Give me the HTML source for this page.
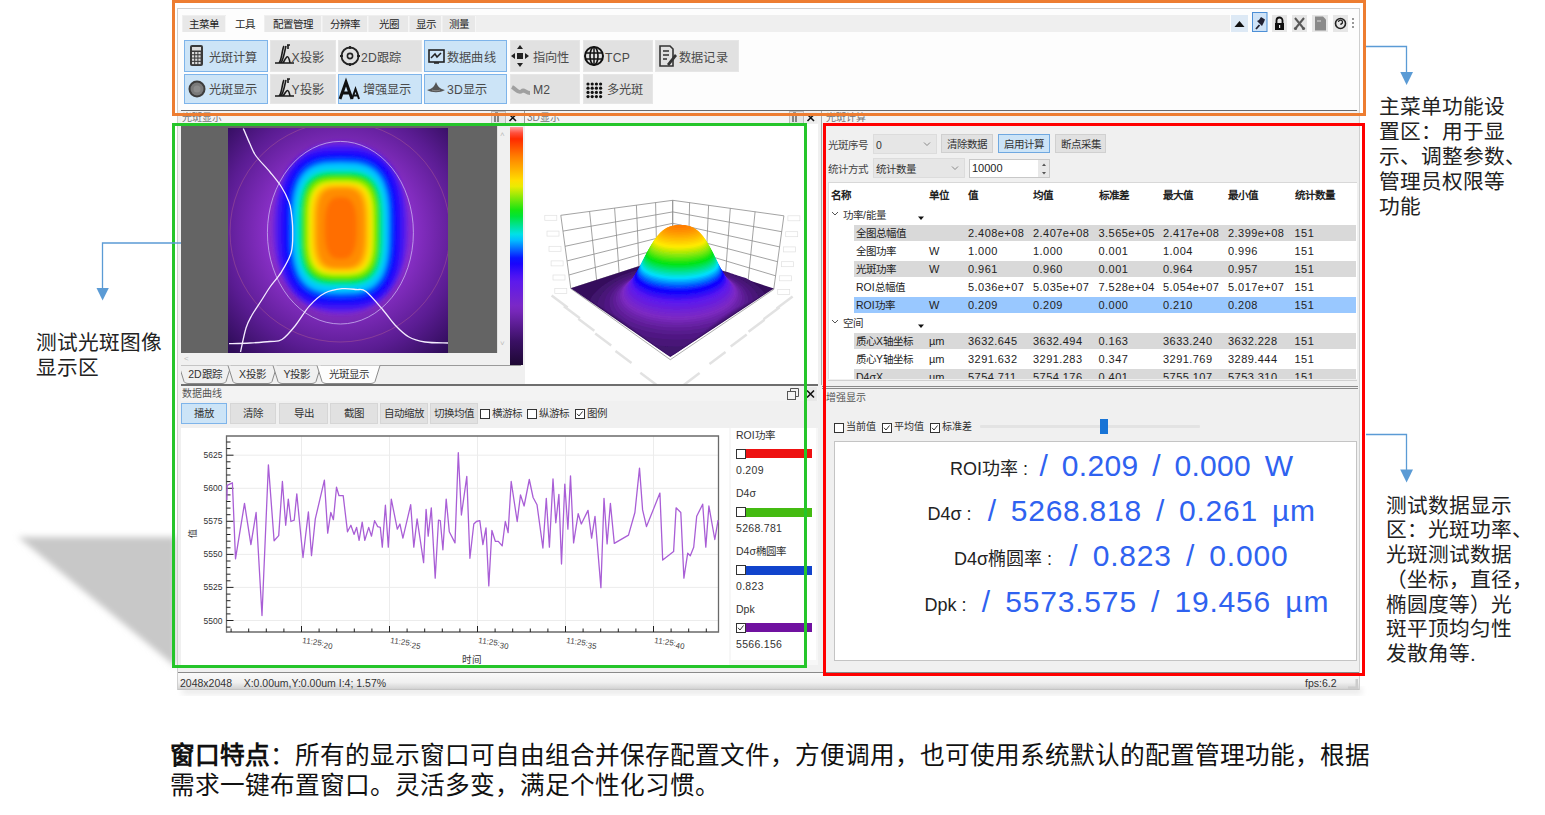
<!DOCTYPE html><html lang="zh-CN"><head><meta charset="utf-8"><style>html,body{margin:0;padding:0;width:1545px;height:815px;overflow:hidden;background:#fff;font-family:"Liberation Sans",sans-serif}.t{position:absolute;white-space:nowrap}</style></head><body><svg style="position:absolute;left:0;top:0" width="1545" height="815"><defs><filter id="sb" x="-20%" y="-20%" width="140%" height="140%"><feGaussianBlur stdDeviation="3"/></filter></defs><polygon points="18,537 176,537 176,667" fill="#c8c8c8" filter="url(#sb)"/><rect x="182" y="688" width="1180" height="6" fill="#e6e6e6" filter="url(#sb)"/></svg>
<div style="position:absolute;left:177px;top:8px;width:1183px;height:682px;background:#f0f0f0;border:1px solid #cfcfcf;box-sizing:border-box"></div>
<div style="position:absolute;left:178px;top:9px;width:1181px;height:101px;background:#fdfdfd"></div>
<div style="position:absolute;left:182px;top:15px;width:1048px;height:17px;background:#efefef"></div>
<div style="position:absolute;left:183px;top:16px;width:42px;height:16px;background:#e8e8e8;border-right:1px solid #f6f6f6"></div>
<div class="t" style="left:182px;top:16px;font-size:10.5px;line-height:16px;color:#222;width:44px;text-align:center;">主菜单</div>
<div style="position:absolute;left:226px;top:14px;width:38px;height:19px;background:#fdfdfd"></div>
<div class="t" style="left:226px;top:16px;font-size:10.5px;line-height:16px;color:#222;width:38px;text-align:center;">工具</div>
<div style="position:absolute;left:265px;top:16px;width:56px;height:16px;background:#e8e8e8;border-right:1px solid #f6f6f6"></div>
<div class="t" style="left:264px;top:16px;font-size:10.5px;line-height:16px;color:#222;width:58px;text-align:center;">配置管理</div>
<div style="position:absolute;left:323px;top:16px;width:44px;height:16px;background:#e8e8e8;border-right:1px solid #f6f6f6"></div>
<div class="t" style="left:322px;top:16px;font-size:10.5px;line-height:16px;color:#222;width:46px;text-align:center;">分辨率</div>
<div style="position:absolute;left:369px;top:16px;width:39px;height:16px;background:#e8e8e8;border-right:1px solid #f6f6f6"></div>
<div class="t" style="left:368px;top:16px;font-size:10.5px;line-height:16px;color:#222;width:41px;text-align:center;">光圈</div>
<div style="position:absolute;left:410px;top:16px;width:31px;height:16px;background:#e8e8e8;border-right:1px solid #f6f6f6"></div>
<div class="t" style="left:409px;top:16px;font-size:10.5px;line-height:16px;color:#222;width:33px;text-align:center;">显示</div>
<div style="position:absolute;left:443px;top:16px;width:32px;height:16px;background:#e8e8e8;border-right:1px solid #f6f6f6"></div>
<div class="t" style="left:442px;top:16px;font-size:10.5px;line-height:16px;color:#222;width:34px;text-align:center;">测量</div>
<div style="position:absolute;left:1231px;top:15px;width:17px;height:17px;background:#dde9f5"></div>
<svg style="position:absolute;left:1231px;top:10px" width="130" height="24"><polygon points="3.5,17 8.5,11 13.5,17" fill="#111"/><rect x="21.5" y="2.5" width="14.5" height="19" fill="#cfe3f7" stroke="#4d8fd6" stroke-width="1"/><path d="M25 19 L28.5 15" stroke="#223" stroke-width="1.8"/><path d="M26 11 L31 16 L33 12 L34 9.5 L30 7 L28 10 Z" fill="#223"/><rect x="41" y="5" width="15" height="17" fill="#e6e6e6"/><path d="M45.5 13.5 V10.5 A3 3 0 0 1 51.5 10.5 V13.5" stroke="#111" stroke-width="1.8" fill="none"/><rect x="44" y="13" width="9" height="7" fill="#111"/><rect x="48" y="15" width="1.2" height="3" fill="#eee"/><rect x="61" y="5" width="15" height="17" fill="#e6e6e6"/><path d="M64 8 L73 19 M73 8 L64 19" stroke="#5a5a5a" stroke-width="2"/><circle cx="64.5" cy="18.5" r="1.6" fill="#5a5a5a"/><circle cx="72.5" cy="18.5" r="1.6" fill="#5a5a5a"/><rect x="81" y="5" width="16" height="17" fill="#e6e6e6"/><path d="M84 6.5 H92 L95 9.5 V20.5 H84 Z" fill="#8a8a8a"/><path d="M86 11 H90" stroke="#ddd" stroke-width="1"/><rect x="102" y="5" width="15" height="17" fill="#e6e6e6"/><circle cx="109.5" cy="13.5" r="5" stroke="#222" stroke-width="1.6" fill="none"/><path d="M107.5 12 A2 2 0 1 1 110 14 V15" stroke="#222" stroke-width="1.3" fill="none"/><path d="M122 8 V18" stroke="#777" stroke-width="1.5" stroke-dasharray="2,2"/></svg>
<div style="position:absolute;left:184px;top:40px;width:84px;height:32px;background:#cce4f7;border:1px solid #7eb4ea;box-sizing:border-box"></div>
<svg style="position:absolute;left:184px;top:40px" width="84" height="32"><rect x="6" y="5" width="13" height="21" rx="2" fill="#3a3a3a"/><rect x="8" y="7" width="9" height="3.5" fill="#dcdcdc"/><rect x="8.0" y="12.0" width="2.2" height="2.2" fill="#dcdcdc"/><rect x="8.0" y="15.3" width="2.2" height="2.2" fill="#dcdcdc"/><rect x="8.0" y="18.6" width="2.2" height="2.2" fill="#dcdcdc"/><rect x="8.0" y="21.9" width="2.2" height="2.2" fill="#dcdcdc"/><rect x="11.2" y="12.0" width="2.2" height="2.2" fill="#dcdcdc"/><rect x="11.2" y="15.3" width="2.2" height="2.2" fill="#dcdcdc"/><rect x="11.2" y="18.6" width="2.2" height="2.2" fill="#dcdcdc"/><rect x="11.2" y="21.9" width="2.2" height="2.2" fill="#dcdcdc"/><rect x="14.4" y="12.0" width="2.2" height="2.2" fill="#dcdcdc"/><rect x="14.4" y="15.3" width="2.2" height="2.2" fill="#dcdcdc"/><rect x="14.4" y="18.6" width="2.2" height="2.2" fill="#dcdcdc"/><rect x="14.4" y="21.9" width="2.2" height="2.2" fill="#dcdcdc"/></svg>
<div class="t" style="left:208.5px;top:50.5px;font-size:12.2px;line-height:14px;color:#4a4a4a;letter-spacing:0.2px;">光斑计算</div>
<div style="position:absolute;left:270px;top:40px;width:66px;height:32px;background:#e1e1e1;border:1px solid #e6e6e6;box-sizing:border-box"></div>
<svg style="position:absolute;left:270px;top:40px" width="66" height="32"><path d="M5 23 H24 M9 23 C12 20 12 9 14 6 M11 23 C14 18 15 9 16 6 M13 23 C16 18 18 12 20 23 M17 5 H20 M18 5 V9" stroke="#1a1a1a" stroke-width="1.6" fill="none"/></svg>
<div class="t" style="left:291.5px;top:50.5px;font-size:12.2px;line-height:14px;color:#4a4a4a;letter-spacing:0.2px;">X投影</div>
<div style="position:absolute;left:338px;top:40px;width:84px;height:32px;background:#e1e1e1;border:1px solid #e6e6e6;box-sizing:border-box"></div>
<svg style="position:absolute;left:338px;top:40px" width="84" height="32"><circle cx="12" cy="16" r="8.5" stroke="#222" stroke-width="1.8" fill="none"/><circle cx="12" cy="16" r="2.6" stroke="#222" stroke-width="1.6" fill="none"/><path d="M12 6 V9 M12 23 V26 M2 16 H5 M19 16 H22" stroke="#222" stroke-width="1.8"/></svg>
<div class="t" style="left:361px;top:50.5px;font-size:12.2px;line-height:14px;color:#4a4a4a;letter-spacing:0.2px;">2D跟踪</div>
<div style="position:absolute;left:424px;top:40px;width:83px;height:32px;background:#cce4f7;border:1px solid #7eb4ea;box-sizing:border-box"></div>
<svg style="position:absolute;left:424px;top:40px" width="83" height="32"><rect x="5" y="10" width="15" height="12" stroke="#222" stroke-width="1.6" fill="none"/><path d="M7 18 L11 14 L13 17 L17 13" stroke="#222" stroke-width="1.5" fill="none"/><path d="M10 23 H15" stroke="#222" stroke-width="1.5"/></svg>
<div class="t" style="left:447px;top:50.5px;font-size:12.2px;line-height:14px;color:#4a4a4a;letter-spacing:0.2px;">数据曲线</div>
<div style="position:absolute;left:510px;top:40px;width:70px;height:32px;background:#e1e1e1;border:1px solid #e6e6e6;box-sizing:border-box"></div>
<svg style="position:absolute;left:510px;top:40px" width="70" height="32"><path d="M10 5 L13 9 H7 Z M10 27 L13 23 H7 Z M1 16 L5 13 V19 Z M19 16 L15 13 V19 Z" fill="#222"/><rect x="7" y="13" width="6" height="6" fill="#222"/></svg>
<div class="t" style="left:533px;top:50.5px;font-size:12.2px;line-height:14px;color:#4a4a4a;letter-spacing:0.2px;">指向性</div>
<div style="position:absolute;left:583px;top:40px;width:70px;height:32px;background:#e1e1e1;border:1px solid #e6e6e6;box-sizing:border-box"></div>
<svg style="position:absolute;left:583px;top:40px" width="70" height="32"><circle cx="11" cy="16" r="9" stroke="#111" stroke-width="2" fill="none"/><ellipse cx="11" cy="16" rx="4" ry="9" stroke="#111" stroke-width="1.6" fill="none"/><path d="M2 13 H20 M2 19 H20 M11 7 V25" stroke="#111" stroke-width="1.5"/></svg>
<div class="t" style="left:605px;top:50.5px;font-size:12.2px;line-height:14px;color:#4a4a4a;letter-spacing:0.2px;">TCP</div>
<div style="position:absolute;left:655px;top:40px;width:84px;height:32px;background:#e1e1e1;border:1px solid #e6e6e6;box-sizing:border-box"></div>
<svg style="position:absolute;left:655px;top:40px" width="84" height="32"><path d="M5 6 H15 L18 9 V26 H5 Z" stroke="#333" stroke-width="1.6" fill="none"/><path d="M8 11 H14 M8 15 H14 M8 19 H12" stroke="#333" stroke-width="1.3"/><path d="M12 24 L20 14 L22 16 L14 26 Z" fill="#333"/></svg>
<div class="t" style="left:679px;top:50.5px;font-size:12.2px;line-height:14px;color:#4a4a4a;letter-spacing:0.2px;">数据记录</div>
<div style="position:absolute;left:184px;top:74px;width:84px;height:30px;background:#cce4f7;border:1px solid #7eb4ea;box-sizing:border-box"></div>
<svg style="position:absolute;left:184px;top:74px" width="84" height="30"><circle cx="13" cy="15" r="8.5" fill="#3c3c3c"/><circle cx="13" cy="15" r="6.5" fill="#7a7a7a"/><circle cx="13" cy="15" r="3.5" fill="#8c8c8c"/></svg>
<div class="t" style="left:208.5px;top:83px;font-size:12.2px;line-height:14px;color:#4a4a4a;letter-spacing:0.2px;">光斑显示</div>
<div style="position:absolute;left:270px;top:74px;width:66px;height:30px;background:#e1e1e1;border:1px solid #e6e6e6;box-sizing:border-box"></div>
<svg style="position:absolute;left:270px;top:74px" width="66" height="30"><path d="M5 22 H24 M9 22 C12 20 12 9 14 6 M11 22 C14 18 15 9 16 6 M13 22 C16 18 18 12 20 22 M17 5 H20 M18 5 V9" stroke="#1a1a1a" stroke-width="1.6" fill="none"/></svg>
<div class="t" style="left:291.5px;top:83px;font-size:12.2px;line-height:14px;color:#4a4a4a;letter-spacing:0.2px;">Y投影</div>
<div style="position:absolute;left:338px;top:74px;width:84px;height:30px;background:#cce4f7;border:1px solid #7eb4ea;box-sizing:border-box"></div>
<svg style="position:absolute;left:338px;top:74px" width="84" height="30"><path d="M2 25 L8 8 L14 25 M4.5 19 H11.5" stroke="#111" stroke-width="3" fill="none"/><path d="M14 25 L17.5 15 L21 25 M15.5 21.5 H19.5" stroke="#111" stroke-width="2" fill="none"/></svg>
<div class="t" style="left:362.5px;top:83px;font-size:12.2px;line-height:14px;color:#4a4a4a;letter-spacing:0.2px;">增强显示</div>
<div style="position:absolute;left:424px;top:74px;width:83px;height:30px;background:#cce4f7;border:1px solid #7eb4ea;box-sizing:border-box"></div>
<svg style="position:absolute;left:424px;top:74px" width="83" height="30"><path d="M3 16 C8 15 10 13 12 8 C14 13 16 15 21 16 C16 19 8 19 3 16 Z" fill="#555"/><path d="M8 16 C10 17 14 17 16 16" stroke="#888" fill="none"/></svg>
<div class="t" style="left:447px;top:83px;font-size:12.2px;line-height:14px;color:#4a4a4a;letter-spacing:0.2px;">3D显示</div>
<div style="position:absolute;left:510px;top:74px;width:70px;height:30px;background:#e1e1e1;border:1px solid #e6e6e6;box-sizing:border-box"></div>
<svg style="position:absolute;left:510px;top:74px" width="70" height="30"><path d="M2 13 C6 15 8 20 12 17 C14 15 16 19 20 19" stroke="#a0a0a0" stroke-width="4" fill="none"/></svg>
<div class="t" style="left:533px;top:83px;font-size:12.2px;line-height:14px;color:#4a4a4a;letter-spacing:0.2px;">M2</div>
<div style="position:absolute;left:583px;top:74px;width:70px;height:30px;background:#e1e1e1;border:1px solid #e6e6e6;box-sizing:border-box"></div>
<svg style="position:absolute;left:583px;top:74px" width="70" height="30"><circle cx="5.0" cy="10.0" r="1.6" fill="#111"/><circle cx="5.0" cy="14.2" r="1.6" fill="#111"/><circle cx="5.0" cy="18.4" r="1.6" fill="#111"/><circle cx="5.0" cy="22.6" r="1.6" fill="#111"/><circle cx="9.2" cy="10.0" r="1.6" fill="#111"/><circle cx="9.2" cy="14.2" r="1.6" fill="#111"/><circle cx="9.2" cy="18.4" r="1.6" fill="#111"/><circle cx="9.2" cy="22.6" r="1.6" fill="#111"/><circle cx="13.4" cy="10.0" r="1.6" fill="#111"/><circle cx="13.4" cy="14.2" r="1.6" fill="#111"/><circle cx="13.4" cy="18.4" r="1.6" fill="#111"/><circle cx="13.4" cy="22.6" r="1.6" fill="#111"/><circle cx="17.6" cy="10.0" r="1.6" fill="#111"/><circle cx="17.6" cy="14.2" r="1.6" fill="#111"/><circle cx="17.6" cy="18.4" r="1.6" fill="#111"/><circle cx="17.6" cy="22.6" r="1.6" fill="#111"/></svg>
<div class="t" style="left:607px;top:83px;font-size:12.2px;line-height:14px;color:#4a4a4a;letter-spacing:0.2px;">多光斑</div>
<div style="position:absolute;left:181px;top:110px;width:1176px;height:1px;background:#6a6a6a"></div>
<div style="position:absolute;left:181px;top:111px;width:340px;height:13px;background:#f3f3f3"></div>
<div class="t" style="left:182px;top:112px;font-size:10px;line-height:11px;color:#777;">光斑显示</div>
<svg style="position:absolute;left:491px;top:111px" width="30" height="13"><rect x="0.5" y="0.5" width="14" height="12" fill="#e4e4e4" stroke="#bbb"/><path d="M4 2 V11 M7 2 V11 M4 2 H7" stroke="#444" stroke-width="1.2" fill="none"/><rect x="15.5" y="0.5" width="13" height="12" fill="#ededed"/><path d="M18.5 3.5 L25 10 M25 3.5 L18.5 10" stroke="#111" stroke-width="1.6"/></svg>
<div style="position:absolute;left:521px;top:111px;width:4px;height:274px;background:#f0f0f0"></div>
<div style="position:absolute;left:524px;top:111px;width:1px;height:13px;background:#999"></div>
<div style="position:absolute;left:525px;top:111px;width:293px;height:13px;background:#f3f3f3"></div>
<div class="t" style="left:527px;top:112px;font-size:10px;line-height:11px;color:#777;">3D显示</div>
<svg style="position:absolute;left:789px;top:111px" width="30" height="13"><rect x="0.5" y="0.5" width="14" height="12" fill="#e4e4e4" stroke="#bbb"/><path d="M4 2 V11 M7 2 V11 M4 2 H7" stroke="#444" stroke-width="1.2" fill="none"/><rect x="15.5" y="0.5" width="13" height="12" fill="#ededed"/><path d="M18.5 3.5 L25 10 M25 3.5 L18.5 10" stroke="#111" stroke-width="1.6"/></svg>
<div style="position:absolute;left:181px;top:126px;width:317px;height:227px;background:#646464"></div>
<svg style="position:absolute;left:228px;top:128px" width="220" height="225" viewBox="0 0 220 225"><defs><radialGradient id="glow" cx="0.51" cy="0.46" r="0.72" fx="0.51" fy="0.46"><stop offset="0" stop-color="#9a34d8"/><stop offset="0.45" stop-color="#8a30c8"/><stop offset="0.75" stop-color="#5a1c92"/><stop offset="1" stop-color="#2e0c58"/></radialGradient><filter id="bl" x="-10%" y="-10%" width="120%" height="120%"><feGaussianBlur stdDeviation="2.2"/></filter></defs><rect width="220" height="225" fill="url(#glow)"/><g filter="url(#bl)"><polygon points="180.7,100.0 180.5,109.4 179.8,117.5 178.6,125.2 177.0,132.4 174.9,139.3 172.4,145.8 169.4,151.9 166.1,157.5 162.3,162.8 158.2,167.5 153.7,171.7 148.9,175.5 143.8,178.6 138.3,181.3 132.6,183.3 126.5,184.8 120.1,185.7 112.7,186.0 105.3,185.7 98.9,184.8 92.8,183.3 87.1,181.3 81.6,178.6 76.5,175.5 71.7,171.7 67.2,167.5 63.1,162.8 59.3,157.5 56.0,151.9 53.0,145.8 50.5,139.3 48.4,132.4 46.8,125.2 45.6,117.5 44.9,109.4 44.7,100.0 44.9,90.6 45.6,82.5 46.8,74.8 48.4,67.6 50.5,60.7 53.0,54.2 56.0,48.1 59.3,42.5 63.1,37.2 67.2,32.5 71.7,28.3 76.5,24.5 81.6,21.4 87.1,18.7 92.8,16.7 98.9,15.2 105.3,14.3 112.7,14.0 120.1,14.3 126.5,15.2 132.6,16.7 138.3,18.7 143.8,21.4 148.9,24.5 153.7,28.3 158.2,32.5 162.3,37.2 166.1,42.5 169.4,48.1 172.4,54.2 174.9,60.7 177.0,67.6 178.6,74.8 179.8,82.5 180.5,90.6" fill="#6a22e0"/><polygon points="176.7,100.0 176.5,112.6 176.0,121.3 175.0,129.0 173.7,135.9 172.0,142.3 170.0,148.1 167.6,153.5 164.8,158.4 161.7,162.8 158.3,166.8 154.4,170.3 150.3,173.4 145.7,176.0 140.7,178.2 135.3,179.8 129.3,181.0 122.5,181.8 112.7,182.0 102.9,181.8 96.1,181.0 90.1,179.8 84.7,178.2 79.7,176.0 75.1,173.4 71.0,170.3 67.1,166.8 63.7,162.8 60.6,158.4 57.8,153.5 55.4,148.1 53.4,142.3 51.7,135.9 50.4,129.0 49.4,121.3 48.9,112.6 48.7,100.0 48.9,87.4 49.4,78.7 50.4,71.0 51.7,64.1 53.4,57.7 55.4,51.9 57.8,46.5 60.6,41.6 63.7,37.2 67.1,33.2 71.0,29.7 75.1,26.6 79.7,24.0 84.7,21.8 90.1,20.2 96.1,19.0 102.9,18.2 112.7,18.0 122.5,18.2 129.3,19.0 135.3,20.2 140.7,21.8 145.7,24.0 150.3,26.6 154.4,29.7 158.3,33.2 161.7,37.2 164.8,41.6 167.6,46.5 170.0,51.9 172.0,57.7 173.7,64.1 175.0,71.0 176.0,78.7 176.5,87.4" fill="#3a12f4"/><polygon points="170.7,100.0 170.5,114.1 170.1,122.7 169.3,129.9 168.3,136.3 166.9,142.0 165.2,147.1 163.2,151.8 161.0,156.0 158.4,159.8 155.5,163.2 152.2,166.2 148.7,168.8 144.7,171.0 140.4,172.8 135.5,174.2 130.0,175.2 123.5,175.8 112.7,176.0 101.9,175.8 95.4,175.2 89.9,174.2 85.0,172.8 80.7,171.0 76.7,168.8 73.2,166.2 69.9,163.2 67.0,159.8 64.4,156.0 62.2,151.8 60.2,147.1 58.5,142.0 57.1,136.3 56.1,129.9 55.3,122.7 54.9,114.1 54.7,100.0 54.9,85.9 55.3,77.3 56.1,70.1 57.1,63.7 58.5,58.0 60.2,52.9 62.2,48.2 64.4,44.0 67.0,40.2 69.9,36.8 73.2,33.8 76.7,31.2 80.7,29.0 85.0,27.2 89.9,25.8 95.4,24.8 101.9,24.2 112.7,24.0 123.5,24.2 130.0,24.8 135.5,25.8 140.4,27.2 144.7,29.0 148.7,31.2 152.2,33.8 155.5,36.8 158.4,40.2 161.0,44.0 163.2,48.2 165.2,52.9 166.9,58.0 168.3,63.7 169.3,70.1 170.1,77.3 170.5,85.9" fill="#0a00ff"/><polygon points="164.7,100.0 164.6,113.8 164.2,121.8 163.5,128.4 162.6,134.2 161.4,139.4 159.9,144.1 158.2,148.3 156.2,152.1 154.0,155.6 151.4,158.6 148.6,161.3 145.5,163.6 142.0,165.6 138.1,167.2 133.8,168.4 128.9,169.3 122.9,169.8 112.7,170.0 102.5,169.8 96.5,169.3 91.6,168.4 87.3,167.2 83.4,165.6 79.9,163.6 76.8,161.3 74.0,158.6 71.4,155.6 69.2,152.1 67.2,148.3 65.5,144.1 64.0,139.4 62.8,134.2 61.9,128.4 61.2,121.8 60.8,113.8 60.7,100.0 60.8,86.2 61.2,78.2 61.9,71.6 62.8,65.8 64.0,60.6 65.5,55.9 67.2,51.7 69.2,47.9 71.4,44.4 74.0,41.4 76.8,38.7 79.9,36.4 83.4,34.4 87.3,32.8 91.6,31.6 96.5,30.7 102.5,30.2 112.7,30.0 122.9,30.2 128.9,30.7 133.8,31.6 138.1,32.8 142.0,34.4 145.5,36.4 148.6,38.7 151.4,41.4 154.0,44.4 156.2,47.9 158.2,51.7 159.9,55.9 161.4,60.6 162.6,65.8 163.5,71.6 164.2,78.2 164.6,86.2" fill="#0050ff"/><polygon points="160.7,100.0 160.6,113.5 160.2,121.0 159.6,127.2 158.8,132.5 157.7,137.3 156.4,141.6 154.9,145.4 153.1,148.9 151.1,152.0 148.8,154.7 146.2,157.2 143.4,159.2 140.2,161.0 136.7,162.4 132.8,163.6 128.2,164.4 122.6,164.8 112.7,165.0 102.8,164.8 97.2,164.4 92.6,163.6 88.7,162.4 85.2,161.0 82.0,159.2 79.2,157.2 76.6,154.7 74.3,152.0 72.3,148.9 70.5,145.4 69.0,141.6 67.7,137.3 66.6,132.5 65.8,127.2 65.2,121.0 64.8,113.5 64.7,100.0 64.8,86.5 65.2,79.0 65.8,72.8 66.6,67.5 67.7,62.7 69.0,58.4 70.5,54.6 72.3,51.1 74.3,48.0 76.6,45.3 79.2,42.8 82.0,40.8 85.2,39.0 88.7,37.6 92.6,36.4 97.2,35.6 102.8,35.2 112.7,35.0 122.6,35.2 128.2,35.6 132.8,36.4 136.7,37.6 140.2,39.0 143.4,40.8 146.2,42.8 148.8,45.3 151.1,48.0 153.1,51.1 154.9,54.6 156.4,58.4 157.7,62.7 158.8,67.5 159.6,72.8 160.2,79.0 160.6,86.5" fill="#00c8ff"/><polygon points="155.7,100.0 155.6,113.2 155.3,120.1 154.8,125.6 154.1,130.3 153.2,134.4 152.1,138.1 150.8,141.4 149.3,144.4 147.6,147.0 145.6,149.3 143.4,151.4 141.0,153.2 138.2,154.6 135.1,155.9 131.7,156.8 127.6,157.5 122.5,157.9 112.7,158.0 102.9,157.9 97.8,157.5 93.7,156.8 90.3,155.9 87.2,154.6 84.4,153.2 82.0,151.4 79.8,149.3 77.8,147.0 76.1,144.4 74.6,141.4 73.3,138.1 72.2,134.4 71.3,130.3 70.6,125.6 70.1,120.1 69.8,113.2 69.7,100.0 69.8,86.8 70.1,79.9 70.6,74.4 71.3,69.7 72.2,65.6 73.3,61.9 74.6,58.6 76.1,55.6 77.8,53.0 79.8,50.7 82.0,48.6 84.4,46.8 87.2,45.4 90.3,44.1 93.7,43.2 97.8,42.5 102.9,42.1 112.7,42.0 122.5,42.1 127.6,42.5 131.7,43.2 135.1,44.1 138.2,45.4 141.0,46.8 143.4,48.6 145.6,50.7 147.6,53.0 149.3,55.6 150.8,58.6 152.1,61.9 153.2,65.6 154.1,69.7 154.8,74.4 155.3,79.9 155.6,86.8" fill="#00e8b0"/><polygon points="152.7,100.0 152.6,113.1 152.3,119.6 151.9,124.8 151.3,129.3 150.5,133.1 149.5,136.6 148.3,139.7 146.9,142.4 145.3,144.9 143.5,147.0 141.5,148.9 139.3,150.5 136.8,151.9 134.0,153.0 130.8,153.9 127.0,154.5 122.2,154.9 112.7,155.0 103.2,154.9 98.4,154.5 94.6,153.9 91.4,153.0 88.6,151.9 86.1,150.5 83.9,148.9 81.9,147.0 80.1,144.9 78.5,142.4 77.1,139.7 75.9,136.6 74.9,133.1 74.1,129.3 73.5,124.8 73.1,119.6 72.8,113.1 72.7,100.0 72.8,86.9 73.1,80.4 73.5,75.2 74.1,70.7 74.9,66.9 75.9,63.4 77.1,60.3 78.5,57.6 80.1,55.1 81.9,53.0 83.9,51.1 86.1,49.5 88.6,48.1 91.4,47.0 94.6,46.1 98.4,45.5 103.2,45.1 112.7,45.0 122.2,45.1 127.0,45.5 130.8,46.1 134.0,47.0 136.8,48.1 139.3,49.5 141.5,51.1 143.5,53.0 145.3,55.1 146.9,57.6 148.3,60.3 149.5,63.4 150.5,66.9 151.3,70.7 151.9,75.2 152.3,80.4 152.6,86.9" fill="#00e010"/><polygon points="148.7,100.0 148.6,112.4 148.4,118.4 148.0,123.1 147.4,127.1 146.7,130.6 145.9,133.6 144.8,136.4 143.6,138.8 142.2,141.0 140.7,142.9 138.9,144.6 136.9,146.1 134.7,147.3 132.2,148.3 129.3,149.0 125.9,149.6 121.6,149.9 112.7,150.0 103.8,149.9 99.5,149.6 96.1,149.0 93.2,148.3 90.7,147.3 88.5,146.1 86.5,144.6 84.7,142.9 83.2,141.0 81.8,138.8 80.6,136.4 79.5,133.6 78.7,130.6 78.0,127.1 77.4,123.1 77.0,118.4 76.8,112.4 76.7,100.0 76.8,87.6 77.0,81.6 77.4,76.9 78.0,72.9 78.7,69.4 79.5,66.4 80.6,63.6 81.8,61.2 83.2,59.0 84.7,57.1 86.5,55.4 88.5,53.9 90.7,52.7 93.2,51.7 96.1,51.0 99.5,50.4 103.8,50.1 112.7,50.0 121.6,50.1 125.9,50.4 129.3,51.0 132.2,51.7 134.7,52.7 136.9,53.9 138.9,55.4 140.7,57.1 142.2,59.0 143.6,61.2 144.8,63.6 145.9,66.4 146.7,69.4 147.4,72.9 148.0,76.9 148.4,81.6 148.6,87.6" fill="#90ee00"/><polygon points="144.7,100.0 144.6,111.4 144.4,116.9 144.1,121.2 143.6,124.9 143.0,128.1 142.2,131.0 141.3,133.5 140.2,135.7 139.0,137.7 137.6,139.5 136.0,141.0 134.2,142.4 132.3,143.5 130.0,144.4 127.5,145.1 124.5,145.6 120.6,145.9 112.7,146.0 104.8,145.9 100.9,145.6 97.9,145.1 95.4,144.4 93.1,143.5 91.2,142.4 89.4,141.0 87.8,139.5 86.4,137.7 85.2,135.7 84.1,133.5 83.2,131.0 82.4,128.1 81.8,124.9 81.3,121.2 81.0,116.9 80.8,111.4 80.7,100.0 80.8,88.6 81.0,83.1 81.3,78.8 81.8,75.1 82.4,71.9 83.2,69.0 84.1,66.5 85.2,64.3 86.4,62.3 87.8,60.5 89.4,59.0 91.2,57.6 93.1,56.5 95.4,55.6 97.9,54.9 100.9,54.4 104.8,54.1 112.7,54.0 120.6,54.1 124.5,54.4 127.5,54.9 130.0,55.6 132.3,56.5 134.2,57.6 136.0,59.0 137.6,60.5 139.0,62.3 140.2,64.3 141.3,66.5 142.2,69.0 143.0,71.9 143.6,75.1 144.1,78.8 144.4,83.1 144.6,88.6" fill="#ffe600"/><polygon points="140.7,100.0 140.6,110.7 140.5,115.8 140.2,119.9 139.7,123.3 139.2,126.3 138.5,128.9 137.7,131.3 136.7,133.4 135.7,135.3 134.5,136.9 133.1,138.4 131.5,139.6 129.8,140.6 127.9,141.5 125.6,142.2 123.0,142.6 119.6,142.9 112.7,143.0 105.8,142.9 102.4,142.6 99.8,142.2 97.5,141.5 95.6,140.6 93.9,139.6 92.3,138.4 90.9,136.9 89.7,135.3 88.7,133.4 87.7,131.3 86.9,128.9 86.2,126.3 85.7,123.3 85.2,119.9 84.9,115.8 84.8,110.7 84.7,100.0 84.8,89.3 84.9,84.2 85.2,80.1 85.7,76.7 86.2,73.7 86.9,71.1 87.7,68.7 88.7,66.6 89.7,64.7 90.9,63.1 92.3,61.6 93.9,60.4 95.6,59.4 97.5,58.5 99.8,57.8 102.4,57.4 105.8,57.1 112.7,57.0 119.6,57.1 123.0,57.4 125.6,57.8 127.9,58.5 129.8,59.4 131.5,60.4 133.1,61.6 134.5,63.1 135.7,64.7 136.7,66.6 137.7,68.7 138.5,71.1 139.2,73.7 139.7,76.7 140.2,80.1 140.5,84.2 140.6,89.3" fill="#ffb800"/><polygon points="136.7,100.0 136.6,109.5 136.5,114.3 136.2,118.1 135.8,121.3 135.4,124.1 134.8,126.6 134.0,128.8 133.2,130.8 132.3,132.6 131.2,134.2 130.0,135.6 128.7,136.8 127.2,137.8 125.5,138.6 123.5,139.2 121.3,139.6 118.4,139.9 112.7,140.0 107.0,139.9 104.1,139.6 101.9,139.2 99.9,138.6 98.2,137.8 96.7,136.8 95.4,135.6 94.2,134.2 93.1,132.6 92.2,130.8 91.4,128.8 90.6,126.6 90.0,124.1 89.6,121.3 89.2,118.1 88.9,114.3 88.8,109.5 88.7,100.0 88.8,90.5 88.9,85.7 89.2,81.9 89.6,78.7 90.0,75.9 90.6,73.4 91.4,71.2 92.2,69.2 93.1,67.4 94.2,65.8 95.4,64.4 96.7,63.2 98.2,62.2 99.9,61.4 101.9,60.8 104.1,60.4 107.0,60.1 112.7,60.0 118.4,60.1 121.3,60.4 123.5,60.8 125.5,61.4 127.2,62.2 128.7,63.2 130.0,64.4 131.2,65.8 132.3,67.4 133.2,69.2 134.0,71.2 134.8,73.4 135.4,75.9 135.8,78.7 136.2,81.9 136.5,85.7 136.6,90.5" fill="#ff8c00"/><polygon points="128.7,100.0 128.7,105.4 128.5,108.9 128.3,111.8 128.0,114.4 127.6,116.8 127.1,118.9 126.6,120.8 125.9,122.6 125.2,124.2 124.4,125.6 123.5,126.9 122.5,128.0 121.3,128.9 120.1,129.7 118.8,130.2 117.3,130.7 115.5,130.9 112.7,131.0 109.9,130.9 108.1,130.7 106.6,130.2 105.3,129.7 104.1,128.9 102.9,128.0 101.9,126.9 101.0,125.6 100.2,124.2 99.5,122.6 98.8,120.8 98.3,118.9 97.8,116.8 97.4,114.4 97.1,111.8 96.9,108.9 96.7,105.4 96.7,100.0 96.7,94.6 96.9,91.1 97.1,88.2 97.4,85.6 97.8,83.2 98.3,81.1 98.8,79.2 99.5,77.4 100.2,75.8 101.0,74.4 101.9,73.1 102.9,72.0 104.1,71.1 105.3,70.3 106.6,69.8 108.1,69.3 109.9,69.1 112.7,69.0 115.5,69.1 117.3,69.3 118.8,69.8 120.1,70.3 121.3,71.1 122.5,72.0 123.5,73.1 124.4,74.4 125.2,75.8 125.9,77.4 126.6,79.2 127.1,81.1 127.6,83.2 128.0,85.6 128.3,88.2 128.5,91.1 128.7,94.6" fill="#ff6e00"/></g><ellipse cx="112.39999999999998" cy="104.69999999999999" rx="73" ry="91.3" fill="none" stroke="#c8b0f0" stroke-width="1" opacity="0.8"/><circle cx="112" cy="104" r="110" fill="none" stroke="#b06090" stroke-width="1" opacity="0.45"/><path d="M1.0,215.7 C4.5,215.6 15.2,215.4 22.0,215.0 C28.8,214.6 36.7,214.1 42.0,213.5 C47.3,212.9 49.8,214.1 54.0,211.5 C58.2,208.9 62.4,203.7 67.0,198.0 C71.6,192.3 76.7,183.1 81.7,177.6 C86.7,172.1 91.6,167.8 97.0,165.0 C102.4,162.2 108.8,161.3 114.0,160.7 C119.2,160.1 124.0,161.0 128.0,161.5 C132.0,162.0 133.5,160.1 138.0,163.5 C142.5,166.9 150.2,176.4 155.0,182.0 C159.8,187.6 162.8,192.6 167.0,197.0 C171.2,201.4 175.5,205.9 180.5,208.7 C185.5,211.5 190.4,212.9 197.0,214.0 C203.6,215.1 216.2,214.8 220.0,215.0 " fill="none" stroke="#f4ecff" stroke-width="1.3" stroke-linejoin="round"/><path d="M15.3,0.4 C16.4,3.0 19.9,11.4 22.0,16.0 C24.1,20.6 24.7,23.3 28.0,28.0 C31.3,32.7 37.8,38.8 42.0,44.0 C46.2,49.2 50.3,54.0 53.5,59.0 C56.7,64.0 59.4,69.8 61.0,74.0 C62.6,78.2 62.7,79.9 63.3,84.5 C63.9,89.1 64.7,94.8 64.7,101.4 C64.7,108.0 65.2,116.9 63.3,124.0 C61.4,131.1 57.1,138.0 53.5,143.8 C49.9,149.6 45.3,154.3 42.0,159.0 C38.7,163.7 36.7,167.3 33.7,172.0 C30.7,176.7 26.6,182.3 24.0,187.0 C21.4,191.7 19.9,193.8 18.0,200.0 C16.1,206.2 13.4,220.0 12.5,224.0 " fill="none" stroke="#f4ecff" stroke-width="1.3" stroke-linejoin="round"/></svg>
<div style="position:absolute;left:497px;top:126px;width:13px;height:227px;background:#f0f0f0;border-left:1px solid #e0e0e0;box-sizing:border-box"></div>
<div class="t" style="left:500px;top:131px;font-size:8px;line-height:8px;color:#bbb;">&#708;</div>
<div class="t" style="left:500px;top:340px;font-size:8px;line-height:8px;color:#bbb;">&#709;</div>
<svg style="position:absolute;left:510px;top:127px" width="13" height="238"><defs><linearGradient id="cb" x1="0" y1="0" x2="0" y2="1"><stop offset="0.000" stop-color="#ffa0a0"/><stop offset="0.025" stop-color="#ff4f3c"/><stop offset="0.050" stop-color="#ff2a00"/><stop offset="0.075" stop-color="#ff4600"/><stop offset="0.100" stop-color="#ff6300"/><stop offset="0.125" stop-color="#ff7f00"/><stop offset="0.150" stop-color="#ff9700"/><stop offset="0.175" stop-color="#ffae00"/><stop offset="0.200" stop-color="#ffc600"/><stop offset="0.225" stop-color="#ffde00"/><stop offset="0.250" stop-color="#eaeb02"/><stop offset="0.275" stop-color="#b5ea06"/><stop offset="0.300" stop-color="#7fe80a"/><stop offset="0.325" stop-color="#4ae60e"/><stop offset="0.350" stop-color="#15e512"/><stop offset="0.375" stop-color="#00e437"/><stop offset="0.400" stop-color="#00e372"/><stop offset="0.425" stop-color="#00e2ad"/><stop offset="0.450" stop-color="#00e1e7"/><stop offset="0.475" stop-color="#02bfff"/><stop offset="0.500" stop-color="#0487ff"/><stop offset="0.525" stop-color="#074fff"/><stop offset="0.550" stop-color="#0916ff"/><stop offset="0.575" stop-color="#1905fc"/><stop offset="0.600" stop-color="#320cf7"/><stop offset="0.625" stop-color="#4b13f3"/><stop offset="0.650" stop-color="#5d1aec"/><stop offset="0.675" stop-color="#641de3"/><stop offset="0.700" stop-color="#6c21d9"/><stop offset="0.725" stop-color="#7325d0"/><stop offset="0.750" stop-color="#7a28c7"/><stop offset="0.775" stop-color="#7627b9"/><stop offset="0.800" stop-color="#6a23a8"/><stop offset="0.825" stop-color="#5e1e97"/><stop offset="0.850" stop-color="#521986"/><stop offset="0.875" stop-color="#461575"/><stop offset="0.900" stop-color="#3a1064"/><stop offset="0.925" stop-color="#330e58"/><stop offset="0.950" stop-color="#2c0c4c"/><stop offset="0.975" stop-color="#250a40"/><stop offset="1.000" stop-color="#1e0834"/></linearGradient></defs><rect width="13" height="238" fill="url(#cb)"/></svg>
<div style="position:absolute;left:523px;top:124px;width:2px;height:261px;background:#f0f0f0"></div>
<div style="position:absolute;left:181px;top:353px;width:329px;height:13px;background:#f0f0f0"></div>
<div class="t" style="left:184px;top:354px;font-size:8px;line-height:10px;color:#bbb;">&#706;</div>
<div style="position:absolute;left:181px;top:365px;width:340px;height:1px;background:#9a9a9a"></div>
<div style="position:absolute;left:181px;top:366px;width:340px;height:19px;background:#f0f0f0"></div>
<svg style="position:absolute;left:181px;top:365px" width="340" height="20"><path d="M-2,0.5 L3,16.5 Q4,18.5 7,18.5 L41,18.5 Q44,18.5 45,16.5 L50,0.5" fill="#f0f0f0" stroke="#8a8a8a" stroke-width="1"/><path d="M47,0.5 L52,16.5 Q53,18.5 56,18.5 L87,18.5 Q90,18.5 91,16.5 L96,0.5" fill="#f0f0f0" stroke="#8a8a8a" stroke-width="1"/><path d="M92,0.5 L97,16.5 Q98,18.5 101,18.5 L131,18.5 Q134,18.5 135,16.5 L140,0.5" fill="#f0f0f0" stroke="#8a8a8a" stroke-width="1"/><path d="M136,0.5 L141,16.5 Q142,18.5 145,18.5 L190,18.5 Q193,18.5 194,16.5 L199,0.5" fill="#fdfdfd" stroke="#8a8a8a" stroke-width="1"/></svg>
<div class="t" style="left:181px;top:368px;font-size:10.5px;line-height:12px;color:#333;width:48px;text-align:center;">2D跟踪</div>
<div class="t" style="left:230px;top:368px;font-size:10.5px;line-height:12px;color:#333;width:45px;text-align:center;">X投影</div>
<div class="t" style="left:275px;top:368px;font-size:10.5px;line-height:12px;color:#333;width:44px;text-align:center;">Y投影</div>
<div class="t" style="left:319px;top:368px;font-size:10.5px;line-height:12px;color:#333;width:59px;text-align:center;">光斑显示</div>
<div style="position:absolute;left:181px;top:384px;width:638px;height:2px;background:#6e6e6e"></div>
<div style="position:absolute;left:525px;top:124px;width:293px;height:260px;background:#fff"></div>
<svg style="position:absolute;left:525px;top:124px" width="293" height="260"><path d="M45.8,164.6 L147.7,131.5 L248.7,165.5 M44.0,151.0 L147.7,121.0 L250.6,151.8 M42.1,136.9 L147.7,110.3 L252.6,137.7 M40.0,122.3 L147.7,99.3 L254.6,122.9 M38.0,107.1 L147.7,87.9 L256.7,107.7 M35.8,91.3 L147.7,76.3 L258.9,91.8 M147.7,131.5 L147.7,76.3 M147.7,131.5 L147.7,76.3 M131.8,136.6 L130.6,78.6 M163.3,136.7 L164.6,78.6 M114.0,142.4 L111.4,81.2 M180.9,142.6 L183.6,81.3 M94.1,148.9 L89.6,84.1 M200.6,149.3 L205.3,84.3 M71.6,156.2 L64.6,87.5 M223.1,156.8 L230.1,87.7 M45.8,164.6 L35.8,91.3 M248.7,165.5 L258.9,91.8" stroke="#8c8c8c" stroke-width="0.8" fill="none"/><path d="M45.8,164.6 L145.3,235.7 L248.7,165.5" stroke="#9a9a9a" stroke-width="0.8" fill="none"/><rect x="29.8" y="164.6" width="12" height="5" fill="none" stroke="#e0e0e0" stroke-width="0.7"/><rect x="252.7" y="165.5" width="12" height="5" fill="none" stroke="#e0e0e0" stroke-width="0.7"/><rect x="28.0" y="151.0" width="12" height="5" fill="none" stroke="#e0e0e0" stroke-width="0.7"/><rect x="254.6" y="151.8" width="12" height="5" fill="none" stroke="#e0e0e0" stroke-width="0.7"/><rect x="26.1" y="136.9" width="12" height="5" fill="none" stroke="#e0e0e0" stroke-width="0.7"/><rect x="256.6" y="137.7" width="12" height="5" fill="none" stroke="#e0e0e0" stroke-width="0.7"/><rect x="24.0" y="122.3" width="12" height="5" fill="none" stroke="#e0e0e0" stroke-width="0.7"/><rect x="258.6" y="122.9" width="12" height="5" fill="none" stroke="#e0e0e0" stroke-width="0.7"/><rect x="22.0" y="107.1" width="12" height="5" fill="none" stroke="#e0e0e0" stroke-width="0.7"/><rect x="260.7" y="107.7" width="12" height="5" fill="none" stroke="#e0e0e0" stroke-width="0.7"/><rect x="19.8" y="91.3" width="12" height="5" fill="none" stroke="#e0e0e0" stroke-width="0.7"/><rect x="262.9" y="91.8" width="12" height="5" fill="none" stroke="#e0e0e0" stroke-width="0.7"/><path d="M251.6,184.6 L267.6,172.6" stroke="#e2e2e2" stroke-width="2.5"/><path d="M42.6,183.5 L26.6,171.5" stroke="#e2e2e2" stroke-width="2.5"/><path d="M238.6,195.3 L254.6,183.3" stroke="#e2e2e2" stroke-width="2.5"/><path d="M54.9,194.2 L38.9,182.2" stroke="#e2e2e2" stroke-width="2.5"/><path d="M223.5,207.7 L239.5,195.7" stroke="#e2e2e2" stroke-width="2.5"/><path d="M69.3,206.7 L53.3,194.7" stroke="#e2e2e2" stroke-width="2.5"/><path d="M205.7,222.4 L221.7,210.4" stroke="#e2e2e2" stroke-width="2.5"/><path d="M86.2,221.4 L70.2,209.4" stroke="#e2e2e2" stroke-width="2.5"/><path d="M184.5,239.9 L200.5,227.9" stroke="#e2e2e2" stroke-width="2.5"/><path d="M106.5,239.1 L90.5,227.1" stroke="#e2e2e2" stroke-width="2.5"/><path d="M158.6,261.1 L174.6,249.1" stroke="#e2e2e2" stroke-width="2.5"/><path d="M131.3,260.7 L115.3,248.7" stroke="#e2e2e2" stroke-width="2.5"/><defs><filter id="sf" x="-5%" y="-5%" width="110%" height="110%"><feGaussianBlur stdDeviation="0.7"/></filter></defs><g filter="url(#sf)"><polygon points="45.8,164.2 145.3,233.1 248.8,164.5 147.7,131.3" fill="#350f5b"/><polygon points="97.6,199.3 99.0,200.3 100.4,201.3 101.9,202.3 103.4,203.4 104.9,204.4 106.4,205.5 108.0,206.6 109.6,207.7 111.3,208.9 113.0,210.1 114.8,211.4 116.6,212.7 118.6,214.1 120.6,215.5 122.7,217.0 124.9,218.5 127.2,220.2 129.7,221.9 132.3,223.7 135.1,225.7 138.1,227.8 141.3,230.1 144.8,232.0 148.9,230.6 152.8,227.9 156.4,225.5 159.7,223.3 162.8,221.3 165.6,219.3 168.3,217.6 170.8,215.9 173.1,214.3 175.3,212.9 177.4,211.4 179.4,210.1 181.3,208.8 183.1,207.6 184.9,206.5 186.6,205.3 188.2,204.2 189.8,203.2 191.3,202.2 192.8,201.2 194.2,200.2 195.6,199.3 197.0,198.4 198.3,197.4 199.7,196.6 201.0,195.7 202.3,194.8 203.5,194.0 204.8,193.1 206.1,192.3 207.3,191.4 208.5,190.6 209.8,189.8 211.0,188.9 212.3,188.1 213.5,187.3 214.8,186.4 216.1,185.5 217.4,184.7 218.7,183.8 220.0,182.9 221.4,182.0 222.7,181.1 224.2,180.1 225.6,179.2 227.1,178.2 228.6,177.2 230.2,176.1 231.8,175.0 233.5,173.9 235.2,172.7 237.1,171.5 239.0,170.2 239.5,168.9 238.6,167.7 237.5,166.5 236.4,165.4 235.3,164.2 234.1,163.1 232.9,162.0 231.6,161.0 230.2,159.9 228.8,158.9 227.4,158.0 225.9,157.0 224.4,156.1 222.9,155.2 221.3,154.3 219.2,153.6 217.1,153.0 215.1,152.3 213.2,151.7 211.3,151.0 209.4,150.4 207.6,149.8 205.7,149.2 204.0,148.6 202.2,148.0 200.4,147.4 198.7,146.9 196.9,146.3 195.2,145.7 193.5,145.1 191.7,144.6 190.0,144.0 188.2,143.4 186.2,143.1 184.2,142.7 182.2,142.4 180.2,142.1 178.1,141.9 176.1,141.6 174.0,141.4 171.9,141.2 169.9,141.0 167.8,140.9 165.7,140.8 163.6,140.7 161.5,140.6 159.4,140.6 157.3,140.6 155.2,140.6 153.1,140.6 151.0,140.6 148.9,140.7 146.8,140.8 144.7,140.9 142.6,141.1 140.5,141.2 138.4,141.4 136.3,141.7 134.3,141.9 132.2,142.2 130.1,142.5 128.0,142.8 126.0,143.1 123.9,143.5 121.9,143.9 119.8,144.3 117.8,144.7 115.8,145.2 113.8,145.7 111.8,146.2 109.9,146.8 107.9,147.3 106.0,147.9 104.1,148.6 102.2,149.2 100.3,149.9 98.4,150.6 96.6,151.3 94.8,152.1 93.0,152.9 91.2,153.7 89.5,154.5 87.8,155.4 86.1,156.3 84.5,157.2 82.9,158.2 81.3,159.2 79.8,160.2 78.4,161.2 76.9,162.3 75.5,163.4 74.2,164.5 72.9,165.6 71.7,166.8 70.5,168.0 69.4,169.2 68.3,170.5 67.3,171.8 66.4,173.1 65.6,174.4 64.8,175.7 66.0,177.0 67.7,178.2 69.4,179.4 71.0,180.5 72.6,181.6 74.1,182.7 75.6,183.8 77.1,184.8 78.5,185.8 79.9,186.8 81.3,187.8 82.7,188.8 84.1,189.8 85.4,190.7 86.8,191.7 88.1,192.6 89.5,193.6 90.8,194.5 92.2,195.5 93.5,196.4 94.9,197.4 96.2,198.3" fill="#3f126c"/><polygon points="97.5,198.2 99.0,199.2 100.4,200.2 101.8,201.2 103.3,202.3 104.8,203.3 106.3,204.4 107.9,205.5 109.5,206.6 111.2,207.8 112.9,209.0 114.7,210.3 116.6,211.6 118.5,212.9 120.5,214.3 122.6,215.8 124.8,217.4 127.2,219.0 129.7,220.7 132.8,221.4 136.1,221.7 139.4,222.0 142.8,222.2 146.2,222.3 149.5,222.4 153.0,222.4 156.4,222.3 159.8,222.1 162.8,220.1 165.7,218.2 168.3,216.4 170.8,214.7 173.2,213.2 175.4,211.7 177.5,210.3 179.5,209.0 181.4,207.7 183.2,206.5 184.9,205.3 186.6,204.2 188.3,203.1 189.8,202.1 191.3,201.1 192.8,200.1 194.3,199.1 195.7,198.2 197.1,197.3 198.4,196.4 199.7,195.5 201.0,194.6 202.3,193.8 203.6,192.9 204.9,192.1 206.1,191.2 207.4,190.4 208.6,189.6 209.9,188.7 211.1,187.9 212.4,187.1 213.6,186.2 214.9,185.4 216.2,184.6 217.5,183.7 218.8,182.8 220.1,181.9 221.5,181.0 222.9,180.1 224.3,179.2 225.7,178.2 227.2,177.2 228.7,176.2 230.3,175.2 231.9,174.1 233.6,173.0 233.1,171.8 232.5,170.6 231.8,169.5 231.1,168.4 230.3,167.3 229.4,166.2 228.5,165.2 227.5,164.1 226.5,163.1 225.4,162.1 224.3,161.2 223.1,160.2 221.9,159.3 220.7,158.4 219.4,157.6 218.1,156.7 216.7,155.9 215.3,155.1 213.8,154.4 212.4,153.6 210.9,152.9 209.3,152.2 207.8,151.5 206.2,150.9 204.6,150.3 202.9,149.7 201.3,149.1 199.6,148.6 197.9,148.0 196.2,147.5 194.4,147.1 192.7,146.6 190.9,146.2 189.1,145.8 187.3,145.4 185.5,145.0 183.7,144.7 181.8,144.4 180.0,144.1 178.1,143.8 176.2,143.6 174.3,143.3 172.4,143.1 170.5,143.0 168.6,142.8 166.7,142.7 164.8,142.6 162.9,142.5 161.0,142.4 159.0,142.4 157.1,142.4 155.2,142.4 153.2,142.4 151.3,142.4 149.4,142.5 147.4,142.6 145.5,142.7 143.6,142.8 141.6,143.0 139.7,143.2 137.8,143.4 135.9,143.6 134.0,143.9 132.1,144.1 130.2,144.4 128.3,144.8 126.4,145.1 124.6,145.5 122.7,145.9 120.9,146.3 119.0,146.7 117.2,147.2 115.4,147.6 113.6,148.2 111.8,148.7 110.1,149.2 108.4,149.8 106.6,150.4 104.9,151.0 103.3,151.7 101.6,152.4 100.0,153.1 98.4,153.8 96.8,154.5 95.3,155.3 93.8,156.1 92.3,156.9 90.9,157.8 89.5,158.6 88.1,159.5 86.8,160.4 85.5,161.4 84.3,162.3 83.1,163.3 81.9,164.3 80.8,165.4 79.8,166.4 78.8,167.5 77.9,168.6 77.0,169.7 76.2,170.9 75.4,172.0 74.7,173.2 74.1,174.4 73.6,175.7 73.1,176.9 72.7,178.1 72.4,179.4 72.5,180.7 74.0,181.7 75.5,182.8 77.0,183.8 78.4,184.8 79.8,185.8 81.2,186.8 82.6,187.8 84.0,188.7 85.3,189.7 86.7,190.6 88.0,191.6 89.4,192.5 90.7,193.5 92.1,194.4 93.4,195.4 94.8,196.3 96.2,197.3" fill="#481578"/><polygon points="97.5,197.2 98.9,198.1 100.3,199.1 101.8,200.1 103.2,201.2 104.7,202.2 106.3,203.3 107.9,204.4 109.5,205.5 111.2,206.7 112.9,207.9 114.7,209.1 116.5,210.4 118.5,211.7 121.1,212.4 123.8,212.9 126.6,213.4 129.4,213.9 132.3,214.3 135.2,214.6 138.1,214.9 141.1,215.1 144.1,215.3 147.1,215.4 150.1,215.5 153.1,215.5 156.2,215.4 159.2,215.3 162.2,215.1 165.2,214.9 168.1,214.6 170.9,213.6 173.2,212.0 175.4,210.6 177.5,209.2 179.5,207.9 181.4,206.6 183.3,205.4 185.0,204.2 186.7,203.1 188.3,202.0 189.9,201.0 191.4,200.0 192.9,199.0 194.3,198.1 195.7,197.1 197.1,196.2 198.5,195.3 199.8,194.4 201.1,193.6 202.4,192.7 203.7,191.9 205.0,191.0 206.2,190.2 207.5,189.4 208.7,188.5 210.0,187.7 211.2,186.9 212.5,186.1 213.7,185.2 215.0,184.4 216.3,183.5 217.6,182.7 218.9,181.8 220.2,180.9 221.6,180.1 223.0,179.1 224.4,178.2 225.8,177.2 227.3,176.3 227.9,175.2 227.7,174.1 227.4,173.0 227.0,171.9 226.6,170.8 226.1,169.8 225.5,168.7 224.9,167.7 224.2,166.7 223.4,165.7 222.6,164.8 221.8,163.8 220.9,162.9 219.9,162.0 218.9,161.1 217.9,160.2 216.8,159.4 215.7,158.6 214.5,157.8 213.3,157.0 212.1,156.2 210.8,155.5 209.5,154.8 208.2,154.1 206.8,153.4 205.4,152.8 204.0,152.2 202.5,151.6 201.0,151.0 199.5,150.4 198.0,149.9 196.5,149.4 194.9,148.9 193.3,148.4 191.7,148.0 190.1,147.5 188.4,147.1 186.8,146.7 185.1,146.4 183.4,146.0 181.7,145.7 180.0,145.4 178.2,145.2 176.5,144.9 174.8,144.7 173.0,144.5 171.2,144.3 169.5,144.1 167.7,144.0 165.9,143.8 164.1,143.7 162.3,143.7 160.5,143.6 158.7,143.5 156.9,143.5 155.1,143.5 153.3,143.6 151.5,143.6 149.7,143.7 147.9,143.8 146.1,143.9 144.3,144.0 142.5,144.1 140.7,144.3 138.9,144.5 137.1,144.7 135.3,145.0 133.6,145.2 131.8,145.5 130.1,145.8 128.3,146.1 126.6,146.5 124.9,146.8 123.1,147.2 121.5,147.6 119.8,148.1 118.1,148.5 116.4,149.0 114.8,149.5 113.2,150.0 111.6,150.5 110.0,151.1 108.5,151.7 106.9,152.3 105.4,152.9 103.9,153.6 102.5,154.2 101.1,154.9 99.7,155.7 98.3,156.4 97.0,157.2 95.7,157.9 94.4,158.7 93.2,159.6 92.0,160.4 90.8,161.3 89.7,162.2 88.7,163.1 87.6,164.0 86.7,165.0 85.8,165.9 84.9,166.9 84.1,167.9 83.3,169.0 82.6,170.0 82.0,171.1 81.4,172.1 80.9,173.2 80.5,174.3 80.1,175.4 79.8,176.6 79.5,177.7 79.4,178.9 79.3,180.1 79.3,181.2 79.4,182.4 79.5,183.6 79.8,184.8 81.1,185.8 82.5,186.8 83.9,187.7 85.3,188.7 86.6,189.6 88.0,190.5 89.3,191.5 90.6,192.4 92.0,193.3 93.3,194.3 94.7,195.2 96.1,196.2" fill="#501883"/><polygon points="97.4,196.1 98.8,197.1 100.2,198.0 101.7,199.0 103.2,200.1 104.7,201.1 106.2,202.2 108.2,203.0 110.2,203.8 112.3,204.5 114.5,205.3 116.7,205.9 119.1,206.6 121.4,207.2 123.9,207.7 126.4,208.2 128.9,208.7 131.5,209.1 134.1,209.4 136.8,209.7 139.5,210.0 142.2,210.2 144.9,210.3 147.7,210.4 150.5,210.5 153.2,210.5 156.0,210.4 158.8,210.3 161.5,210.1 164.3,209.9 167.0,209.7 169.7,209.3 172.4,209.0 175.0,208.6 177.6,208.0 179.6,206.7 181.5,205.5 183.3,204.3 185.1,203.1 186.8,202.0 188.4,200.9 190.0,199.9 191.5,198.9 193.0,197.9 194.4,197.0 195.8,196.1 197.2,195.1 198.6,194.3 199.9,193.4 201.2,192.5 202.5,191.7 203.8,190.8 205.0,190.0 206.3,189.2 207.6,188.3 208.8,187.5 210.1,186.7 211.3,185.9 212.6,185.1 213.8,184.2 215.1,183.4 216.4,182.5 217.7,181.7 219.0,180.8 220.3,180.0 221.7,179.1 223.1,178.2 223.2,177.1 223.2,176.0 223.2,175.0 223.1,173.9 222.9,172.9 222.6,171.9 222.3,170.9 221.9,169.9 221.5,168.9 221.0,167.9 220.4,167.0 219.8,166.0 219.2,165.1 218.5,164.2 217.7,163.3 216.9,162.5 216.0,161.6 215.1,160.8 214.1,160.0 213.2,159.2 212.1,158.4 211.0,157.7 209.9,156.9 208.8,156.2 207.6,155.5 206.4,154.8 205.1,154.2 203.9,153.6 202.6,153.0 201.2,152.4 199.9,151.8 198.5,151.2 197.1,150.7 195.6,150.2 194.2,149.7 192.7,149.3 191.2,148.8 189.7,148.4 188.2,148.0 186.6,147.6 185.0,147.2 183.5,146.9 181.9,146.6 180.3,146.3 178.6,146.0 177.0,145.7 175.4,145.5 173.7,145.3 172.0,145.1 170.4,144.9 168.7,144.7 167.0,144.6 165.3,144.5 163.6,144.4 161.9,144.3 160.2,144.2 158.5,144.2 156.8,144.2 155.1,144.2 153.4,144.2 151.7,144.2 149.9,144.3 148.2,144.4 146.5,144.5 144.8,144.6 143.1,144.7 141.4,144.9 139.7,145.1 138.0,145.3 136.3,145.5 134.7,145.8 133.0,146.0 131.3,146.3 129.7,146.6 128.1,147.0 126.4,147.3 124.8,147.7 123.2,148.1 121.6,148.5 120.1,148.9 118.5,149.4 117.0,149.8 115.5,150.3 114.0,150.8 112.5,151.4 111.0,151.9 109.6,152.5 108.2,153.1 106.8,153.7 105.4,154.3 104.1,155.0 102.8,155.7 101.5,156.4 100.3,157.1 99.1,157.8 97.9,158.6 96.8,159.4 95.7,160.1 94.6,161.0 93.6,161.8 92.6,162.6 91.7,163.5 90.8,164.4 90.0,165.3 89.2,166.2 88.5,167.2 87.8,168.1 87.2,169.1 86.6,170.1 86.1,171.1 85.7,172.1 85.3,173.1 85.0,174.2 84.8,175.2 84.6,176.3 84.5,177.3 84.4,178.4 84.5,179.5 84.6,180.6 84.8,181.7 85.0,182.8 85.4,183.9 85.8,185.0 86.3,186.1 86.9,187.2 87.6,188.3 88.4,189.3 89.2,190.4 90.6,191.4 91.9,192.3 93.3,193.2 94.6,194.2 96.0,195.1" fill="#571b8d"/><polygon points="99.6,194.0 101.0,194.9 102.4,195.8 104.0,196.6 105.6,197.5 107.3,198.3 109.1,199.1 111.0,199.8 112.9,200.5 114.9,201.2 117.0,201.9 119.1,202.5 121.3,203.1 123.5,203.6 125.8,204.1 128.1,204.6 130.5,205.0 132.9,205.4 135.4,205.7 137.9,206.0 140.4,206.2 143.0,206.4 145.5,206.5 148.1,206.6 150.7,206.7 153.3,206.7 155.9,206.6 158.5,206.5 161.1,206.4 163.7,206.2 166.2,205.9 168.8,205.6 171.3,205.3 173.7,204.9 176.2,204.5 178.6,204.0 180.9,203.5 183.2,203.0 185.1,202.0 186.8,200.9 188.4,199.8 190.0,198.8 191.6,197.8 193.0,196.8 194.5,195.9 195.9,195.0 197.3,194.1 198.6,193.2 200.0,192.3 201.3,191.5 202.6,190.6 203.9,189.8 205.1,188.9 206.4,188.1 207.7,187.3 208.9,186.5 210.2,185.7 211.4,184.8 212.7,184.0 213.9,183.2 215.2,182.4 216.5,181.5 217.8,180.7 218.8,179.8 219.1,178.8 219.4,177.7 219.6,176.7 219.7,175.7 219.7,174.7 219.7,173.7 219.6,172.7 219.5,171.8 219.2,170.8 219.0,169.8 218.6,168.9 218.2,168.0 217.8,167.1 217.3,166.2 216.7,165.3 216.1,164.4 215.4,163.6 214.7,162.7 214.0,161.9 213.2,161.1 212.3,160.3 211.4,159.5 210.5,158.8 209.5,158.0 208.5,157.3 207.5,156.6 206.4,156.0 205.3,155.3 204.1,154.7 202.9,154.0 201.7,153.4 200.5,152.8 199.2,152.3 197.9,151.7 196.6,151.2 195.3,150.7 193.9,150.2 192.5,149.8 191.1,149.3 189.7,148.9 188.2,148.5 186.8,148.1 185.3,147.7 183.8,147.4 182.3,147.0 180.7,146.7 179.2,146.4 177.7,146.2 176.1,145.9 174.5,145.7 172.9,145.5 171.3,145.3 169.7,145.1 168.1,144.9 166.5,144.8 164.9,144.7 163.3,144.6 161.6,144.5 160.0,144.5 158.3,144.4 156.7,144.4 155.1,144.4 153.4,144.4 151.8,144.5 150.1,144.5 148.5,144.6 146.8,144.7 145.2,144.8 143.6,145.0 141.9,145.1 140.3,145.3 138.7,145.5 137.1,145.7 135.5,146.0 133.9,146.2 132.3,146.5 130.7,146.8 129.2,147.1 127.6,147.4 126.1,147.8 124.5,148.2 123.0,148.6 121.5,149.0 120.0,149.4 118.6,149.9 117.1,150.3 115.7,150.8 114.3,151.3 112.9,151.9 111.5,152.4 110.2,153.0 108.9,153.6 107.6,154.2 106.3,154.8 105.1,155.4 103.9,156.1 102.7,156.8 101.6,157.5 100.5,158.2 99.4,158.9 98.4,159.7 97.4,160.5 96.4,161.3 95.5,162.1 94.7,162.9 93.9,163.7 93.1,164.6 92.4,165.5 91.7,166.4 91.1,167.3 90.5,168.2 90.0,169.1 89.5,170.1 89.1,171.0 88.8,172.0 88.5,173.0 88.3,173.9 88.2,174.9 88.1,175.9 88.1,176.9 88.2,178.0 88.3,179.0 88.5,180.0 88.8,181.0 89.1,182.1 89.6,183.1 90.1,184.1 90.7,185.1 91.3,186.2 92.1,187.2 92.9,188.2 93.8,189.2 94.8,190.2 95.9,191.1 97.0,192.1 98.3,193.0" fill="#5f1e98"/><polygon points="102.1,191.7 103.5,192.5 104.9,193.4 106.4,194.2 108.0,195.0 109.6,195.7 111.3,196.5 113.1,197.2 114.9,197.8 116.8,198.5 118.8,199.1 120.8,199.7 122.9,200.2 125.0,200.7 127.2,201.2 129.4,201.6 131.7,202.0 134.0,202.4 136.4,202.7 138.7,202.9 141.1,203.2 143.6,203.3 146.0,203.5 148.5,203.5 150.9,203.6 153.4,203.6 155.9,203.5 158.3,203.4 160.8,203.3 163.2,203.1 165.7,202.9 168.1,202.6 170.4,202.3 172.8,201.9 175.1,201.5 177.4,201.1 179.6,200.6 181.8,200.1 184.0,199.6 186.1,199.0 188.1,198.3 190.1,197.7 191.6,196.7 193.1,195.8 194.6,194.8 196.0,193.9 197.4,193.0 198.7,192.1 200.1,191.2 201.4,190.4 202.7,189.6 203.9,188.7 205.2,187.9 206.5,187.1 207.7,186.3 209.0,185.4 210.2,184.6 211.5,183.8 212.8,183.0 214.0,182.2 214.6,181.2 215.2,180.2 215.6,179.3 216.1,178.3 216.4,177.3 216.7,176.4 216.9,175.4 217.0,174.4 217.0,173.5 217.0,172.5 217.0,171.6 216.9,170.7 216.7,169.8 216.4,168.8 216.1,168.0 215.7,167.1 215.3,166.2 214.9,165.3 214.3,164.5 213.8,163.7 213.1,162.8 212.5,162.0 211.8,161.3 211.0,160.5 210.2,159.7 209.3,159.0 208.5,158.3 207.5,157.6 206.6,156.9 205.6,156.2 204.5,155.6 203.5,154.9 202.4,154.3 201.2,153.7 200.1,153.1 198.9,152.6 197.7,152.0 196.4,151.5 195.2,151.0 193.9,150.5 192.6,150.0 191.2,149.6 189.9,149.1 188.5,148.7 187.1,148.3 185.7,148.0 184.3,147.6 182.8,147.3 181.4,147.0 179.9,146.7 178.4,146.4 176.9,146.1 175.4,145.9 173.9,145.6 172.3,145.4 170.8,145.3 169.2,145.1 167.7,144.9 166.1,144.8 164.6,144.7 163.0,144.6 161.4,144.5 159.8,144.5 158.2,144.4 156.6,144.4 155.0,144.4 153.5,144.5 151.9,144.5 150.3,144.5 148.7,144.6 147.1,144.7 145.5,144.8 143.9,145.0 142.4,145.1 140.8,145.3 139.2,145.5 137.7,145.7 136.1,145.9 134.6,146.2 133.0,146.4 131.5,146.7 130.0,147.0 128.5,147.3 127.0,147.7 125.5,148.0 124.1,148.4 122.6,148.8 121.2,149.2 119.8,149.7 118.4,150.1 117.0,150.6 115.7,151.1 114.3,151.6 113.0,152.1 111.7,152.7 110.5,153.3 109.2,153.8 108.0,154.4 106.8,155.1 105.7,155.7 104.6,156.4 103.5,157.0 102.4,157.7 101.4,158.4 100.4,159.2 99.5,159.9 98.6,160.7 97.7,161.4 96.9,162.2 96.2,163.0 95.4,163.8 94.8,164.7 94.1,165.5 93.5,166.4 93.0,167.3 92.5,168.1 92.1,169.0 91.8,170.0 91.5,170.9 91.2,171.8 91.0,172.7 90.9,173.7 90.9,174.6 90.9,175.6 90.9,176.6 91.1,177.5 91.3,178.5 91.6,179.5 91.9,180.5 92.4,181.4 92.9,182.4 93.5,183.4 94.1,184.3 94.9,185.3 95.7,186.2 96.5,187.2 97.5,188.1 98.6,189.0 99.7,189.9 100.9,190.8" fill="#6621a2"/><polygon points="104.2,189.6 105.5,190.5 106.8,191.2 108.3,192.0 109.8,192.8 111.4,193.5 113.0,194.2 114.7,194.8 116.5,195.5 118.4,196.1 120.2,196.7 122.2,197.2 124.2,197.7 126.2,198.2 128.3,198.7 130.5,199.1 132.7,199.4 134.9,199.8 137.1,200.0 139.4,200.3 141.7,200.5 144.0,200.7 146.4,200.8 148.7,200.9 151.1,200.9 153.4,200.9 155.8,200.9 158.2,200.8 160.5,200.6 162.9,200.5 165.2,200.2 167.5,200.0 169.8,199.7 172.0,199.4 174.3,199.0 176.5,198.6 178.6,198.1 180.7,197.6 182.8,197.1 184.8,196.6 186.8,196.0 188.7,195.3 190.5,194.7 192.3,194.0 194.0,193.3 195.7,192.6 197.3,191.8 198.8,191.0 200.1,190.2 201.4,189.3 202.7,188.5 204.0,187.7 205.3,186.8 206.6,186.0 207.7,185.2 208.7,184.3 209.6,183.4 210.4,182.5 211.2,181.5 211.8,180.6 212.5,179.7 213.0,178.8 213.5,177.8 213.9,176.9 214.2,176.0 214.5,175.1 214.7,174.1 214.8,173.2 214.9,172.3 214.9,171.4 214.9,170.5 214.8,169.6 214.6,168.7 214.4,167.9 214.1,167.0 213.8,166.2 213.4,165.3 212.9,164.5 212.4,163.7 211.9,162.9 211.3,162.1 210.7,161.3 210.0,160.6 209.3,159.8 208.5,159.1 207.7,158.4 206.8,157.7 205.9,157.0 205.0,156.3 204.1,155.7 203.1,155.1 202.0,154.4 201.0,153.9 199.9,153.3 198.8,152.7 197.6,152.2 196.4,151.6 195.2,151.1 194.0,150.6 192.8,150.2 191.5,149.7 190.2,149.3 188.9,148.9 187.6,148.5 186.2,148.1 184.8,147.7 183.4,147.4 182.0,147.0 180.6,146.7 179.2,146.4 177.7,146.2 176.3,145.9 174.8,145.7 173.3,145.5 171.9,145.3 170.4,145.1 168.8,144.9 167.3,144.8 165.8,144.7 164.3,144.5 162.8,144.5 161.2,144.4 159.7,144.3 158.1,144.3 156.6,144.3 155.0,144.3 153.5,144.3 151.9,144.3 150.4,144.4 148.8,144.5 147.3,144.6 145.8,144.7 144.2,144.8 142.7,145.0 141.2,145.1 139.6,145.3 138.1,145.5 136.6,145.7 135.1,146.0 133.6,146.2 132.1,146.5 130.7,146.8 129.2,147.1 127.8,147.4 126.3,147.8 124.9,148.2 123.5,148.5 122.1,149.0 120.8,149.4 119.4,149.8 118.1,150.3 116.8,150.7 115.5,151.2 114.2,151.8 113.0,152.3 111.8,152.8 110.6,153.4 109.4,154.0 108.3,154.6 107.2,155.2 106.1,155.8 105.0,156.5 104.0,157.1 103.0,157.8 102.1,158.5 101.2,159.2 100.3,160.0 99.5,160.7 98.7,161.5 98.0,162.3 97.3,163.1 96.7,163.9 96.1,164.7 95.5,165.5 95.0,166.3 94.6,167.2 94.2,168.1 93.8,168.9 93.6,169.8 93.3,170.7 93.2,171.6 93.1,172.5 93.0,173.4 93.1,174.3 93.2,175.3 93.3,176.2 93.5,177.1 93.8,178.0 94.2,179.0 94.6,179.9 95.1,180.8 95.7,181.7 96.3,182.7 97.1,183.6 97.9,184.5 98.7,185.4 99.7,186.2 100.7,187.1 101.8,188.0 102.9,188.8" fill="#6c24ab"/><polygon points="105.8,187.8 107.1,188.6 108.4,189.3 109.8,190.0 111.3,190.8 112.8,191.4 114.4,192.1 116.1,192.7 117.8,193.4 119.6,193.9 121.4,194.5 123.3,195.0 125.3,195.5 127.2,196.0 129.3,196.4 131.3,196.8 133.4,197.1 135.6,197.4 137.7,197.7 139.9,197.9 142.2,198.1 144.4,198.3 146.7,198.4 148.9,198.5 151.2,198.5 153.5,198.5 155.8,198.5 158.1,198.4 160.3,198.3 162.6,198.1 164.8,197.9 167.1,197.6 169.3,197.4 171.4,197.0 173.6,196.7 175.7,196.3 177.8,195.9 179.8,195.4 181.8,194.9 183.8,194.4 185.7,193.8 187.5,193.2 189.3,192.6 191.0,192.0 192.7,191.3 194.3,190.6 195.9,189.9 197.4,189.1 198.8,188.4 200.2,187.6 201.5,186.8 202.7,186.0 203.9,185.2 205.0,184.4 206.0,183.5 206.9,182.6 207.8,181.8 208.6,180.9 209.4,180.0 210.1,179.1 210.7,178.3 211.2,177.4 211.7,176.5 212.1,175.6 212.4,174.7 212.7,173.8 212.9,172.9 213.1,172.0 213.2,171.2 213.2,170.3 213.1,169.4 213.0,168.6 212.9,167.7 212.7,166.9 212.4,166.1 212.1,165.2 211.7,164.4 211.3,163.6 210.8,162.8 210.3,162.1 209.8,161.3 209.1,160.6 208.5,159.8 207.8,159.1 207.1,158.4 206.3,157.7 205.5,157.0 204.6,156.4 203.7,155.7 202.8,155.1 201.8,154.5 200.8,153.9 199.8,153.3 198.7,152.8 197.7,152.2 196.5,151.7 195.4,151.2 194.2,150.7 193.0,150.2 191.8,149.8 190.6,149.3 189.3,148.9 188.1,148.5 186.8,148.1 185.4,147.7 184.1,147.4 182.8,147.0 181.4,146.7 180.0,146.4 178.6,146.1 177.2,145.9 175.8,145.6 174.3,145.4 172.9,145.2 171.5,145.0 170.0,144.8 168.5,144.6 167.0,144.5 165.6,144.4 164.1,144.3 162.6,144.2 161.1,144.1 159.6,144.1 158.1,144.0 156.5,144.0 155.0,144.0 153.5,144.0 152.0,144.1 150.5,144.1 149.0,144.2 147.5,144.3 146.0,144.4 144.5,144.5 143.0,144.7 141.5,144.8 140.0,145.0 138.5,145.2 137.0,145.4 135.6,145.7 134.1,145.9 132.7,146.2 131.3,146.5 129.8,146.8 128.4,147.1 127.0,147.4 125.6,147.8 124.3,148.2 122.9,148.6 121.6,149.0 120.3,149.4 119.0,149.9 117.7,150.3 116.5,150.8 115.2,151.3 114.0,151.8 112.8,152.3 111.7,152.9 110.6,153.5 109.5,154.0 108.4,154.6 107.3,155.2 106.3,155.9 105.3,156.5 104.4,157.2 103.5,157.9 102.6,158.6 101.8,159.3 101.0,160.0 100.3,160.7 99.6,161.5 98.9,162.2 98.3,163.0 97.7,163.8 97.2,164.6 96.7,165.4 96.3,166.2 95.9,167.1 95.6,167.9 95.3,168.8 95.1,169.6 95.0,170.5 94.9,171.4 94.9,172.2 94.9,173.1 95.0,174.0 95.2,174.9 95.4,175.8 95.7,176.7 96.1,177.6 96.5,178.4 97.0,179.3 97.5,180.2 98.2,181.1 98.9,182.0 99.7,182.8 100.5,183.7 101.4,184.5 102.4,185.4 103.5,186.2 104.6,187.0" fill="#7326b5"/><polygon points="107.2,186.0 108.5,186.8 109.8,187.5 111.2,188.2 112.6,188.9 114.1,189.6 115.6,190.2 117.3,190.8 118.9,191.4 120.7,191.9 122.4,192.5 124.3,193.0 126.2,193.4 128.1,193.9 130.0,194.3 132.0,194.6 134.1,195.0 136.2,195.3 138.3,195.5 140.4,195.8 142.5,196.0 144.7,196.1 146.9,196.2 149.1,196.3 151.3,196.3 153.5,196.3 155.7,196.3 158.0,196.2 160.2,196.1 162.3,195.9 164.5,195.7 166.7,195.5 168.8,195.2 170.9,194.9 173.0,194.6 175.1,194.2 177.1,193.8 179.1,193.3 181.0,192.9 182.9,192.4 184.7,191.8 186.5,191.3 188.3,190.7 190.0,190.1 191.6,189.4 193.2,188.7 194.7,188.1 196.1,187.4 197.5,186.6 198.9,185.9 200.1,185.1 201.3,184.3 202.5,183.6 203.5,182.7 204.5,181.9 205.5,181.1 206.4,180.3 207.2,179.4 207.9,178.6 208.6,177.7 209.2,176.9 209.7,176.0 210.2,175.2 210.6,174.3 210.9,173.4 211.2,172.6 211.4,171.7 211.6,170.9 211.6,170.0 211.7,169.2 211.7,168.4 211.6,167.5 211.4,166.7 211.2,165.9 211.0,165.1 210.7,164.3 210.3,163.5 209.9,162.7 209.5,162.0 209.0,161.2 208.4,160.5 207.8,159.8 207.2,159.1 206.5,158.4 205.8,157.7 205.1,157.0 204.3,156.4 203.4,155.7 202.6,155.1 201.7,154.5 200.7,153.9 199.8,153.3 198.8,152.8 197.8,152.2 196.7,151.7 195.6,151.2 194.5,150.7 193.4,150.2 192.2,149.7 191.0,149.3 189.8,148.8 188.6,148.4 187.3,148.0 186.1,147.7 184.8,147.3 183.5,147.0 182.2,146.6 180.8,146.3 179.5,146.0 178.1,145.7 176.7,145.5 175.3,145.2 173.9,145.0 172.5,144.8 171.1,144.6 169.7,144.5 168.2,144.3 166.8,144.2 165.3,144.0 163.9,143.9 162.4,143.9 160.9,143.8 159.5,143.7 158.0,143.7 156.5,143.7 155.0,143.7 153.5,143.7 152.1,143.7 150.6,143.8 149.1,143.9 147.6,144.0 146.2,144.1 144.7,144.2 143.2,144.3 141.8,144.5 140.3,144.7 138.9,144.9 137.4,145.1 136.0,145.3 134.6,145.5 133.2,145.8 131.8,146.1 130.4,146.4 129.0,146.7 127.6,147.0 126.3,147.4 124.9,147.7 123.6,148.1 122.3,148.5 121.0,148.9 119.8,149.4 118.5,149.8 117.3,150.3 116.1,150.8 114.9,151.3 113.8,151.8 112.7,152.3 111.6,152.9 110.5,153.4 109.4,154.0 108.4,154.6 107.4,155.2 106.5,155.9 105.6,156.5 104.7,157.2 103.9,157.8 103.1,158.5 102.3,159.2 101.6,159.9 100.9,160.7 100.2,161.4 99.6,162.2 99.1,162.9 98.6,163.7 98.1,164.5 97.7,165.3 97.4,166.1 97.1,166.9 96.8,167.7 96.7,168.5 96.5,169.4 96.5,170.2 96.4,171.1 96.5,171.9 96.6,172.8 96.8,173.6 97.0,174.5 97.3,175.4 97.6,176.2 98.1,177.1 98.6,177.9 99.1,178.8 99.8,179.6 100.5,180.5 101.2,181.3 102.1,182.1 103.0,182.9 103.9,183.7 105.0,184.5 106.1,185.3" fill="#7a29be"/><polygon points="108.5,184.4 109.7,185.1 111.0,185.8 112.3,186.5 113.7,187.1 115.2,187.8 116.7,188.4 118.3,189.0 119.9,189.5 121.6,190.1 123.3,190.6 125.1,191.1 126.9,191.5 128.8,191.9 130.7,192.3 132.7,192.7 134.7,193.0 136.7,193.3 138.7,193.5 140.8,193.7 142.9,193.9 145.0,194.1 147.1,194.2 149.3,194.2 151.4,194.3 153.6,194.3 155.7,194.2 157.9,194.2 160.0,194.0 162.1,193.9 164.3,193.7 166.4,193.5 168.4,193.2 170.5,192.9 172.5,192.6 174.5,192.2 176.5,191.8 178.4,191.4 180.3,191.0 182.1,190.5 183.9,190.0 185.7,189.4 187.4,188.8 189.0,188.2 190.6,187.6 192.1,187.0 193.6,186.3 195.1,185.6 196.4,184.9 197.7,184.2 199.0,183.5 200.1,182.7 201.2,182.0 202.3,181.2 203.3,180.4 204.2,179.6 205.1,178.8 205.8,178.0 206.6,177.2 207.2,176.4 207.8,175.6 208.4,174.7 208.8,173.9 209.2,173.1 209.6,172.2 209.8,171.4 210.1,170.6 210.2,169.8 210.3,168.9 210.4,168.1 210.3,167.3 210.3,166.5 210.1,165.7 210.0,164.9 209.7,164.1 209.4,163.4 209.1,162.6 208.7,161.9 208.3,161.1 207.8,160.4 207.3,159.7 206.7,159.0 206.1,158.3 205.4,157.6 204.7,156.9 204.0,156.3 203.2,155.7 202.4,155.0 201.6,154.4 200.7,153.8 199.8,153.3 198.9,152.7 197.9,152.1 196.9,151.6 195.8,151.1 194.8,150.6 193.7,150.1 192.6,149.6 191.5,149.2 190.3,148.8 189.1,148.3 187.9,147.9 186.7,147.5 185.5,147.2 184.2,146.8 182.9,146.5 181.6,146.2 180.3,145.9 179.0,145.6 177.7,145.3 176.3,145.1 174.9,144.8 173.6,144.6 172.2,144.4 170.8,144.2 169.4,144.0 168.0,143.9 166.6,143.8 165.1,143.6 163.7,143.5 162.3,143.5 160.8,143.4 159.4,143.3 157.9,143.3 156.5,143.3 155.0,143.3 153.6,143.3 152.1,143.4 150.7,143.4 149.2,143.5 147.8,143.6 146.3,143.7 144.9,143.8 143.4,143.9 142.0,144.1 140.6,144.2 139.2,144.4 137.8,144.6 136.3,144.9 135.0,145.1 133.6,145.4 132.2,145.6 130.8,145.9 129.5,146.2 128.2,146.6 126.8,146.9 125.5,147.3 124.2,147.6 123.0,148.0 121.7,148.4 120.5,148.8 119.3,149.3 118.1,149.7 116.9,150.2 115.7,150.7 114.6,151.2 113.5,151.7 112.4,152.3 111.4,152.8 110.4,153.4 109.4,154.0 108.4,154.6 107.5,155.2 106.6,155.8 105.8,156.4 104.9,157.1 104.2,157.8 103.4,158.4 102.7,159.1 102.1,159.8 101.4,160.6 100.9,161.3 100.3,162.0 99.9,162.8 99.4,163.5 99.0,164.3 98.7,165.1 98.4,165.9 98.2,166.7 98.0,167.5 97.9,168.3 97.8,169.1 97.8,169.9 97.9,170.8 98.0,171.6 98.2,172.4 98.4,173.2 98.7,174.1 99.0,174.9 99.5,175.7 100.0,176.6 100.5,177.4 101.1,178.2 101.8,179.0 102.6,179.8 103.4,180.6 104.3,181.4 105.2,182.2 106.3,182.9 107.3,183.7" fill="#7b29c5"/><polygon points="109.6,182.8 110.8,183.5 112.0,184.2 113.4,184.8 114.7,185.4 116.2,186.1 117.6,186.7 119.2,187.2 120.8,187.8 122.4,188.3 124.1,188.8 125.9,189.2 127.6,189.7 129.5,190.1 131.3,190.4 133.2,190.8 135.2,191.1 137.1,191.4 139.1,191.6 141.2,191.8 143.2,192.0 145.3,192.1 147.3,192.2 149.4,192.3 151.5,192.3 153.6,192.3 155.7,192.3 157.8,192.2 159.9,192.1 162.0,192.0 164.0,191.8 166.1,191.6 168.1,191.3 170.1,191.0 172.1,190.7 174.0,190.4 175.9,190.0 177.8,189.6 179.6,189.1 181.4,188.7 183.2,188.2 184.9,187.6 186.6,187.1 188.2,186.5 189.7,185.9 191.2,185.3 192.7,184.7 194.1,184.0 195.4,183.3 196.7,182.6 197.9,181.9 199.1,181.2 200.2,180.5 201.2,179.7 202.2,179.0 203.1,178.2 203.9,177.4 204.7,176.6 205.4,175.9 206.0,175.1 206.6,174.3 207.2,173.5 207.6,172.6 208.0,171.8 208.4,171.0 208.6,170.2 208.9,169.4 209.0,168.6 209.1,167.8 209.2,167.0 209.2,166.3 209.1,165.5 209.0,164.7 208.8,163.9 208.6,163.2 208.3,162.4 208.0,161.7 207.6,161.0 207.2,160.3 206.7,159.5 206.2,158.8 205.7,158.2 205.1,157.5 204.4,156.8 203.8,156.2 203.1,155.5 202.3,154.9 201.5,154.3 200.7,153.7 199.8,153.2 198.9,152.6 198.0,152.0 197.1,151.5 196.1,151.0 195.1,150.5 194.0,150.0 193.0,149.5 191.9,149.1 190.8,148.6 189.7,148.2 188.5,147.8 187.3,147.4 186.1,147.0 184.9,146.6 183.7,146.3 182.4,146.0 181.2,145.7 179.9,145.4 178.6,145.1 177.3,144.8 175.9,144.6 174.6,144.3 173.2,144.1 171.9,143.9 170.5,143.8 169.1,143.6 167.7,143.4 166.4,143.3 165.0,143.2 163.5,143.1 162.1,143.0 160.7,142.9 159.3,142.9 157.9,142.9 156.4,142.9 155.0,142.9 153.6,142.9 152.2,142.9 150.7,143.0 149.3,143.0 147.9,143.1 146.5,143.2 145.1,143.3 143.6,143.5 142.2,143.6 140.8,143.8 139.4,144.0 138.1,144.2 136.7,144.4 135.3,144.6 133.9,144.9 132.6,145.1 131.3,145.4 129.9,145.7 128.6,146.0 127.3,146.4 126.1,146.7 124.8,147.1 123.5,147.5 122.3,147.9 121.1,148.3 119.9,148.7 118.7,149.2 117.6,149.6 116.5,150.1 115.4,150.6 114.3,151.1 113.2,151.6 112.2,152.2 111.2,152.7 110.3,153.3 109.3,153.9 108.4,154.5 107.6,155.1 106.7,155.7 105.9,156.3 105.2,157.0 104.4,157.6 103.8,158.3 103.1,159.0 102.5,159.7 102.0,160.4 101.4,161.1 101.0,161.9 100.6,162.6 100.2,163.4 99.9,164.1 99.6,164.9 99.4,165.7 99.2,166.4 99.1,167.2 99.0,168.0 99.1,168.8 99.1,169.6 99.2,170.4 99.4,171.2 99.6,172.0 99.9,172.8 100.3,173.6 100.7,174.4 101.2,175.2 101.8,176.0 102.4,176.8 103.1,177.6 103.8,178.4 104.6,179.1 105.5,179.9 106.4,180.6 107.4,181.4 108.5,182.1" fill="#7727ca"/><polygon points="110.6,181.3 111.8,181.9 113.0,182.6 114.3,183.2 115.6,183.8 117.0,184.4 118.5,185.0 120.0,185.5 121.6,186.1 123.2,186.6 124.8,187.0 126.5,187.5 128.3,187.9 130.1,188.3 131.9,188.6 133.7,189.0 135.6,189.3 137.6,189.5 139.5,189.8 141.5,190.0 143.5,190.1 145.5,190.3 147.5,190.4 149.5,190.4 151.6,190.5 153.6,190.5 155.7,190.4 157.7,190.4 159.8,190.2 161.8,190.1 163.8,189.9 165.8,189.7 167.8,189.5 169.7,189.2 171.7,188.9 173.6,188.6 175.4,188.2 177.3,187.8 179.1,187.4 180.8,186.9 182.5,186.4 184.2,185.9 185.8,185.4 187.4,184.9 188.9,184.3 190.4,183.7 191.8,183.1 193.2,182.4 194.5,181.8 195.8,181.1 197.0,180.4 198.1,179.7 199.2,179.0 200.2,178.3 201.1,177.6 202.0,176.8 202.9,176.1 203.6,175.3 204.3,174.5 205.0,173.8 205.5,173.0 206.1,172.2 206.5,171.4 206.9,170.6 207.3,169.9 207.5,169.1 207.8,168.3 207.9,167.5 208.0,166.8 208.1,166.0 208.1,165.2 208.0,164.5 207.9,163.7 207.8,163.0 207.6,162.2 207.3,161.5 207.0,160.8 206.6,160.1 206.2,159.4 205.8,158.7 205.3,158.0 204.7,157.3 204.2,156.7 203.5,156.0 202.9,155.4 202.2,154.8 201.4,154.2 200.7,153.6 199.9,153.0 199.0,152.4 198.2,151.9 197.3,151.4 196.3,150.8 195.4,150.3 194.4,149.8 193.4,149.4 192.3,148.9 191.3,148.4 190.2,148.0 189.1,147.6 187.9,147.2 186.8,146.8 185.6,146.4 184.4,146.1 183.2,145.8 182.0,145.4 180.7,145.1 179.5,144.8 178.2,144.6 176.9,144.3 175.6,144.1 174.3,143.8 172.9,143.6 171.6,143.4 170.3,143.3 168.9,143.1 167.5,143.0 166.2,142.8 164.8,142.7 163.4,142.6 162.0,142.5 160.6,142.5 159.2,142.4 157.8,142.4 156.4,142.4 155.0,142.4 153.6,142.4 152.2,142.4 150.8,142.5 149.4,142.6 148.0,142.6 146.6,142.7 145.2,142.8 143.8,143.0 142.4,143.1 141.1,143.3 139.7,143.5 138.3,143.7 137.0,143.9 135.6,144.1 134.3,144.4 133.0,144.6 131.7,144.9 130.4,145.2 129.1,145.5 127.8,145.8 126.5,146.2 125.3,146.5 124.1,146.9 122.9,147.3 121.7,147.7 120.5,148.1 119.4,148.5 118.2,149.0 117.1,149.5 116.0,149.9 115.0,150.4 114.0,150.9 113.0,151.5 112.0,152.0 111.1,152.6 110.1,153.1 109.3,153.7 108.4,154.3 107.6,154.9 106.8,155.5 106.1,156.2 105.4,156.8 104.7,157.5 104.1,158.2 103.5,158.8 103.0,159.5 102.5,160.2 102.0,160.9 101.6,161.7 101.2,162.4 100.9,163.1 100.7,163.9 100.5,164.6 100.3,165.4 100.2,166.2 100.2,166.9 100.2,167.7 100.2,168.5 100.4,169.3 100.5,170.0 100.8,170.8 101.1,171.6 101.4,172.4 101.9,173.2 102.3,173.9 102.9,174.7 103.5,175.5 104.2,176.2 104.9,177.0 105.7,177.7 106.6,178.5 107.5,179.2 108.5,179.9 109.5,180.6" fill="#7425cf"/><polygon points="111.5,179.8 112.7,180.4 113.9,181.0 115.1,181.7 116.5,182.2 117.8,182.8 119.3,183.4 120.7,183.9 122.3,184.4 123.9,184.9 125.5,185.3 127.1,185.8 128.9,186.2 130.6,186.6 132.4,186.9 134.2,187.2 136.1,187.5 137.9,187.8 139.8,188.0 141.8,188.2 143.7,188.4 145.7,188.5 147.7,188.6 149.7,188.6 151.7,188.7 153.7,188.7 155.7,188.6 157.7,188.6 159.7,188.5 161.6,188.3 163.6,188.2 165.6,188.0 167.5,187.7 169.4,187.5 171.3,187.2 173.2,186.8 175.0,186.5 176.8,186.1 178.5,185.7 180.3,185.2 182.0,184.8 183.6,184.3 185.2,183.8 186.7,183.3 188.2,182.7 189.7,182.1 191.1,181.5 192.4,180.9 193.7,180.3 194.9,179.6 196.1,179.0 197.2,178.3 198.3,177.6 199.3,176.9 200.2,176.2 201.1,175.4 201.9,174.7 202.7,174.0 203.3,173.2 204.0,172.5 204.6,171.7 205.1,171.0 205.5,170.2 205.9,169.5 206.3,168.7 206.5,167.9 206.8,167.2 206.9,166.4 207.1,165.7 207.1,164.9 207.1,164.2 207.1,163.4 207.0,162.7 206.8,162.0 206.6,161.3 206.3,160.6 206.0,159.9 205.7,159.2 205.3,158.5 204.9,157.8 204.4,157.2 203.9,156.5 203.3,155.9 202.7,155.2 202.1,154.6 201.4,154.0 200.7,153.4 199.9,152.8 199.1,152.3 198.3,151.7 197.5,151.2 196.6,150.7 195.7,150.2 194.7,149.7 193.7,149.2 192.8,148.7 191.7,148.3 190.7,147.8 189.6,147.4 188.5,147.0 187.4,146.6 186.3,146.2 185.1,145.9 183.9,145.5 182.7,145.2 181.5,144.9 180.3,144.6 179.1,144.3 177.8,144.0 176.5,143.8 175.3,143.5 174.0,143.3 172.7,143.1 171.4,142.9 170.0,142.7 168.7,142.6 167.3,142.4 166.0,142.3 164.6,142.2 163.3,142.1 161.9,142.0 160.5,142.0 159.2,141.9 157.8,141.9 156.4,141.9 155.0,141.9 153.6,141.9 152.3,141.9 150.9,142.0 149.5,142.0 148.1,142.1 146.7,142.2 145.4,142.3 144.0,142.5 142.6,142.6 141.3,142.8 139.9,142.9 138.6,143.1 137.3,143.3 135.9,143.6 134.6,143.8 133.3,144.1 132.0,144.3 130.7,144.6 129.5,144.9 128.2,145.2 127.0,145.6 125.8,145.9 124.6,146.3 123.4,146.7 122.2,147.1 121.1,147.5 119.9,147.9 118.8,148.4 117.7,148.8 116.7,149.3 115.7,149.8 114.6,150.3 113.7,150.8 112.7,151.3 111.8,151.8 110.9,152.4 110.0,153.0 109.2,153.5 108.4,154.1 107.6,154.7 106.9,155.4 106.2,156.0 105.6,156.6 105.0,157.3 104.4,158.0 103.9,158.6 103.4,159.3 103.0,160.0 102.6,160.7 102.2,161.4 101.9,162.1 101.7,162.9 101.5,163.6 101.3,164.3 101.2,165.1 101.2,165.8 101.2,166.6 101.3,167.3 101.4,168.1 101.6,168.9 101.8,169.6 102.1,170.4 102.5,171.1 102.9,171.9 103.4,172.7 103.9,173.4 104.5,174.1 105.2,174.9 105.9,175.6 106.7,176.3 107.5,177.0 108.4,177.7 109.4,178.4 110.4,179.1" fill="#7023d4"/><polygon points="112.4,178.3 113.5,178.9 114.7,179.5 115.9,180.1 117.2,180.7 118.6,181.3 120.0,181.8 121.4,182.3 122.9,182.8 124.5,183.3 126.1,183.7 127.7,184.1 129.4,184.5 131.1,184.9 132.9,185.2 134.6,185.5 136.5,185.8 138.3,186.1 140.2,186.3 142.1,186.5 144.0,186.6 145.9,186.8 147.8,186.8 149.8,186.9 151.7,186.9 153.7,186.9 155.7,186.9 157.6,186.8 159.6,186.7 161.5,186.6 163.4,186.4 165.3,186.2 167.2,186.0 169.1,185.8 171.0,185.5 172.8,185.2 174.6,184.8 176.3,184.4 178.1,184.0 179.8,183.6 181.4,183.2 183.0,182.7 184.6,182.2 186.1,181.7 187.6,181.1 189.0,180.6 190.4,180.0 191.7,179.4 192.9,178.8 194.1,178.2 195.3,177.5 196.4,176.9 197.4,176.2 198.4,175.5 199.3,174.8 200.2,174.1 201.0,173.4 201.8,172.7 202.4,172.0 203.1,171.2 203.6,170.5 204.2,169.8 204.6,169.0 205.0,168.3 205.3,167.5 205.6,166.8 205.8,166.1 206.0,165.3 206.1,164.6 206.2,163.9 206.2,163.1 206.2,162.4 206.1,161.7 205.9,161.0 205.7,160.3 205.5,159.6 205.2,158.9 204.8,158.3 204.5,157.6 204.0,156.9 203.6,156.3 203.1,155.7 202.5,155.0 201.9,154.4 201.3,153.8 200.6,153.2 199.9,152.6 199.2,152.1 198.4,151.5 197.6,151.0 196.8,150.5 195.9,149.9 195.0,149.4 194.1,149.0 193.1,148.5 192.2,148.0 191.2,147.6 190.1,147.2 189.1,146.7 188.0,146.4 186.9,146.0 185.8,145.6 184.7,145.2 183.5,144.9 182.3,144.6 181.1,144.3 179.9,144.0 178.7,143.7 177.5,143.4 176.2,143.2 175.0,143.0 173.7,142.7 172.4,142.5 171.1,142.4 169.8,142.2 168.5,142.0 167.2,141.9 165.8,141.8 164.5,141.7 163.2,141.6 161.8,141.5 160.5,141.4 159.1,141.4 157.7,141.4 156.4,141.3 155.0,141.3 153.7,141.4 152.3,141.4 150.9,141.4 149.6,141.5 148.2,141.6 146.9,141.7 145.5,141.8 144.2,141.9 142.8,142.1 141.5,142.2 140.2,142.4 138.8,142.6 137.5,142.8 136.2,143.0 134.9,143.2 133.6,143.5 132.4,143.8 131.1,144.0 129.9,144.3 128.6,144.6 127.4,145.0 126.2,145.3 125.0,145.7 123.9,146.0 122.7,146.4 121.6,146.8 120.5,147.3 119.4,147.7 118.3,148.1 117.3,148.6 116.3,149.1 115.3,149.6 114.3,150.1 113.4,150.6 112.5,151.1 111.6,151.6 110.7,152.2 109.9,152.8 109.2,153.4 108.4,153.9 107.7,154.5 107.0,155.2 106.4,155.8 105.8,156.4 105.2,157.1 104.7,157.7 104.3,158.4 103.8,159.1 103.5,159.8 103.1,160.5 102.8,161.2 102.6,161.9 102.4,162.6 102.3,163.3 102.2,164.0 102.1,164.8 102.2,165.5 102.2,166.2 102.4,167.0 102.6,167.7 102.8,168.4 103.1,169.2 103.5,169.9 103.9,170.7 104.3,171.4 104.9,172.1 105.5,172.8 106.1,173.6 106.8,174.3 107.6,175.0 108.5,175.7 109.3,176.3 110.3,177.0 111.3,177.7" fill="#6c21d9"/><polygon points="113.2,176.9 114.3,177.5 115.5,178.1 116.7,178.6 118.0,179.2 119.3,179.7 120.7,180.3 122.1,180.8 123.6,181.2 125.1,181.7 126.6,182.1 128.2,182.5 129.9,182.9 131.6,183.3 133.3,183.6 135.0,183.9 136.8,184.2 138.6,184.4 140.5,184.6 142.3,184.8 144.2,184.9 146.1,185.1 148.0,185.2 149.9,185.2 151.8,185.2 153.7,185.2 155.6,185.2 157.6,185.1 159.5,185.0 161.4,184.9 163.3,184.8 165.1,184.6 167.0,184.3 168.8,184.1 170.7,183.8 172.4,183.5 174.2,183.2 175.9,182.8 177.6,182.4 179.3,182.0 180.9,181.6 182.5,181.1 184.0,180.6 185.5,180.1 186.9,179.6 188.3,179.1 189.7,178.5 191.0,177.9 192.2,177.3 193.4,176.7 194.5,176.1 195.6,175.5 196.7,174.8 197.6,174.1 198.5,173.5 199.4,172.8 200.2,172.1 200.9,171.4 201.6,170.7 202.2,170.0 202.8,169.3 203.3,168.6 203.7,167.8 204.1,167.1 204.5,166.4 204.8,165.7 205.0,165.0 205.1,164.2 205.3,163.5 205.3,162.8 205.3,162.1 205.3,161.4 205.2,160.7 205.1,160.0 204.9,159.3 204.7,158.7 204.4,158.0 204.0,157.3 203.7,156.7 203.3,156.1 202.8,155.4 202.3,154.8 201.8,154.2 201.2,153.6 200.6,153.0 199.9,152.4 199.2,151.9 198.5,151.3 197.8,150.8 197.0,150.2 196.2,149.7 195.3,149.2 194.4,148.7 193.5,148.3 192.6,147.8 191.6,147.3 190.6,146.9 189.6,146.5 188.6,146.1 187.5,145.7 186.5,145.3 185.4,145.0 184.2,144.6 183.1,144.3 181.9,144.0 180.8,143.7 179.6,143.4 178.4,143.1 177.2,142.8 175.9,142.6 174.7,142.4 173.4,142.2 172.2,142.0 170.9,141.8 169.6,141.6 168.3,141.5 167.0,141.3 165.7,141.2 164.4,141.1 163.0,141.0 161.7,140.9 160.4,140.9 159.0,140.8 157.7,140.8 156.4,140.8 155.0,140.8 153.7,140.8 152.3,140.8 151.0,140.9 149.6,140.9 148.3,141.0 147.0,141.1 145.6,141.2 144.3,141.4 143.0,141.5 141.7,141.6 140.4,141.8 139.1,142.0 137.8,142.2 136.5,142.4 135.2,142.6 133.9,142.9 132.7,143.2 131.4,143.4 130.2,143.7 129.0,144.0 127.8,144.4 126.6,144.7 125.5,145.0 124.3,145.4 123.2,145.8 122.1,146.2 121.0,146.6 119.9,147.0 118.9,147.4 117.8,147.9 116.8,148.4 115.9,148.8 114.9,149.3 114.0,149.8 113.1,150.4 112.3,150.9 111.4,151.4 110.6,152.0 109.9,152.5 109.1,153.1 108.4,153.7 107.8,154.3 107.2,154.9 106.6,155.6 106.0,156.2 105.5,156.8 105.1,157.5 104.7,158.1 104.3,158.8 104.0,159.5 103.7,160.2 103.5,160.9 103.3,161.6 103.2,162.3 103.1,163.0 103.0,163.7 103.1,164.4 103.1,165.1 103.3,165.8 103.5,166.6 103.7,167.3 104.0,168.0 104.4,168.7 104.8,169.4 105.2,170.1 105.8,170.9 106.4,171.6 107.0,172.3 107.7,172.9 108.5,173.6 109.3,174.3 110.2,175.0 111.1,175.6 112.1,176.2" fill="#691fdd"/><polygon points="113.9,175.4 115.0,176.0 116.2,176.6 117.4,177.2 118.6,177.7 119.9,178.2 121.3,178.7 122.7,179.2 124.1,179.7 125.6,180.1 127.2,180.6 128.7,180.9 130.4,181.3 132.0,181.7 133.7,182.0 135.4,182.3 137.2,182.5 138.9,182.8 140.7,183.0 142.6,183.1 144.4,183.3 146.2,183.4 148.1,183.5 150.0,183.6 151.9,183.6 153.7,183.6 155.6,183.5 157.5,183.5 159.4,183.4 161.3,183.3 163.1,183.1 165.0,182.9 166.8,182.7 168.6,182.5 170.4,182.2 172.1,181.9 173.8,181.6 175.5,181.2 177.2,180.9 178.8,180.5 180.4,180.0 182.0,179.6 183.5,179.1 184.9,178.6 186.4,178.1 187.7,177.6 189.1,177.1 190.3,176.5 191.6,175.9 192.7,175.3 193.8,174.7 194.9,174.1 195.9,173.5 196.9,172.8 197.8,172.2 198.6,171.5 199.4,170.8 200.1,170.1 200.8,169.5 201.4,168.8 202.0,168.1 202.5,167.4 202.9,166.7 203.3,166.0 203.7,165.3 203.9,164.6 204.2,163.9 204.3,163.2 204.5,162.5 204.5,161.8 204.5,161.1 204.5,160.4 204.4,159.7 204.3,159.0 204.1,158.4 203.9,157.7 203.6,157.1 203.3,156.4 202.9,155.8 202.5,155.2 202.1,154.5 201.6,153.9 201.1,153.3 200.5,152.8 199.9,152.2 199.3,151.6 198.6,151.1 197.9,150.5 197.1,150.0 196.4,149.5 195.6,149.0 194.7,148.5 193.9,148.0 193.0,147.5 192.1,147.1 191.1,146.6 190.1,146.2 189.1,145.8 188.1,145.4 187.1,145.0 186.0,144.7 184.9,144.3 183.8,144.0 182.7,143.6 181.6,143.3 180.4,143.0 179.3,142.7 178.1,142.5 176.9,142.2 175.7,142.0 174.4,141.8 173.2,141.6 171.9,141.4 170.7,141.2 169.4,141.0 168.1,140.9 166.8,140.7 165.5,140.6 164.2,140.5 162.9,140.4 161.6,140.4 160.3,140.3 159.0,140.3 157.7,140.2 156.3,140.2 155.0,140.2 153.7,140.2 152.4,140.3 151.0,140.3 149.7,140.4 148.4,140.4 147.1,140.5 145.8,140.6 144.5,140.8 143.2,140.9 141.9,141.1 140.6,141.2 139.3,141.4 138.0,141.6 136.7,141.8 135.5,142.0 134.2,142.3 133.0,142.5 131.8,142.8 130.6,143.1 129.4,143.4 128.2,143.7 127.0,144.0 125.9,144.4 124.7,144.7 123.6,145.1 122.5,145.5 121.5,145.9 120.4,146.3 119.4,146.7 118.4,147.2 117.4,147.6 116.4,148.1 115.5,148.6 114.6,149.1 113.7,149.6 112.9,150.1 112.1,150.6 111.3,151.2 110.5,151.7 109.8,152.3 109.1,152.9 108.5,153.5 107.9,154.1 107.3,154.7 106.8,155.3 106.3,155.9 105.9,156.6 105.5,157.2 105.1,157.9 104.8,158.5 104.5,159.2 104.3,159.9 104.1,160.6 104.0,161.2 103.9,161.9 103.9,162.6 103.9,163.3 104.0,164.0 104.1,164.7 104.3,165.4 104.6,166.1 104.9,166.8 105.2,167.5 105.6,168.2 106.1,168.9 106.6,169.6 107.2,170.3 107.8,171.0 108.5,171.6 109.3,172.3 110.1,172.9 111.0,173.6 111.9,174.2 112.9,174.8" fill="#651ee2"/><polygon points="114.6,174.1 115.7,174.6 116.9,175.2 118.0,175.7 119.3,176.3 120.6,176.8 121.9,177.3 123.3,177.7 124.7,178.2 126.2,178.6 127.7,179.0 129.2,179.4 130.8,179.8 132.4,180.1 134.1,180.4 135.8,180.7 137.5,180.9 139.2,181.2 141.0,181.4 142.8,181.5 144.6,181.7 146.4,181.8 148.2,181.9 150.1,181.9 151.9,182.0 153.8,182.0 155.6,181.9 157.5,181.9 159.3,181.8 161.1,181.6 163.0,181.5 164.8,181.3 166.6,181.1 168.3,180.9 170.1,180.6 171.8,180.3 173.5,180.0 175.2,179.7 176.8,179.3 178.4,178.9 180.0,178.5 181.5,178.1 183.0,177.6 184.4,177.2 185.8,176.7 187.2,176.1 188.5,175.6 189.7,175.1 190.9,174.5 192.1,173.9 193.2,173.3 194.2,172.7 195.2,172.1 196.2,171.5 197.1,170.8 197.9,170.2 198.7,169.5 199.4,168.9 200.1,168.2 200.7,167.5 201.2,166.9 201.7,166.2 202.2,165.5 202.5,164.8 202.9,164.1 203.2,163.4 203.4,162.8 203.6,162.1 203.7,161.4 203.8,160.7 203.8,160.1 203.7,159.4 203.7,158.7 203.5,158.1 203.4,157.4 203.2,156.8 202.9,156.1 202.6,155.5 202.2,154.9 201.8,154.3 201.4,153.7 200.9,153.1 200.4,152.5 199.9,151.9 199.3,151.3 198.6,150.8 198.0,150.3 197.3,149.7 196.6,149.2 195.8,148.7 195.0,148.2 194.2,147.7 193.3,147.3 192.5,146.8 191.5,146.4 190.6,145.9 189.7,145.5 188.7,145.1 187.7,144.7 186.7,144.3 185.6,144.0 184.5,143.6 183.5,143.3 182.3,143.0 181.2,142.7 180.1,142.4 178.9,142.1 177.8,141.8 176.6,141.6 175.4,141.4 174.2,141.1 173.0,140.9 171.7,140.8 170.5,140.6 169.2,140.4 168.0,140.3 166.7,140.1 165.4,140.0 164.1,139.9 162.8,139.8 161.5,139.8 160.2,139.7 158.9,139.7 157.6,139.6 156.3,139.6 155.0,139.6 153.7,139.6 152.4,139.7 151.1,139.7 149.8,139.8 148.5,139.9 147.2,139.9 145.9,140.0 144.6,140.2 143.3,140.3 142.0,140.5 140.7,140.6 139.5,140.8 138.2,141.0 137.0,141.2 135.7,141.4 134.5,141.7 133.3,141.9 132.1,142.2 130.9,142.4 129.7,142.7 128.5,143.1 127.4,143.4 126.3,143.7 125.1,144.1 124.0,144.4 123.0,144.8 121.9,145.2 120.9,145.6 119.9,146.0 118.9,146.5 117.9,146.9 117.0,147.4 116.1,147.8 115.2,148.3 114.3,148.8 113.5,149.3 112.7,149.8 111.9,150.4 111.2,150.9 110.5,151.5 109.8,152.0 109.2,152.6 108.6,153.2 108.0,153.8 107.5,154.4 107.0,155.0 106.6,155.6 106.2,156.3 105.8,156.9 105.5,157.6 105.3,158.2 105.1,158.9 104.9,159.5 104.8,160.2 104.7,160.9 104.7,161.6 104.7,162.2 104.8,162.9 104.9,163.6 105.1,164.3 105.4,165.0 105.7,165.7 106.0,166.3 106.4,167.0 106.9,167.7 107.4,168.4 108.0,169.0 108.6,169.7 109.3,170.3 110.1,171.0 110.9,171.6 111.7,172.2 112.6,172.9 113.6,173.5" fill="#611ce6"/><polygon points="115.3,172.7 116.4,173.2 117.5,173.8 118.7,174.3 119.9,174.8 121.1,175.3 122.5,175.8 123.8,176.3 125.2,176.7 126.7,177.1 128.1,177.5 129.7,177.9 131.2,178.2 132.8,178.5 134.5,178.8 136.1,179.1 137.8,179.4 139.5,179.6 141.2,179.8 143.0,179.9 144.8,180.1 146.6,180.2 148.4,180.3 150.2,180.3 152.0,180.4 153.8,180.4 155.6,180.3 157.4,180.3 159.2,180.2 161.0,180.1 162.8,179.9 164.6,179.7 166.4,179.5 168.1,179.3 169.8,179.1 171.5,178.8 173.2,178.5 174.8,178.1 176.4,177.8 178.0,177.4 179.5,177.0 181.0,176.6 182.5,176.2 183.9,175.7 185.3,175.2 186.6,174.7 187.9,174.2 189.1,173.7 190.3,173.1 191.5,172.5 192.6,172.0 193.6,171.4 194.6,170.8 195.5,170.2 196.4,169.5 197.2,168.9 198.0,168.3 198.7,167.6 199.3,167.0 199.9,166.3 200.5,165.7 201.0,165.0 201.4,164.3 201.8,163.7 202.1,163.0 202.4,162.3 202.6,161.7 202.8,161.0 203.0,160.3 203.0,159.7 203.0,159.0 203.0,158.4 203.0,157.7 202.8,157.1 202.7,156.4 202.5,155.8 202.2,155.2 201.9,154.6 201.6,154.0 201.2,153.4 200.7,152.8 200.3,152.2 199.8,151.6 199.2,151.1 198.6,150.5 198.0,150.0 197.4,149.4 196.7,148.9 196.0,148.4 195.2,147.9 194.5,147.4 193.7,147.0 192.8,146.5 192.0,146.1 191.1,145.6 190.1,145.2 189.2,144.8 188.2,144.4 187.3,144.0 186.2,143.7 185.2,143.3 184.2,143.0 183.1,142.6 182.0,142.3 180.9,142.0 179.8,141.7 178.6,141.5 177.5,141.2 176.3,141.0 175.1,140.7 173.9,140.5 172.7,140.3 171.5,140.1 170.3,140.0 169.0,139.8 167.8,139.7 166.5,139.5 165.3,139.4 164.0,139.3 162.7,139.2 161.5,139.2 160.2,139.1 158.9,139.1 157.6,139.0 156.3,139.0 155.0,139.0 153.7,139.0 152.4,139.1 151.1,139.1 149.9,139.2 148.6,139.2 147.3,139.3 146.0,139.4 144.7,139.6 143.5,139.7 142.2,139.8 140.9,140.0 139.7,140.2 138.4,140.4 137.2,140.6 136.0,140.8 134.8,141.0 133.6,141.3 132.4,141.5 131.2,141.8 130.0,142.1 128.9,142.4 127.7,142.7 126.6,143.0 125.5,143.4 124.5,143.7 123.4,144.1 122.4,144.5 121.3,144.9 120.3,145.3 119.4,145.7 118.4,146.2 117.5,146.6 116.6,147.1 115.7,147.5 114.9,148.0 114.0,148.5 113.3,149.0 112.5,149.6 111.8,150.1 111.1,150.6 110.4,151.2 109.8,151.7 109.2,152.3 108.7,152.9 108.2,153.5 107.7,154.1 107.3,154.7 106.9,155.3 106.6,156.0 106.3,156.6 106.0,157.2 105.8,157.9 105.6,158.5 105.5,159.2 105.5,159.8 105.5,160.5 105.5,161.2 105.6,161.8 105.7,162.5 105.9,163.2 106.1,163.8 106.4,164.5 106.8,165.2 107.2,165.8 107.7,166.5 108.2,167.1 108.8,167.8 109.4,168.4 110.1,169.1 110.8,169.7 111.6,170.3 112.4,170.9 113.3,171.5 114.3,172.1" fill="#5e1aeb"/><polygon points="116.0,171.3 117.0,171.9 118.1,172.4 119.3,172.9 120.5,173.4 121.7,173.9 123.0,174.3 124.3,174.8 125.7,175.2 127.1,175.6 128.6,176.0 130.1,176.4 131.6,176.7 133.2,177.0 134.8,177.3 136.4,177.6 138.1,177.8 139.8,178.0 141.5,178.2 143.2,178.4 144.9,178.5 146.7,178.6 148.5,178.7 150.3,178.8 152.0,178.8 153.8,178.8 155.6,178.8 157.4,178.7 159.2,178.6 160.9,178.5 162.7,178.4 164.4,178.2 166.2,178.0 167.9,177.8 169.6,177.5 171.2,177.3 172.9,177.0 174.5,176.6 176.1,176.3 177.6,175.9 179.1,175.5 180.6,175.1 182.1,174.7 183.4,174.2 184.8,173.8 186.1,173.3 187.4,172.8 188.6,172.3 189.8,171.7 190.9,171.2 192.0,170.6 193.0,170.1 193.9,169.5 194.9,168.9 195.7,168.3 196.5,167.6 197.3,167.0 198.0,166.4 198.7,165.8 199.2,165.1 199.8,164.5 200.3,163.8 200.7,163.2 201.1,162.5 201.4,161.9 201.7,161.2 201.9,160.6 202.1,159.9 202.2,159.3 202.3,158.6 202.4,158.0 202.3,157.4 202.3,156.7 202.1,156.1 202.0,155.5 201.8,154.9 201.5,154.2 201.2,153.6 200.9,153.0 200.5,152.5 200.1,151.9 199.7,151.3 199.2,150.8 198.6,150.2 198.1,149.7 197.5,149.1 196.8,148.6 196.1,148.1 195.4,147.6 194.7,147.1 193.9,146.7 193.1,146.2 192.3,145.7 191.5,145.3 190.6,144.9 189.7,144.5 188.8,144.1 187.8,143.7 186.8,143.3 185.8,142.9 184.8,142.6 183.8,142.3 182.7,141.9 181.7,141.6 180.6,141.3 179.5,141.1 178.3,140.8 177.2,140.5 176.0,140.3 174.9,140.1 173.7,139.9 172.5,139.7 171.3,139.5 170.1,139.3 168.9,139.2 167.6,139.0 166.4,138.9 165.2,138.8 163.9,138.7 162.7,138.6 161.4,138.5 160.1,138.5 158.9,138.4 157.6,138.4 156.3,138.4 155.0,138.4 153.8,138.4 152.5,138.4 151.2,138.5 149.9,138.5 148.7,138.6 147.4,138.7 146.1,138.8 144.9,138.9 143.6,139.1 142.4,139.2 141.1,139.4 139.9,139.5 138.6,139.7 137.4,139.9 136.2,140.1 135.0,140.4 133.8,140.6 132.7,140.9 131.5,141.1 130.3,141.4 129.2,141.7 128.1,142.0 127.0,142.3 125.9,142.7 124.8,143.0 123.8,143.4 122.8,143.8 121.8,144.2 120.8,144.6 119.8,145.0 118.9,145.4 118.0,145.8 117.1,146.3 116.2,146.8 115.4,147.2 114.6,147.7 113.8,148.2 113.1,148.7 112.4,149.3 111.7,149.8 111.0,150.3 110.4,150.9 109.9,151.4 109.3,152.0 108.8,152.6 108.4,153.2 108.0,153.8 107.6,154.4 107.3,155.0 107.0,155.6 106.7,156.2 106.5,156.9 106.4,157.5 106.3,158.1 106.2,158.8 106.2,159.4 106.2,160.1 106.3,160.7 106.5,161.4 106.6,162.0 106.9,162.7 107.2,163.3 107.5,164.0 107.9,164.6 108.4,165.3 108.9,165.9 109.5,166.5 110.1,167.2 110.8,167.8 111.5,168.4 112.3,169.0 113.1,169.6 114.0,170.2 115.0,170.7" fill="#5a18ef"/><polygon points="116.6,170.0 117.6,170.5 118.7,171.0 119.8,171.5 121.0,172.0 122.2,172.5 123.5,172.9 124.8,173.3 126.2,173.8 127.6,174.2 129.0,174.5 130.5,174.9 132.0,175.2 133.6,175.5 135.1,175.8 136.7,176.1 138.4,176.3 140.0,176.5 141.7,176.7 143.4,176.8 145.1,177.0 146.8,177.1 148.6,177.2 150.3,177.2 152.1,177.2 153.8,177.2 155.6,177.2 157.4,177.1 159.1,177.1 160.8,177.0 162.6,176.8 164.3,176.7 166.0,176.5 167.7,176.2 169.3,176.0 171.0,175.7 172.6,175.5 174.2,175.1 175.7,174.8 177.3,174.5 178.8,174.1 180.2,173.7 181.6,173.3 183.0,172.8 184.3,172.4 185.6,171.9 186.9,171.4 188.1,170.9 189.2,170.4 190.3,169.8 191.4,169.3 192.4,168.7 193.3,168.2 194.2,167.6 195.1,167.0 195.9,166.4 196.7,165.8 197.3,165.2 198.0,164.6 198.6,163.9 199.1,163.3 199.6,162.7 200.0,162.0 200.4,161.4 200.8,160.8 201.0,160.1 201.3,159.5 201.4,158.9 201.6,158.2 201.7,157.6 201.7,157.0 201.7,156.3 201.6,155.7 201.5,155.1 201.3,154.5 201.1,153.9 200.9,153.3 200.6,152.7 200.3,152.1 199.9,151.6 199.5,151.0 199.1,150.4 198.6,149.9 198.1,149.3 197.5,148.8 196.9,148.3 196.3,147.8 195.6,147.3 194.9,146.8 194.2,146.3 193.4,145.9 192.7,145.4 191.8,145.0 191.0,144.5 190.1,144.1 189.3,143.7 188.3,143.3 187.4,142.9 186.4,142.6 185.5,142.2 184.5,141.9 183.4,141.6 182.4,141.2 181.3,140.9 180.3,140.7 179.2,140.4 178.1,140.1 176.9,139.9 175.8,139.6 174.6,139.4 173.5,139.2 172.3,139.0 171.1,138.8 169.9,138.7 168.7,138.5 167.5,138.4 166.3,138.3 165.0,138.1 163.8,138.0 162.6,138.0 161.3,137.9 160.1,137.8 158.8,137.8 157.6,137.8 156.3,137.8 155.0,137.8 153.8,137.8 152.5,137.8 151.2,137.9 150.0,137.9 148.7,138.0 147.5,138.1 146.2,138.2 145.0,138.3 143.7,138.4 142.5,138.5 141.3,138.7 140.1,138.9 138.8,139.1 137.6,139.3 136.4,139.5 135.3,139.7 134.1,139.9 132.9,140.2 131.8,140.4 130.7,140.7 129.5,141.0 128.4,141.3 127.3,141.6 126.3,142.0 125.2,142.3 124.2,142.7 123.2,143.0 122.2,143.4 121.2,143.8 120.3,144.2 119.3,144.6 118.5,145.1 117.6,145.5 116.7,146.0 115.9,146.4 115.1,146.9 114.4,147.4 113.6,147.9 112.9,148.4 112.3,148.9 111.6,149.5 111.0,150.0 110.5,150.6 110.0,151.1 109.5,151.7 109.0,152.3 108.6,152.8 108.2,153.4 107.9,154.0 107.6,154.6 107.4,155.2 107.2,155.9 107.1,156.5 107.0,157.1 106.9,157.7 106.9,158.4 106.9,159.0 107.0,159.6 107.2,160.3 107.4,160.9 107.6,161.5 107.9,162.2 108.3,162.8 108.7,163.4 109.1,164.1 109.6,164.7 110.2,165.3 110.8,165.9 111.5,166.5 112.2,167.1 113.0,167.7 113.8,168.3 114.7,168.9 115.6,169.4" fill="#5015f2"/><polygon points="117.2,168.6 118.2,169.1 119.3,169.6 120.4,170.1 121.5,170.6 122.8,171.1 124.0,171.5 125.3,171.9 126.7,172.3 128.0,172.7 129.4,173.1 130.9,173.4 132.4,173.7 133.9,174.0 135.5,174.3 137.0,174.6 138.6,174.8 140.3,175.0 141.9,175.2 143.6,175.3 145.3,175.5 147.0,175.6 148.7,175.6 150.4,175.7 152.1,175.7 153.9,175.7 155.6,175.7 157.3,175.6 159.0,175.5 160.8,175.4 162.5,175.3 164.1,175.1 165.8,174.9 167.5,174.7 169.1,174.5 170.7,174.2 172.3,174.0 173.9,173.7 175.4,173.3 176.9,173.0 178.4,172.6 179.8,172.2 181.2,171.8 182.6,171.4 183.9,171.0 185.1,170.5 186.4,170.0 187.6,169.5 188.7,169.0 189.8,168.5 190.8,168.0 191.8,167.4 192.8,166.9 193.7,166.3 194.5,165.7 195.3,165.1 196.0,164.5 196.7,163.9 197.4,163.3 197.9,162.7 198.5,162.1 199.0,161.5 199.4,160.9 199.8,160.3 200.1,159.6 200.4,159.0 200.6,158.4 200.8,157.8 200.9,157.2 201.0,156.5 201.0,155.9 201.0,155.3 201.0,154.7 200.9,154.1 200.7,153.5 200.5,152.9 200.3,152.3 200.0,151.8 199.7,151.2 199.3,150.6 198.9,150.1 198.5,149.5 198.0,149.0 197.5,148.5 196.9,148.0 196.4,147.5 195.7,147.0 195.1,146.5 194.4,146.0 193.7,145.5 193.0,145.1 192.2,144.6 191.4,144.2 190.6,143.8 189.7,143.4 188.8,143.0 187.9,142.6 187.0,142.2 186.1,141.8 185.1,141.5 184.1,141.2 183.1,140.8 182.1,140.5 181.0,140.2 180.0,140.0 178.9,139.7 177.8,139.4 176.7,139.2 175.5,139.0 174.4,138.7 173.3,138.5 172.1,138.3 170.9,138.2 169.7,138.0 168.6,137.9 167.4,137.7 166.1,137.6 164.9,137.5 163.7,137.4 162.5,137.3 161.2,137.3 160.0,137.2 158.8,137.2 157.5,137.1 156.3,137.1 155.0,137.1 153.8,137.1 152.5,137.2 151.3,137.2 150.1,137.3 148.8,137.3 147.6,137.4 146.3,137.5 145.1,137.6 143.9,137.8 142.7,137.9 141.4,138.0 140.2,138.2 139.0,138.4 137.9,138.6 136.7,138.8 135.5,139.0 134.3,139.2 133.2,139.5 132.1,139.7 130.9,140.0 129.8,140.3 128.8,140.6 127.7,140.9 126.6,141.2 125.6,141.6 124.6,141.9 123.6,142.3 122.6,142.7 121.6,143.1 120.7,143.5 119.8,143.9 118.9,144.3 118.1,144.7 117.2,145.2 116.4,145.6 115.6,146.1 114.9,146.6 114.2,147.1 113.5,147.6 112.8,148.1 112.2,148.6 111.6,149.1 111.1,149.7 110.6,150.2 110.1,150.8 109.6,151.3 109.2,151.9 108.9,152.5 108.6,153.1 108.3,153.6 108.1,154.2 107.9,154.8 107.7,155.5 107.6,156.1 107.6,156.7 107.6,157.3 107.6,157.9 107.7,158.5 107.9,159.2 108.1,159.8 108.3,160.4 108.6,161.0 108.9,161.6 109.3,162.3 109.8,162.9 110.3,163.5 110.8,164.1 111.5,164.7 112.1,165.3 112.8,165.8 113.6,166.4 114.4,167.0 115.3,167.5 116.2,168.1" fill="#4411f4"/><polygon points="117.8,167.3 118.8,167.8 119.8,168.3 120.9,168.8 122.1,169.2 123.3,169.7 124.5,170.1 125.8,170.5 127.1,170.9 128.5,171.3 129.9,171.6 131.3,172.0 132.8,172.3 134.2,172.6 135.8,172.8 137.3,173.1 138.9,173.3 140.5,173.5 142.1,173.7 143.8,173.8 145.4,173.9 147.1,174.0 148.8,174.1 150.5,174.2 152.2,174.2 153.9,174.2 155.6,174.2 157.3,174.1 159.0,174.0 160.7,173.9 162.3,173.8 164.0,173.6 165.7,173.5 167.3,173.2 168.9,173.0 170.5,172.8 172.1,172.5 173.6,172.2 175.1,171.9 176.6,171.5 178.0,171.2 179.4,170.8 180.8,170.4 182.1,170.0 183.4,169.6 184.7,169.1 185.9,168.6 187.1,168.2 188.2,167.7 189.3,167.2 190.3,166.6 191.3,166.1 192.2,165.6 193.1,165.0 193.9,164.5 194.7,163.9 195.4,163.3 196.1,162.7 196.7,162.1 197.3,161.5 197.9,160.9 198.3,160.3 198.8,159.7 199.1,159.1 199.5,158.5 199.7,157.9 200.0,157.3 200.2,156.7 200.3,156.1 200.4,155.5 200.4,154.9 200.4,154.3 200.3,153.7 200.2,153.1 200.1,152.5 199.9,152.0 199.7,151.4 199.4,150.8 199.1,150.3 198.7,149.7 198.3,149.2 197.9,148.6 197.5,148.1 196.9,147.6 196.4,147.1 195.8,146.6 195.2,146.1 194.6,145.6 193.9,145.2 193.2,144.7 192.5,144.3 191.7,143.8 190.9,143.4 190.1,143.0 189.3,142.6 188.4,142.2 187.5,141.8 186.6,141.5 185.7,141.1 184.7,140.8 183.8,140.4 182.8,140.1 181.7,139.8 180.7,139.5 179.7,139.3 178.6,139.0 177.5,138.7 176.4,138.5 175.3,138.3 174.2,138.1 173.0,137.9 171.9,137.7 170.7,137.5 169.6,137.3 168.4,137.2 167.2,137.1 166.0,136.9 164.8,136.8 163.6,136.7 162.4,136.7 161.2,136.6 160.0,136.5 158.7,136.5 157.5,136.5 156.3,136.5 155.0,136.5 153.8,136.5 152.6,136.5 151.3,136.6 150.1,136.6 148.9,136.7 147.7,136.8 146.4,136.9 145.2,137.0 144.0,137.1 142.8,137.2 141.6,137.4 140.4,137.5 139.2,137.7 138.1,137.9 136.9,138.1 135.7,138.3 134.6,138.5 133.5,138.8 132.3,139.0 131.2,139.3 130.1,139.6 129.1,139.9 128.0,140.2 127.0,140.5 126.0,140.8 124.9,141.2 124.0,141.5 123.0,141.9 122.1,142.3 121.1,142.7 120.2,143.1 119.4,143.5 118.5,143.9 117.7,144.4 116.9,144.8 116.1,145.3 115.4,145.7 114.7,146.2 114.0,146.7 113.4,147.2 112.8,147.7 112.2,148.2 111.6,148.8 111.1,149.3 110.7,149.8 110.2,150.4 109.9,151.0 109.5,151.5 109.2,152.1 108.9,152.7 108.7,153.3 108.5,153.8 108.4,154.4 108.3,155.0 108.2,155.6 108.2,156.2 108.3,156.8 108.4,157.4 108.5,158.1 108.7,158.7 109.0,159.3 109.3,159.9 109.6,160.5 110.0,161.1 110.4,161.7 110.9,162.3 111.5,162.9 112.1,163.4 112.8,164.0 113.5,164.6 114.2,165.1 115.0,165.7 115.9,166.2 116.8,166.8" fill="#390ef6"/><polygon points="118.3,166.0 119.3,166.4 120.4,166.9 121.4,167.4 122.6,167.8 123.7,168.3 125.0,168.7 126.2,169.1 127.5,169.5 128.9,169.8 130.2,170.2 131.7,170.5 133.1,170.8 134.6,171.1 136.1,171.4 137.6,171.6 139.2,171.8 140.7,172.0 142.3,172.2 144.0,172.3 145.6,172.4 147.2,172.5 148.9,172.6 150.6,172.7 152.2,172.7 153.9,172.7 155.6,172.7 157.3,172.6 158.9,172.5 160.6,172.4 162.2,172.3 163.9,172.1 165.5,172.0 167.1,171.8 168.7,171.5 170.3,171.3 171.8,171.0 173.3,170.8 174.8,170.4 176.2,170.1 177.7,169.8 179.1,169.4 180.4,169.0 181.7,168.6 183.0,168.2 184.2,167.7 185.4,167.3 186.6,166.8 187.7,166.3 188.8,165.8 189.8,165.3 190.7,164.8 191.7,164.3 192.5,163.8 193.4,163.2 194.1,162.6 194.9,162.1 195.5,161.5 196.2,160.9 196.7,160.4 197.3,159.8 197.7,159.2 198.2,158.6 198.5,158.0 198.9,157.4 199.1,156.8 199.4,156.2 199.5,155.6 199.7,155.0 199.8,154.5 199.8,153.9 199.8,153.3 199.7,152.7 199.6,152.1 199.5,151.6 199.3,151.0 199.1,150.4 198.8,149.9 198.5,149.3 198.2,148.8 197.8,148.3 197.4,147.7 196.9,147.2 196.4,146.7 195.9,146.2 195.3,145.7 194.7,145.3 194.1,144.8 193.4,144.3 192.8,143.9 192.0,143.5 191.3,143.0 190.5,142.6 189.7,142.2 188.9,141.8 188.0,141.4 187.1,141.1 186.2,140.7 185.3,140.4 184.4,140.0 183.4,139.7 182.4,139.4 181.4,139.1 180.4,138.8 179.4,138.5 178.3,138.3 177.3,138.0 176.2,137.8 175.1,137.6 174.0,137.4 172.8,137.2 171.7,137.0 170.6,136.8 169.4,136.7 168.2,136.5 167.1,136.4 165.9,136.3 164.7,136.2 163.5,136.1 162.3,136.0 161.1,135.9 159.9,135.9 158.7,135.8 157.5,135.8 156.3,135.8 155.0,135.8 153.8,135.8 152.6,135.8 151.4,135.9 150.2,135.9 149.0,136.0 147.7,136.1 146.5,136.2 145.3,136.3 144.1,136.4 142.9,136.5 141.8,136.7 140.6,136.9 139.4,137.0 138.3,137.2 137.1,137.4 136.0,137.6 134.8,137.8 133.7,138.1 132.6,138.3 131.5,138.6 130.4,138.9 129.4,139.2 128.3,139.5 127.3,139.8 126.3,140.1 125.3,140.4 124.3,140.8 123.4,141.1 122.5,141.5 121.5,141.9 120.7,142.3 119.8,142.7 119.0,143.1 118.2,143.5 117.4,144.0 116.6,144.4 115.9,144.9 115.2,145.4 114.5,145.8 113.9,146.3 113.3,146.8 112.7,147.3 112.2,147.9 111.7,148.4 111.3,148.9 110.8,149.5 110.4,150.0 110.1,150.6 109.8,151.1 109.5,151.7 109.3,152.3 109.1,152.8 109.0,153.4 108.9,154.0 108.9,154.6 108.9,155.2 108.9,155.8 109.0,156.4 109.2,156.9 109.4,157.5 109.6,158.1 109.9,158.7 110.2,159.3 110.6,159.9 111.1,160.5 111.6,161.1 112.1,161.6 112.7,162.2 113.4,162.8 114.1,163.3 114.8,163.9 115.6,164.4 116.5,164.9 117.4,165.4" fill="#2d0bf8"/><polygon points="118.9,164.6 119.8,165.1 120.9,165.6 121.9,166.0 123.1,166.5 124.2,166.9 125.4,167.3 126.7,167.7 127.9,168.1 129.3,168.4 130.6,168.8 132.0,169.1 133.4,169.4 134.9,169.6 136.4,169.9 137.9,170.1 139.4,170.3 141.0,170.5 142.5,170.7 144.1,170.8 145.7,171.0 147.4,171.1 149.0,171.1 150.6,171.2 152.3,171.2 153.9,171.2 155.6,171.2 157.2,171.1 158.9,171.0 160.5,170.9 162.1,170.8 163.7,170.7 165.3,170.5 166.9,170.3 168.5,170.1 170.0,169.9 171.5,169.6 173.0,169.3 174.5,169.0 175.9,168.7 177.3,168.3 178.7,168.0 180.0,167.6 181.3,167.2 182.6,166.8 183.8,166.4 185.0,165.9 186.1,165.5 187.2,165.0 188.3,164.5 189.3,164.0 190.2,163.5 191.1,163.0 192.0,162.5 192.8,162.0 193.6,161.4 194.3,160.9 195.0,160.3 195.6,159.7 196.1,159.2 196.7,158.6 197.1,158.0 197.6,157.5 197.9,156.9 198.3,156.3 198.5,155.7 198.8,155.1 198.9,154.6 199.1,154.0 199.2,153.4 199.2,152.8 199.2,152.3 199.2,151.7 199.1,151.1 198.9,150.6 198.7,150.0 198.5,149.5 198.3,148.9 198.0,148.4 197.6,147.9 197.3,147.4 196.8,146.8 196.4,146.3 195.9,145.8 195.4,145.4 194.8,144.9 194.2,144.4 193.6,144.0 193.0,143.5 192.3,143.1 191.6,142.6 190.8,142.2 190.1,141.8 189.3,141.4 188.5,141.0 187.6,140.7 186.8,140.3 185.9,139.9 185.0,139.6 184.0,139.3 183.1,139.0 182.1,138.7 181.1,138.4 180.1,138.1 179.1,137.8 178.1,137.6 177.0,137.3 175.9,137.1 174.8,136.9 173.8,136.7 172.6,136.5 171.5,136.3 170.4,136.1 169.3,136.0 168.1,135.8 166.9,135.7 165.8,135.6 164.6,135.5 163.4,135.4 162.2,135.3 161.0,135.3 159.8,135.2 158.7,135.2 157.5,135.1 156.2,135.1 155.0,135.1 153.8,135.1 152.6,135.2 151.4,135.2 150.2,135.3 149.0,135.3 147.8,135.4 146.6,135.5 145.4,135.6 144.3,135.7 143.1,135.9 141.9,136.0 140.8,136.2 139.6,136.3 138.4,136.5 137.3,136.7 136.2,136.9 135.1,137.1 134.0,137.4 132.9,137.6 131.8,137.9 130.7,138.1 129.7,138.4 128.7,138.7 127.6,139.0 126.6,139.3 125.7,139.7 124.7,140.0 123.8,140.4 122.8,140.7 122.0,141.1 121.1,141.5 120.2,141.9 119.4,142.3 118.6,142.7 117.8,143.2 117.1,143.6 116.4,144.1 115.7,144.5 115.0,145.0 114.4,145.5 113.8,146.0 113.3,146.4 112.8,147.0 112.3,147.5 111.8,148.0 111.4,148.5 111.0,149.1 110.7,149.6 110.4,150.1 110.1,150.7 109.9,151.3 109.8,151.8 109.6,152.4 109.5,153.0 109.5,153.5 109.5,154.1 109.6,154.7 109.7,155.3 109.8,155.8 110.0,156.4 110.2,157.0 110.5,157.6 110.9,158.2 111.3,158.7 111.7,159.3 112.2,159.9 112.7,160.4 113.3,161.0 114.0,161.5 114.7,162.1 115.4,162.6 116.2,163.1 117.0,163.6 117.9,164.1" fill="#2207fb"/><polygon points="119.4,163.3 120.4,163.8 121.4,164.2 122.4,164.7 123.5,165.1 124.7,165.5 125.9,165.9 127.1,166.3 128.4,166.7 129.7,167.0 131.0,167.3 132.4,167.7 133.8,167.9 135.2,168.2 136.7,168.5 138.1,168.7 139.7,168.9 141.2,169.1 142.7,169.2 144.3,169.4 145.9,169.5 147.5,169.6 149.1,169.6 150.7,169.7 152.3,169.7 154.0,169.7 155.6,169.7 157.2,169.6 158.8,169.6 160.4,169.5 162.0,169.3 163.6,169.2 165.2,169.0 166.7,168.8 168.3,168.6 169.8,168.4 171.3,168.2 172.8,167.9 174.2,167.6 175.6,167.3 177.0,166.9 178.4,166.6 179.7,166.2 180.9,165.8 182.2,165.4 183.4,165.0 184.5,164.6 185.7,164.1 186.7,163.7 187.8,163.2 188.8,162.7 189.7,162.2 190.6,161.7 191.5,161.2 192.3,160.7 193.0,160.2 193.7,159.6 194.4,159.1 195.0,158.5 195.6,158.0 196.1,157.4 196.6,156.9 197.0,156.3 197.4,155.7 197.7,155.2 197.9,154.6 198.2,154.0 198.4,153.5 198.5,152.9 198.6,152.4 198.6,151.8 198.6,151.2 198.6,150.7 198.5,150.1 198.4,149.6 198.2,149.0 198.0,148.5 197.7,148.0 197.4,147.5 197.1,146.9 196.7,146.4 196.3,145.9 195.9,145.4 195.4,145.0 194.9,144.5 194.3,144.0 193.8,143.6 193.2,143.1 192.5,142.7 191.8,142.2 191.1,141.8 190.4,141.4 189.7,141.0 188.9,140.6 188.1,140.2 187.3,139.9 186.4,139.5 185.5,139.2 184.6,138.8 183.7,138.5 182.8,138.2 181.8,137.9 180.8,137.6 179.8,137.3 178.8,137.1 177.8,136.8 176.8,136.6 175.7,136.4 174.6,136.2 173.5,136.0 172.4,135.8 171.3,135.6 170.2,135.4 169.1,135.3 168.0,135.1 166.8,135.0 165.7,134.9 164.5,134.8 163.3,134.7 162.2,134.6 161.0,134.6 159.8,134.5 158.6,134.5 157.4,134.5 156.2,134.5 155.0,134.5 153.9,134.5 152.7,134.5 151.5,134.5 150.3,134.6 149.1,134.7 147.9,134.7 146.7,134.8 145.6,134.9 144.4,135.0 143.2,135.2 142.1,135.3 140.9,135.5 139.8,135.6 138.6,135.8 137.5,136.0 136.4,136.2 135.3,136.4 134.2,136.6 133.1,136.9 132.1,137.1 131.0,137.4 130.0,137.7 129.0,138.0 128.0,138.3 127.0,138.6 126.0,138.9 125.1,139.2 124.1,139.6 123.2,140.0 122.4,140.3 121.5,140.7 120.7,141.1 119.8,141.5 119.1,141.9 118.3,142.3 117.6,142.8 116.9,143.2 116.2,143.7 115.5,144.1 114.9,144.6 114.3,145.1 113.8,145.5 113.3,146.0 112.8,146.5 112.4,147.1 112.0,147.6 111.6,148.1 111.3,148.6 111.0,149.2 110.7,149.7 110.5,150.3 110.3,150.8 110.2,151.4 110.1,151.9 110.1,152.5 110.1,153.0 110.2,153.6 110.3,154.2 110.4,154.7 110.6,155.3 110.9,155.9 111.2,156.4 111.5,157.0 111.9,157.6 112.3,158.1 112.8,158.7 113.3,159.2 113.9,159.8 114.6,160.3 115.2,160.8 116.0,161.3 116.8,161.9 117.6,162.4 118.5,162.8" fill="#1704fd"/><polygon points="119.9,162.0 120.9,162.5 121.9,162.9 122.9,163.3 124.0,163.8 125.1,164.2 126.3,164.6 127.5,164.9 128.8,165.3 130.0,165.6 131.4,165.9 132.7,166.2 134.1,166.5 135.5,166.8 136.9,167.0 138.4,167.2 139.9,167.4 141.4,167.6 142.9,167.8 144.5,167.9 146.0,168.0 147.6,168.1 149.2,168.2 150.8,168.2 152.4,168.2 154.0,168.2 155.6,168.2 157.2,168.2 158.8,168.1 160.3,168.0 161.9,167.9 163.5,167.7 165.0,167.6 166.6,167.4 168.1,167.2 169.6,167.0 171.1,166.7 172.5,166.5 173.9,166.2 175.3,165.9 176.7,165.5 178.0,165.2 179.3,164.8 180.6,164.5 181.8,164.1 183.0,163.7 184.1,163.3 185.2,162.8 186.3,162.4 187.3,161.9 188.3,161.4 189.2,161.0 190.1,160.5 191.0,160.0 191.8,159.5 192.5,158.9 193.2,158.4 193.9,157.9 194.5,157.4 195.0,156.8 195.5,156.3 196.0,155.7 196.4,155.2 196.8,154.6 197.1,154.1 197.4,153.5 197.6,153.0 197.8,152.4 197.9,151.9 198.0,151.3 198.1,150.8 198.1,150.2 198.0,149.7 197.9,149.1 197.8,148.6 197.6,148.1 197.4,147.5 197.2,147.0 196.9,146.5 196.6,146.0 196.2,145.5 195.8,145.0 195.4,144.5 194.9,144.1 194.4,143.6 193.9,143.1 193.3,142.7 192.7,142.3 192.1,141.8 191.4,141.4 190.7,141.0 190.0,140.6 189.3,140.2 188.5,139.8 187.7,139.4 186.9,139.1 186.0,138.7 185.2,138.4 184.3,138.1 183.4,137.8 182.4,137.4 181.5,137.2 180.5,136.9 179.6,136.6 178.6,136.3 177.5,136.1 176.5,135.9 175.5,135.6 174.4,135.4 173.3,135.2 172.3,135.1 171.2,134.9 170.1,134.7 168.9,134.6 167.8,134.4 166.7,134.3 165.5,134.2 164.4,134.1 163.2,134.0 162.1,133.9 160.9,133.9 159.7,133.8 158.6,133.8 157.4,133.8 156.2,133.8 155.1,133.8 153.9,133.8 152.7,133.8 151.5,133.8 150.3,133.9 149.2,134.0 148.0,134.0 146.8,134.1 145.7,134.2 144.5,134.3 143.4,134.5 142.2,134.6 141.1,134.8 140.0,134.9 138.8,135.1 137.7,135.3 136.6,135.5 135.5,135.7 134.5,135.9 133.4,136.2 132.3,136.4 131.3,136.7 130.3,136.9 129.3,137.2 128.3,137.5 127.3,137.8 126.4,138.1 125.4,138.5 124.5,138.8 123.6,139.2 122.7,139.5 121.9,139.9 121.1,140.3 120.3,140.7 119.5,141.1 118.7,141.5 118.0,141.9 117.3,142.3 116.7,142.8 116.0,143.2 115.4,143.7 114.9,144.2 114.3,144.6 113.8,145.1 113.3,145.6 112.9,146.1 112.5,146.6 112.1,147.1 111.8,147.7 111.5,148.2 111.3,148.7 111.1,149.2 110.9,149.8 110.8,150.3 110.7,150.9 110.7,151.4 110.7,152.0 110.8,152.5 110.9,153.1 111.0,153.6 111.2,154.2 111.5,154.7 111.8,155.3 112.1,155.8 112.5,156.4 112.9,156.9 113.4,157.5 113.9,158.0 114.5,158.5 115.1,159.1 115.8,159.6 116.5,160.1 117.3,160.6 118.1,161.1 119.0,161.5" fill="#0c00ff"/><polygon points="120.4,160.7 121.4,161.2 122.4,161.6 123.4,162.0 124.5,162.4 125.6,162.8 126.7,163.2 127.9,163.6 129.1,163.9 130.4,164.2 131.7,164.5 133.0,164.8 134.4,165.1 135.8,165.4 137.2,165.6 138.7,165.8 140.1,166.0 141.6,166.2 143.1,166.3 144.6,166.5 146.2,166.6 147.7,166.7 149.3,166.7 150.9,166.8 152.4,166.8 154.0,166.8 155.6,166.8 157.1,166.7 158.7,166.6 160.3,166.5 161.8,166.4 163.4,166.3 164.9,166.1 166.4,166.0 167.9,165.8 169.4,165.5 170.8,165.3 172.3,165.0 173.7,164.8 175.0,164.5 176.4,164.2 177.7,163.8 179.0,163.5 180.2,163.1 181.4,162.7 182.6,162.3 183.7,161.9 184.8,161.5 185.9,161.1 186.9,160.6 187.8,160.2 188.7,159.7 189.6,159.2 190.5,158.7 191.2,158.2 192.0,157.7 192.7,157.2 193.3,156.7 193.9,156.2 194.5,155.6 195.0,155.1 195.4,154.6 195.9,154.0 196.2,153.5 196.5,153.0 196.8,152.4 197.0,151.9 197.2,151.3 197.4,150.8 197.5,150.3 197.5,149.7 197.5,149.2 197.5,148.7 197.4,148.1 197.3,147.6 197.1,147.1 196.9,146.6 196.7,146.1 196.4,145.6 196.1,145.1 195.7,144.6 195.3,144.1 194.9,143.6 194.4,143.2 193.9,142.7 193.4,142.3 192.8,141.8 192.2,141.4 191.6,141.0 191.0,140.6 190.3,140.2 189.6,139.8 188.9,139.4 188.1,139.0 187.3,138.6 186.5,138.3 185.7,137.9 184.8,137.6 183.9,137.3 183.1,137.0 182.1,136.7 181.2,136.4 180.2,136.1 179.3,135.9 178.3,135.6 177.3,135.4 176.3,135.1 175.2,134.9 174.2,134.7 173.1,134.5 172.1,134.3 171.0,134.2 169.9,134.0 168.8,133.9 167.7,133.7 166.6,133.6 165.4,133.5 164.3,133.4 163.2,133.3 162.0,133.2 160.9,133.2 159.7,133.1 158.5,133.1 157.4,133.1 156.2,133.1 155.1,133.1 153.9,133.1 152.7,133.1 151.6,133.1 150.4,133.2 149.2,133.3 148.1,133.3 146.9,133.4 145.8,133.5 144.6,133.6 143.5,133.8 142.4,133.9 141.2,134.0 140.1,134.2 139.0,134.4 137.9,134.6 136.8,134.8 135.8,135.0 134.7,135.2 133.6,135.4 132.6,135.7 131.6,135.9 130.6,136.2 129.6,136.5 128.6,136.7 127.6,137.0 126.7,137.4 125.8,137.7 124.9,138.0 124.0,138.4 123.1,138.7 122.3,139.1 121.5,139.5 120.7,139.8 119.9,140.2 119.2,140.6 118.5,141.1 117.8,141.5 117.1,141.9 116.5,142.4 115.9,142.8 115.4,143.3 114.8,143.7 114.3,144.2 113.9,144.7 113.4,145.2 113.0,145.7 112.7,146.2 112.4,146.7 112.1,147.2 111.9,147.7 111.7,148.2 111.5,148.8 111.4,149.3 111.3,149.8 111.3,150.4 111.3,150.9 111.4,151.5 111.5,152.0 111.6,152.5 111.8,153.1 112.1,153.6 112.3,154.2 112.7,154.7 113.1,155.2 113.5,155.8 114.0,156.3 114.5,156.8 115.1,157.3 115.7,157.8 116.4,158.3 117.1,158.8 117.8,159.3 118.7,159.8 119.5,160.3" fill="#0915ff"/><polygon points="120.9,159.4 121.8,159.9 122.8,160.3 123.8,160.7 124.9,161.1 126.0,161.5 127.1,161.8 128.3,162.2 129.5,162.5 130.8,162.8 132.1,163.1 133.4,163.4 134.7,163.7 136.1,163.9 137.5,164.2 138.9,164.4 140.4,164.6 141.8,164.7 143.3,164.9 144.8,165.0 146.3,165.1 147.8,165.2 149.4,165.3 150.9,165.3 152.5,165.3 154.0,165.3 155.6,165.3 157.1,165.3 158.7,165.2 160.2,165.1 161.7,165.0 163.2,164.9 164.8,164.7 166.2,164.5 167.7,164.3 169.2,164.1 170.6,163.9 172.0,163.6 173.4,163.4 174.7,163.1 176.1,162.8 177.4,162.4 178.6,162.1 179.8,161.8 181.0,161.4 182.2,161.0 183.3,160.6 184.4,160.2 185.4,159.8 186.4,159.3 187.4,158.9 188.3,158.4 189.1,157.9 190.0,157.5 190.7,157.0 191.5,156.5 192.2,156.0 192.8,155.5 193.4,155.0 193.9,154.5 194.4,153.9 194.9,153.4 195.3,152.9 195.7,152.4 196.0,151.8 196.3,151.3 196.5,150.8 196.7,150.3 196.8,149.7 196.9,149.2 197.0,148.7 197.0,148.2 196.9,147.6 196.8,147.1 196.7,146.6 196.6,146.1 196.4,145.6 196.1,145.1 195.9,144.6 195.5,144.1 195.2,143.7 194.8,143.2 194.4,142.7 193.9,142.3 193.5,141.8 192.9,141.4 192.4,140.9 191.8,140.5 191.2,140.1 190.6,139.7 189.9,139.3 189.2,138.9 188.5,138.6 187.7,138.2 186.9,137.8 186.1,137.5 185.3,137.1 184.5,136.8 183.6,136.5 182.7,136.2 181.8,135.9 180.9,135.6 180.0,135.4 179.0,135.1 178.0,134.9 177.0,134.6 176.0,134.4 175.0,134.2 174.0,134.0 172.9,133.8 171.9,133.6 170.8,133.4 169.7,133.3 168.6,133.1 167.5,133.0 166.4,132.9 165.3,132.8 164.2,132.7 163.1,132.6 161.9,132.5 160.8,132.5 159.7,132.4 158.5,132.4 157.4,132.4 156.2,132.4 155.1,132.4 153.9,132.4 152.8,132.4 151.6,132.4 150.5,132.5 149.3,132.6 148.2,132.6 147.0,132.7 145.9,132.8 144.8,132.9 143.6,133.0 142.5,133.2 141.4,133.3 140.3,133.5 139.2,133.6 138.1,133.8 137.0,134.0 136.0,134.2 134.9,134.4 133.9,134.7 132.9,134.9 131.8,135.2 130.8,135.4 129.9,135.7 128.9,136.0 128.0,136.3 127.0,136.6 126.1,136.9 125.2,137.2 124.4,137.6 123.5,137.9 122.7,138.3 121.9,138.6 121.1,139.0 120.3,139.4 119.6,139.8 118.9,140.2 118.2,140.6 117.6,141.0 117.0,141.5 116.4,141.9 115.8,142.4 115.3,142.8 114.8,143.3 114.4,143.8 114.0,144.2 113.6,144.7 113.2,145.2 112.9,145.7 112.7,146.2 112.4,146.7 112.2,147.2 112.1,147.8 112.0,148.3 111.9,148.8 111.9,149.3 111.9,149.8 111.9,150.4 112.1,150.9 112.2,151.4 112.4,152.0 112.6,152.5 112.9,153.0 113.3,153.5 113.6,154.1 114.1,154.6 114.5,155.1 115.1,155.6 115.6,156.1 116.3,156.6 116.9,157.1 117.6,157.6 118.4,158.1 119.2,158.5 120.0,159.0" fill="#082eff"/><polygon points="121.4,158.1 122.3,158.5 123.3,159.0 124.3,159.4 125.3,159.7 126.4,160.1 127.6,160.5 128.7,160.8 129.9,161.1 131.1,161.5 132.4,161.8 133.7,162.0 135.0,162.3 136.4,162.5 137.8,162.8 139.2,163.0 140.6,163.1 142.0,163.3 143.5,163.5 145.0,163.6 146.5,163.7 148.0,163.8 149.5,163.8 151.0,163.9 152.5,163.9 154.0,163.9 155.6,163.9 157.1,163.8 158.6,163.8 160.1,163.7 161.6,163.6 163.1,163.4 164.6,163.3 166.1,163.1 167.5,162.9 169.0,162.7 170.4,162.5 171.8,162.2 173.1,162.0 174.5,161.7 175.8,161.4 177.0,161.1 178.3,160.7 179.5,160.4 180.7,160.0 181.8,159.7 182.9,159.3 184.0,158.9 185.0,158.5 186.0,158.0 186.9,157.6 187.8,157.1 188.7,156.7 189.5,156.2 190.2,155.8 191.0,155.3 191.7,154.8 192.3,154.3 192.9,153.8 193.4,153.3 193.9,152.8 194.4,152.3 194.8,151.8 195.1,151.2 195.4,150.7 195.7,150.2 195.9,149.7 196.1,149.2 196.3,148.7 196.4,148.1 196.4,147.6 196.4,147.1 196.4,146.6 196.3,146.1 196.2,145.6 196.0,145.1 195.9,144.6 195.6,144.1 195.4,143.7 195.0,143.2 194.7,142.7 194.3,142.3 193.9,141.8 193.5,141.4 193.0,140.9 192.5,140.5 191.9,140.1 191.4,139.7 190.8,139.3 190.1,138.9 189.5,138.5 188.8,138.1 188.1,137.7 187.3,137.4 186.6,137.0 185.8,136.7 185.0,136.3 184.1,136.0 183.3,135.7 182.4,135.4 181.5,135.1 180.6,134.9 179.7,134.6 178.7,134.3 177.8,134.1 176.8,133.9 175.8,133.6 174.8,133.4 173.8,133.2 172.7,133.1 171.7,132.9 170.6,132.7 169.6,132.6 168.5,132.4 167.4,132.3 166.3,132.2 165.2,132.1 164.1,132.0 163.0,131.9 161.9,131.8 160.7,131.8 159.6,131.7 158.5,131.7 157.3,131.7 156.2,131.7 155.1,131.7 153.9,131.7 152.8,131.7 151.6,131.7 150.5,131.8 149.4,131.8 148.2,131.9 147.1,132.0 146.0,132.1 144.9,132.2 143.8,132.3 142.7,132.5 141.6,132.6 140.5,132.7 139.4,132.9 138.3,133.1 137.2,133.3 136.2,133.5 135.2,133.7 134.1,133.9 133.1,134.2 132.1,134.4 131.1,134.7 130.2,134.9 129.2,135.2 128.3,135.5 127.4,135.8 126.5,136.1 125.6,136.4 124.7,136.7 123.9,137.1 123.1,137.4 122.3,137.8 121.5,138.2 120.8,138.6 120.0,138.9 119.4,139.3 118.7,139.7 118.1,140.2 117.4,140.6 116.9,141.0 116.3,141.5 115.8,141.9 115.3,142.4 114.9,142.8 114.5,143.3 114.1,143.8 113.8,144.3 113.5,144.7 113.2,145.2 113.0,145.7 112.8,146.2 112.6,146.7 112.5,147.2 112.5,147.7 112.4,148.3 112.5,148.8 112.5,149.3 112.6,149.8 112.8,150.3 113.0,150.8 113.2,151.4 113.5,151.9 113.8,152.4 114.2,152.9 114.6,153.4 115.1,153.9 115.6,154.4 116.2,154.9 116.8,155.4 117.5,155.9 118.2,156.3 118.9,156.8 119.7,157.2 120.5,157.7" fill="#0747ff"/><polygon points="121.9,156.8 124.0,157.7 126.2,158.6 128.7,159.4 131.4,160.1 134.2,160.7 137.1,161.2 140.2,161.7 143.3,162.0 146.6,162.3 149.9,162.4 153.2,162.5 156.6,162.4 159.9,162.2 163.2,162.0 166.4,161.6 169.5,161.2 172.6,160.6 175.5,160.0 178.2,159.3 180.8,158.5 183.2,157.7 185.4,156.8 187.4,155.8 189.3,154.8 190.9,153.8 192.2,152.7 193.4,151.6 194.3,150.5 195.0,149.4 195.5,148.3 195.8,147.1 195.9,146.0 195.8,144.9 195.4,143.9 194.9,142.8 194.2,141.8 193.3,140.8 192.3,139.8 191.1,138.9 189.8,138.0 188.3,137.2 186.7,136.4 185.0,135.7 183.2,135.0 181.2,134.4 179.2,133.8 177.1,133.2 174.9,132.8 172.7,132.3 170.3,132.0 168.0,131.6 165.6,131.4 163.1,131.2 160.7,131.0 158.2,131.0 155.7,130.9 153.2,131.0 150.7,131.1 148.2,131.2 145.7,131.4 143.3,131.7 140.9,132.0 138.5,132.3 136.2,132.8 133.9,133.3 131.7,133.8 129.6,134.4 127.6,135.0 125.6,135.7 123.8,136.5 122.1,137.2 120.5,138.1 119.0,139.0 117.7,139.9 116.5,140.8 115.4,141.8 114.6,142.9 113.9,143.9 113.4,145.0 113.1,146.1 113.0,147.2 113.1,148.3 113.4,149.4 114.0,150.6 114.7,151.7 115.7,152.8 116.9,153.8 118.4,154.9 120.0,155.9" fill="#065fff"/><polygon points="122.4,155.5 124.4,156.4 126.7,157.2 129.1,158.0 131.7,158.7 134.5,159.3 137.4,159.8 140.4,160.2 143.5,160.6 146.7,160.8 150.0,161.0 153.3,161.0 156.6,161.0 159.8,160.8 163.1,160.6 166.2,160.2 169.3,159.8 172.3,159.3 175.2,158.7 177.9,158.0 180.4,157.2 182.8,156.4 185.0,155.5 187.0,154.6 188.8,153.6 190.4,152.6 191.7,151.5 192.9,150.5 193.8,149.4 194.5,148.3 195.0,147.2 195.3,146.1 195.4,145.0 195.2,143.9 194.9,142.9 194.4,141.8 193.7,140.8 192.9,139.9 191.9,138.9 190.7,138.0 189.4,137.2 187.9,136.4 186.3,135.6 184.6,134.9 182.8,134.2 180.9,133.6 178.9,133.0 176.8,132.5 174.7,132.0 172.5,131.6 170.2,131.2 167.8,130.9 165.5,130.7 163.1,130.5 160.6,130.3 158.2,130.2 155.7,130.2 153.2,130.2 150.7,130.3 148.3,130.5 145.8,130.7 143.4,130.9 141.0,131.2 138.7,131.6 136.4,132.0 134.2,132.5 132.0,133.0 129.9,133.6 127.9,134.2 126.0,134.9 124.2,135.6 122.5,136.4 120.9,137.2 119.4,138.1 118.1,139.0 117.0,139.9 115.9,140.9 115.1,141.9 114.4,142.9 113.9,144.0 113.7,145.1 113.6,146.1 113.7,147.2 114.0,148.3 114.5,149.4 115.3,150.5 116.3,151.6 117.5,152.6 118.9,153.6 120.5,154.6" fill="#0577ff"/><polygon points="122.8,154.3 124.9,155.1 127.1,155.9 129.5,156.7 132.1,157.3 134.8,157.9 137.6,158.4 140.6,158.8 143.7,159.2 146.8,159.4 150.1,159.6 153.3,159.6 156.5,159.5 159.8,159.4 163.0,159.2 166.1,158.8 169.1,158.4 172.1,157.9 174.9,157.3 177.6,156.6 180.1,155.9 182.4,155.1 184.6,154.2 186.6,153.3 188.3,152.4 189.9,151.4 191.2,150.3 192.4,149.3 193.3,148.2 194.0,147.2 194.5,146.1 194.8,145.0 194.8,144.0 194.7,142.9 194.4,141.9 193.9,140.9 193.3,139.9 192.4,139.0 191.4,138.0 190.3,137.2 189.0,136.3 187.5,135.5 186.0,134.8 184.3,134.0 182.5,133.4 180.6,132.8 178.7,132.2 176.6,131.7 174.5,131.2 172.3,130.8 170.0,130.5 167.7,130.2 165.4,129.9 163.0,129.7 160.6,129.6 158.1,129.5 155.7,129.5 153.2,129.5 150.8,129.6 148.4,129.7 145.9,129.9 143.6,130.2 141.2,130.5 138.9,130.8 136.6,131.3 134.4,131.7 132.3,132.2 130.2,132.8 128.2,133.4 126.3,134.1 124.5,134.8 122.9,135.6 121.3,136.4 119.9,137.2 118.6,138.1 117.4,139.0 116.4,140.0 115.6,140.9 115.0,141.9 114.5,143.0 114.2,144.0 114.1,145.1 114.2,146.2 114.5,147.2 115.1,148.3 115.8,149.3 116.8,150.4 118.0,151.4 119.4,152.4 121.0,153.4" fill="#048fff"/><polygon points="123.3,153.0 125.3,153.8 127.5,154.6 129.9,155.3 132.4,156.0 135.1,156.5 137.9,157.0 140.8,157.4 143.9,157.8 147.0,158.0 150.1,158.1 153.3,158.2 156.5,158.1 159.7,158.0 162.8,157.7 165.9,157.4 168.9,157.0 171.8,156.5 174.6,155.9 177.2,155.3 179.7,154.6 182.0,153.8 184.2,152.9 186.1,152.0 187.9,151.1 189.4,150.1 190.7,149.2 191.9,148.1 192.8,147.1 193.5,146.1 194.0,145.0 194.2,144.0 194.3,142.9 194.2,141.9 193.9,140.9 193.4,139.9 192.8,139.0 192.0,138.0 191.0,137.1 189.8,136.3 188.6,135.4 187.1,134.7 185.6,133.9 184.0,133.2 182.2,132.6 180.3,132.0 178.4,131.4 176.3,130.9 174.2,130.5 172.1,130.1 169.8,129.7 167.6,129.4 165.2,129.2 162.9,129.0 160.5,128.9 158.1,128.8 155.7,128.8 153.3,128.8 150.8,128.9 148.4,129.0 146.1,129.2 143.7,129.4 141.4,129.7 139.1,130.1 136.8,130.5 134.7,130.9 132.5,131.4 130.5,132.0 128.6,132.6 126.7,133.3 124.9,134.0 123.3,134.7 121.7,135.5 120.3,136.3 119.0,137.2 117.9,138.1 116.9,139.0 116.1,140.0 115.5,140.9 115.0,142.0 114.7,143.0 114.7,144.0 114.8,145.1 115.1,146.1 115.6,147.2 116.4,148.2 117.3,149.2 118.5,150.2 119.9,151.2 121.5,152.1" fill="#03a7ff"/><polygon points="123.8,151.7 125.7,152.5 127.9,153.3 130.2,154.0 132.7,154.6 135.4,155.2 138.2,155.6 141.1,156.0 144.0,156.4 147.1,156.6 150.2,156.7 153.4,156.8 156.5,156.7 159.6,156.6 162.7,156.3 165.8,156.0 168.7,155.6 171.6,155.1 174.3,154.6 176.9,153.9 179.4,153.2 181.6,152.5 183.7,151.7 185.7,150.8 187.4,149.9 188.9,148.9 190.2,148.0 191.4,147.0 192.3,146.0 193.0,144.9 193.4,143.9 193.7,142.9 193.8,141.9 193.7,140.9 193.4,139.9 192.9,138.9 192.3,138.0 191.5,137.1 190.5,136.2 189.4,135.4 188.1,134.6 186.8,133.8 185.2,133.1 183.6,132.4 181.9,131.8 180.0,131.2 178.1,130.6 176.1,130.1 174.0,129.7 171.9,129.3 169.7,129.0 167.4,128.7 165.1,128.4 162.8,128.2 160.4,128.1 158.1,128.0 155.7,128.0 153.3,128.0 150.9,128.1 148.5,128.3 146.2,128.4 143.8,128.7 141.5,129.0 139.3,129.3 137.1,129.7 134.9,130.2 132.8,130.7 130.8,131.2 128.9,131.8 127.0,132.4 125.3,133.1 123.7,133.8 122.1,134.6 120.7,135.4 119.5,136.3 118.4,137.1 117.4,138.1 116.6,139.0 116.0,140.0 115.5,140.9 115.3,141.9 115.2,143.0 115.3,144.0 115.6,145.0 116.2,146.0 116.9,147.0 117.9,148.0 119.0,149.0 120.4,149.9 122.0,150.8" fill="#01bfff"/><polygon points="124.2,150.4 126.2,151.2 128.3,151.9 130.6,152.6 133.1,153.2 135.7,153.8 138.4,154.3 141.3,154.6 144.2,154.9 147.2,155.2 150.3,155.3 153.4,155.3 156.5,155.3 159.6,155.2 162.6,154.9 165.6,154.6 168.5,154.2 171.3,153.8 174.0,153.2 176.6,152.6 179.0,151.9 181.3,151.2 183.3,150.4 185.2,149.5 186.9,148.6 188.4,147.7 189.7,146.8 190.8,145.8 191.7,144.8 192.4,143.8 192.9,142.8 193.2,141.8 193.3,140.8 193.2,139.9 192.9,138.9 192.5,138.0 191.8,137.1 191.0,136.2 190.1,135.3 189.0,134.5 187.7,133.7 186.4,132.9 184.9,132.2 183.3,131.6 181.6,130.9 179.7,130.4 177.8,129.8 175.9,129.3 173.8,128.9 171.7,128.5 169.5,128.2 167.3,127.9 165.0,127.7 162.7,127.5 160.4,127.4 158.0,127.3 155.7,127.3 153.3,127.3 151.0,127.4 148.6,127.5 146.3,127.7 144.0,127.9 141.7,128.2 139.5,128.5 137.3,128.9 135.1,129.4 133.1,129.9 131.1,130.4 129.2,131.0 127.4,131.6 125.7,132.3 124.0,133.0 122.5,133.7 121.2,134.5 119.9,135.3 118.8,136.2 117.9,137.1 117.1,138.0 116.5,139.0 116.1,139.9 115.8,140.9 115.7,141.9 115.9,142.9 116.2,143.9 116.7,144.9 117.5,145.9 118.4,146.8 119.6,147.8 120.9,148.7 122.5,149.6" fill="#00d7ff"/><polygon points="124.7,149.1 126.6,149.9 128.7,150.6 131.0,151.3 133.4,151.9 136.0,152.4 138.7,152.9 141.5,153.3 144.4,153.5 147.4,153.8 150.4,153.9 153.4,153.9 156.5,153.9 159.5,153.8 162.5,153.5 165.5,153.2 168.3,152.9 171.1,152.4 173.7,151.9 176.3,151.3 178.7,150.6 180.9,149.9 182.9,149.1 184.8,148.3 186.5,147.4 188.0,146.5 189.3,145.6 190.4,144.6 191.2,143.7 191.9,142.7 192.4,141.7 192.7,140.8 192.8,139.8 192.7,138.8 192.4,137.9 192.0,137.0 191.4,136.1 190.6,135.2 189.6,134.4 188.6,133.6 187.3,132.8 186.0,132.1 184.5,131.4 182.9,130.7 181.2,130.1 179.4,129.5 177.6,129.0 175.6,128.6 173.6,128.1 171.5,127.8 169.3,127.4 167.1,127.1 164.9,126.9 162.6,126.7 160.3,126.6 158.0,126.5 155.7,126.5 153.3,126.5 151.0,126.6 148.7,126.8 146.4,126.9 144.1,127.2 141.9,127.4 139.6,127.8 137.5,128.2 135.4,128.6 133.4,129.1 131.4,129.6 129.5,130.1 127.7,130.8 126.0,131.4 124.4,132.1 123.0,132.8 121.6,133.6 120.4,134.4 119.3,135.3 118.4,136.1 117.6,137.0 117.0,138.0 116.6,138.9 116.3,139.9 116.3,140.8 116.4,141.8 116.7,142.8 117.3,143.7 118.0,144.7 118.9,145.6 120.1,146.6 121.4,147.5 123.0,148.3" fill="#00e1f1"/><polygon points="125.1,147.9 127.0,148.6 129.1,149.3 131.4,150.0 133.8,150.5 136.3,151.1 138.9,151.5 141.7,151.9 144.6,152.2 147.5,152.4 150.5,152.5 153.4,152.5 156.5,152.5 159.4,152.4 162.4,152.1 165.3,151.8 168.1,151.5 170.9,151.0 173.5,150.5 176.0,149.9 178.3,149.3 180.5,148.6 182.5,147.8 184.4,147.0 186.0,146.2 187.5,145.3 188.8,144.4 189.9,143.5 190.7,142.5 191.4,141.6 191.9,140.6 192.2,139.7 192.3,138.8 192.2,137.8 191.9,136.9 191.5,136.0 190.9,135.1 190.1,134.3 189.2,133.5 188.1,132.7 186.9,131.9 185.6,131.2 184.1,130.5 182.6,129.9 180.9,129.3 179.2,128.7 177.3,128.2 175.4,127.8 173.4,127.3 171.3,127.0 169.2,126.7 167.0,126.4 164.8,126.2 162.5,126.0 160.3,125.9 158.0,125.8 155.7,125.8 153.4,125.8 151.1,125.9 148.8,126.0 146.5,126.2 144.2,126.4 142.0,126.7 139.8,127.0 137.7,127.4 135.6,127.8 133.6,128.2 131.7,128.8 129.8,129.3 128.1,129.9 126.4,130.6 124.8,131.2 123.4,132.0 122.0,132.7 120.8,133.5 119.8,134.3 118.9,135.2 118.1,136.1 117.5,137.0 117.1,137.9 116.9,138.8 116.8,139.7 117.0,140.7 117.3,141.6 117.8,142.6 118.5,143.5 119.5,144.4 120.6,145.3 121.9,146.2 123.4,147.1" fill="#00e1d8"/><polygon points="125.6,146.6 127.5,147.3 129.5,148.0 131.7,148.6 134.1,149.2 136.6,149.7 139.2,150.1 141.9,150.5 144.7,150.8 147.6,151.0 150.5,151.1 153.5,151.1 156.4,151.1 159.4,151.0 162.3,150.7 165.1,150.5 167.9,150.1 170.6,149.7 173.2,149.2 175.6,148.6 178.0,148.0 180.1,147.3 182.1,146.5 183.9,145.8 185.6,144.9 187.0,144.1 188.3,143.2 189.4,142.3 190.2,141.4 190.9,140.5 191.4,139.6 191.7,138.6 191.8,137.7 191.7,136.8 191.4,135.9 191.0,135.0 190.4,134.2 189.7,133.3 188.8,132.5 187.7,131.8 186.5,131.0 185.2,130.3 183.8,129.7 182.2,129.0 180.6,128.5 178.9,127.9 177.0,127.4 175.1,127.0 173.1,126.6 171.1,126.2 169.0,125.9 166.9,125.6 164.7,125.4 162.5,125.2 160.2,125.1 157.9,125.0 155.7,125.0 153.4,125.0 151.1,125.1 148.8,125.2 146.6,125.4 144.4,125.6 142.2,125.9 140.0,126.2 137.9,126.6 135.9,127.0 133.9,127.4 132.0,127.9 130.2,128.5 128.4,129.1 126.8,129.7 125.2,130.4 123.8,131.1 122.5,131.8 121.3,132.6 120.3,133.4 119.4,134.2 118.6,135.1 118.1,135.9 117.6,136.8 117.4,137.8 117.4,138.7 117.5,139.6 117.8,140.5 118.3,141.4 119.1,142.4 120.0,143.3 121.1,144.1 122.4,145.0 123.9,145.8" fill="#00e2c0"/><polygon points="126.1,145.3 127.9,146.0 129.9,146.7 132.1,147.3 134.4,147.8 136.9,148.3 139.5,148.7 142.1,149.1 144.9,149.4 147.7,149.6 150.6,149.7 153.5,149.7 156.4,149.7 159.3,149.6 162.2,149.4 165.0,149.1 167.7,148.7 170.4,148.3 172.9,147.8 175.3,147.3 177.6,146.6 179.7,146.0 181.7,145.3 183.5,144.5 185.1,143.7 186.6,142.9 187.8,142.0 188.9,141.1 189.7,140.3 190.4,139.4 190.9,138.5 191.2,137.6 191.3,136.7 191.2,135.8 190.9,134.9 190.5,134.0 189.9,133.2 189.2,132.4 188.3,131.6 187.3,130.9 186.1,130.1 184.8,129.4 183.4,128.8 181.9,128.2 180.3,127.6 178.6,127.1 176.8,126.6 174.9,126.2 172.9,125.8 170.9,125.4 168.8,125.1 166.7,124.8 164.6,124.6 162.4,124.5 160.2,124.3 157.9,124.3 155.7,124.2 153.4,124.3 151.2,124.3 148.9,124.5 146.7,124.6 144.5,124.8 142.3,125.1 140.2,125.4 138.1,125.8 136.1,126.2 134.2,126.6 132.3,127.1 130.5,127.6 128.8,128.2 127.1,128.8 125.6,129.5 124.2,130.2 122.9,130.9 121.8,131.6 120.7,132.4 119.9,133.2 119.1,134.1 118.6,134.9 118.2,135.8 117.9,136.7 117.9,137.6 118.0,138.5 118.4,139.4 118.9,140.3 119.6,141.2 120.5,142.1 121.6,142.9 122.9,143.7 124.4,144.5" fill="#00e2a8"/><polygon points="126.5,144.0 128.3,144.7 130.3,145.4 132.5,146.0 134.8,146.5 137.2,147.0 139.7,147.4 142.3,147.7 145.1,148.0 147.9,148.2 150.7,148.3 153.5,148.3 156.4,148.3 159.3,148.2 162.1,148.0 164.8,147.7 167.5,147.4 170.1,146.9 172.6,146.5 175.0,145.9 177.3,145.3 179.4,144.7 181.3,144.0 183.1,143.2 184.7,142.5 186.1,141.7 187.3,140.8 188.4,140.0 189.2,139.1 189.9,138.2 190.4,137.4 190.6,136.5 190.8,135.6 190.7,134.7 190.4,133.9 190.0,133.0 189.5,132.2 188.7,131.4 187.9,130.7 186.9,129.9 185.7,129.2 184.4,128.6 183.1,127.9 181.6,127.3 180.0,126.8 178.3,126.3 176.5,125.8 174.6,125.3 172.7,125.0 170.7,124.6 168.7,124.3 166.6,124.1 164.4,123.8 162.3,123.7 160.1,123.6 157.9,123.5 155.7,123.5 153.4,123.5 151.2,123.6 149.0,123.7 146.8,123.9 144.6,124.1 142.5,124.3 140.4,124.6 138.4,125.0 136.4,125.4 134.4,125.8 132.6,126.3 130.8,126.8 129.1,127.4 127.5,128.0 126.0,128.6 124.6,129.3 123.4,130.0 122.2,130.7 121.2,131.5 120.4,132.3 119.6,133.1 119.1,133.9 118.7,134.8 118.5,135.6 118.4,136.5 118.6,137.4 118.9,138.3 119.4,139.2 120.1,140.0 121.0,140.9 122.1,141.7 123.4,142.5 124.9,143.3" fill="#00e290"/><polygon points="127.0,142.7 128.8,143.4 130.7,144.0 132.8,144.6 135.1,145.1 137.5,145.6 140.0,146.0 142.6,146.3 145.2,146.6 148.0,146.8 150.8,146.9 153.6,146.9 156.4,146.9 159.2,146.8 162.0,146.6 164.7,146.3 167.3,146.0 169.9,145.6 172.4,145.1 174.7,144.6 176.9,144.0 179.0,143.4 180.9,142.7 182.6,142.0 184.2,141.2 185.6,140.5 186.8,139.6 187.9,138.8 188.7,138.0 189.4,137.1 189.8,136.3 190.1,135.4 190.2,134.5 190.2,133.7 189.9,132.9 189.5,132.1 189.0,131.3 188.3,130.5 187.4,129.7 186.4,129.0 185.3,128.3 184.0,127.7 182.7,127.1 181.2,126.5 179.6,125.9 178.0,125.4 176.2,125.0 174.4,124.5 172.5,124.1 170.5,123.8 168.5,123.5 166.4,123.3 164.3,123.1 162.2,122.9 160.0,122.8 157.9,122.7 155.7,122.7 153.5,122.7 151.3,122.8 149.1,122.9 146.9,123.1 144.8,123.3 142.7,123.5 140.6,123.8 138.6,124.2 136.6,124.5 134.7,125.0 132.9,125.4 131.1,126.0 129.5,126.5 127.9,127.1 126.4,127.7 125.0,128.4 123.8,129.1 122.7,129.8 121.7,130.5 120.8,131.3 120.1,132.1 119.6,132.9 119.2,133.7 119.0,134.6 119.0,135.4 119.1,136.3 119.5,137.2 120.0,138.0 120.7,138.9 121.6,139.7 122.6,140.5 123.9,141.3 125.3,142.0" fill="#00e378"/><polygon points="127.4,141.5 129.2,142.1 131.1,142.7 133.2,143.3 135.4,143.8 137.8,144.2 140.2,144.6 142.8,144.9 145.4,145.2 148.1,145.4 150.8,145.5 153.6,145.5 156.4,145.5 159.1,145.4 161.9,145.2 164.5,144.9 167.1,144.6 169.7,144.2 172.1,143.8 174.4,143.3 176.6,142.7 178.6,142.1 180.5,141.4 182.2,140.7 183.8,140.0 185.1,139.2 186.3,138.4 187.4,137.6 188.2,136.8 188.8,136.0 189.3,135.2 189.6,134.3 189.7,133.5 189.7,132.7 189.4,131.9 189.1,131.1 188.5,130.3 187.8,129.5 187.0,128.8 186.0,128.1 184.9,127.4 183.7,126.8 182.3,126.2 180.9,125.6 179.3,125.1 177.7,124.6 175.9,124.1 174.1,123.7 172.3,123.3 170.3,123.0 168.3,122.7 166.3,122.5 164.2,122.3 162.1,122.1 160.0,122.0 157.8,121.9 155.7,121.9 153.5,121.9 151.3,122.0 149.2,122.1 147.0,122.3 144.9,122.5 142.8,122.7 140.8,123.0 138.8,123.4 136.9,123.7 135.0,124.1 133.2,124.6 131.5,125.1 129.8,125.6 128.3,126.2 126.8,126.8 125.5,127.5 124.2,128.1 123.1,128.8 122.2,129.6 121.3,130.3 120.7,131.1 120.1,131.9 119.8,132.7 119.6,133.5 119.5,134.4 119.7,135.2 120.0,136.0 120.5,136.9 121.2,137.7 122.1,138.5 123.2,139.3 124.4,140.0 125.8,140.8" fill="#00e360"/><polygon points="127.9,140.2 129.6,140.8 131.5,141.4 133.6,142.0 135.8,142.4 138.1,142.9 140.5,143.3 143.0,143.6 145.6,143.8 148.2,144.0 150.9,144.1 153.6,144.1 156.4,144.1 159.1,144.0 161.8,143.8 164.4,143.6 166.9,143.2 169.4,142.9 171.8,142.4 174.1,141.9 176.2,141.4 178.2,140.8 180.1,140.2 181.8,139.5 183.3,138.8 184.7,138.0 185.8,137.3 186.9,136.5 187.7,135.7 188.3,134.9 188.8,134.0 189.1,133.2 189.2,132.4 189.2,131.6 188.9,130.8 188.6,130.1 188.0,129.3 187.3,128.6 186.5,127.9 185.6,127.2 184.5,126.5 183.3,125.9 181.9,125.3 180.5,124.7 179.0,124.2 177.4,123.7 175.7,123.3 173.9,122.9 172.0,122.5 170.1,122.2 168.2,121.9 166.1,121.7 164.1,121.5 162.0,121.3 159.9,121.2 157.8,121.2 155.7,121.1 153.5,121.2 151.4,121.2 149.3,121.3 147.2,121.5 145.1,121.7 143.0,121.9 141.0,122.2 139.0,122.5 137.1,122.9 135.3,123.3 133.5,123.8 131.8,124.2 130.2,124.8 128.6,125.3 127.2,125.9 125.9,126.5 124.7,127.2 123.6,127.9 122.7,128.6 121.8,129.3 121.2,130.1 120.7,130.9 120.3,131.7 120.1,132.5 120.1,133.3 120.2,134.1 120.6,134.9 121.1,135.7 121.8,136.5 122.6,137.3 123.7,138.1 124.9,138.8 126.3,139.5" fill="#00e348"/><polygon points="128.4,138.9 130.1,139.5 131.9,140.1 134.0,140.6 136.1,141.1 138.4,141.5 140.7,141.9 143.2,142.2 145.8,142.4 148.4,142.6 151.0,142.7 153.7,142.7 156.3,142.7 159.0,142.6 161.6,142.4 164.2,142.2 166.7,141.9 169.2,141.5 171.5,141.1 173.8,140.6 175.9,140.1 177.8,139.5 179.7,138.9 181.3,138.2 182.8,137.5 184.2,136.8 185.3,136.1 186.3,135.3 187.2,134.5 187.8,133.7 188.3,132.9 188.6,132.2 188.7,131.4 188.6,130.6 188.4,129.8 188.1,129.1 187.5,128.3 186.9,127.6 186.1,126.9 185.1,126.2 184.0,125.6 182.8,125.0 181.5,124.4 180.1,123.9 178.6,123.4 177.0,122.9 175.4,122.5 173.6,122.1 171.8,121.7 169.9,121.4 168.0,121.1 166.0,120.9 164.0,120.7 161.9,120.5 159.9,120.4 157.8,120.4 155.7,120.4 153.5,120.4 151.4,120.4 149.3,120.6 147.3,120.7 145.2,120.9 143.2,121.1 141.2,121.4 139.3,121.7 137.4,122.1 135.6,122.5 133.8,122.9 132.1,123.4 130.5,123.9 129.0,124.4 127.6,125.0 126.3,125.6 125.1,126.3 124.1,126.9 123.1,127.6 122.4,128.4 121.7,129.1 121.2,129.9 120.8,130.6 120.7,131.4 120.6,132.2 120.8,133.0 121.1,133.8 121.6,134.6 122.3,135.3 123.2,136.1 124.2,136.8 125.4,137.6 126.8,138.2" fill="#00e430"/><polygon points="128.8,137.6 130.5,138.2 132.4,138.8 134.3,139.3 136.4,139.8 138.7,140.2 141.0,140.5 143.4,140.8 145.9,141.0 148.5,141.2 151.1,141.3 153.7,141.3 156.3,141.3 158.9,141.2 161.5,141.0 164.1,140.8 166.5,140.5 168.9,140.1 171.2,139.7 173.4,139.3 175.5,138.8 177.4,138.2 179.2,137.6 180.9,137.0 182.4,136.3 183.7,135.6 184.8,134.9 185.8,134.1 186.6,133.4 187.3,132.6 187.7,131.8 188.0,131.1 188.1,130.3 188.1,129.5 187.9,128.8 187.5,128.1 187.0,127.3 186.4,126.6 185.6,126.0 184.7,125.3 183.6,124.7 182.4,124.1 181.2,123.5 179.8,123.0 178.3,122.5 176.7,122.0 175.1,121.6 173.4,121.2 171.6,120.9 169.7,120.6 167.8,120.3 165.8,120.1 163.9,119.9 161.8,119.8 159.8,119.7 157.7,119.6 155.7,119.6 153.6,119.6 151.5,119.7 149.4,119.8 147.4,119.9 145.4,120.1 143.4,120.3 141.4,120.6 139.5,120.9 137.6,121.3 135.9,121.6 134.1,122.1 132.5,122.5 130.9,123.0 129.4,123.6 128.0,124.1 126.8,124.7 125.6,125.3 124.6,126.0 123.6,126.7 122.9,127.4 122.2,128.1 121.7,128.8 121.4,129.6 121.2,130.3 121.2,131.1 121.4,131.9 121.7,132.6 122.2,133.4 122.9,134.2 123.7,134.9 124.7,135.6 125.9,136.3 127.3,137.0" fill="#00e419"/><polygon points="129.3,136.3 131.0,136.9 132.8,137.5 134.7,138.0 136.8,138.4 139.0,138.8 141.3,139.1 143.6,139.4 146.1,139.6 148.6,139.8 151.2,139.9 153.7,139.9 156.3,139.9 158.9,139.8 161.4,139.6 163.9,139.4 166.3,139.1 168.7,138.8 171.0,138.4 173.1,137.9 175.1,137.4 177.1,136.9 178.8,136.3 180.4,135.7 181.9,135.0 183.2,134.4 184.3,133.7 185.3,132.9 186.1,132.2 186.7,131.5 187.2,130.7 187.5,130.0 187.6,129.2 187.6,128.5 187.4,127.8 187.0,127.0 186.5,126.3 185.9,125.7 185.1,125.0 184.2,124.4 183.2,123.8 182.0,123.2 180.8,122.6 179.4,122.1 178.0,121.6 176.4,121.2 174.8,120.8 173.1,120.4 171.3,120.1 169.5,119.8 167.6,119.5 165.7,119.3 163.7,119.1 161.7,119.0 159.7,118.9 157.7,118.8 155.6,118.8 153.6,118.8 151.6,118.9 149.5,119.0 147.5,119.1 145.5,119.3 143.5,119.5 141.6,119.8 139.7,120.1 137.9,120.4 136.1,120.8 134.4,121.2 132.8,121.7 131.3,122.2 129.8,122.7 128.5,123.2 127.2,123.8 126.1,124.4 125.0,125.0 124.1,125.7 123.4,126.4 122.8,127.1 122.3,127.8 122.0,128.5 121.8,129.3 121.8,130.0 121.9,130.8 122.2,131.5 122.7,132.2 123.4,133.0 124.3,133.7 125.3,134.4 126.4,135.1 127.8,135.7" fill="#11e513"/><polygon points="129.8,135.1 131.4,135.6 133.2,136.1 135.1,136.6 137.1,137.1 139.3,137.4 141.5,137.8 143.9,138.0 146.3,138.3 148.7,138.4 151.2,138.5 153.8,138.5 156.3,138.5 158.8,138.4 161.3,138.3 163.8,138.0 166.1,137.8 168.4,137.4 170.7,137.0 172.8,136.6 174.8,136.1 176.7,135.6 178.4,135.0 180.0,134.4 181.4,133.8 182.7,133.1 183.8,132.5 184.8,131.8 185.6,131.1 186.2,130.3 186.6,129.6 186.9,128.9 187.1,128.2 187.0,127.4 186.8,126.7 186.5,126.0 186.0,125.4 185.4,124.7 184.6,124.1 183.7,123.4 182.7,122.8 181.6,122.3 180.4,121.8 179.0,121.2 177.6,120.8 176.1,120.3 174.5,119.9 172.8,119.6 171.1,119.2 169.3,118.9 167.4,118.7 165.5,118.5 163.6,118.3 161.6,118.2 159.7,118.1 157.7,118.0 155.6,118.0 153.6,118.0 151.6,118.1 149.6,118.2 147.6,118.3 145.7,118.5 143.7,118.7 141.8,119.0 140.0,119.3 138.2,119.6 136.4,120.0 134.8,120.4 133.2,120.8 131.7,121.3 130.2,121.8 128.9,122.3 127.7,122.9 126.5,123.5 125.5,124.1 124.7,124.7 123.9,125.4 123.3,126.1 122.8,126.8 122.5,127.5 122.4,128.2 122.3,128.9 122.5,129.6 122.8,130.4 123.3,131.1 124.0,131.8 124.8,132.5 125.8,133.2 127.0,133.8 128.3,134.5" fill="#26e511"/><polygon points="130.3,133.8 131.9,134.3 133.6,134.8 135.5,135.3 137.5,135.7 139.6,136.1 141.8,136.4 144.1,136.7 146.5,136.9 148.9,137.0 151.3,137.1 153.8,137.1 156.3,137.1 158.7,137.0 161.2,136.9 163.6,136.7 165.9,136.4 168.2,136.1 170.4,135.7 172.5,135.3 174.4,134.8 176.3,134.3 178.0,133.7 179.5,133.2 180.9,132.6 182.2,131.9 183.3,131.3 184.2,130.6 185.0,129.9 185.6,129.2 186.1,128.5 186.4,127.8 186.5,127.1 186.5,126.4 186.3,125.7 186.0,125.0 185.5,124.4 184.9,123.7 184.1,123.1 183.3,122.5 182.3,121.9 181.2,121.4 180.0,120.9 178.6,120.4 177.2,119.9 175.8,119.5 174.2,119.1 172.5,118.7 170.8,118.4 169.1,118.1 167.2,117.9 165.4,117.7 163.5,117.5 161.6,117.4 159.6,117.3 157.6,117.2 155.6,117.2 153.7,117.2 151.7,117.3 149.7,117.4 147.7,117.5 145.8,117.7 143.9,117.9 142.0,118.1 140.2,118.4 138.5,118.7 136.7,119.1 135.1,119.5 133.5,119.9 132.0,120.4 130.6,120.9 129.3,121.4 128.1,122.0 127.0,122.5 126.0,123.1 125.2,123.7 124.4,124.4 123.8,125.1 123.4,125.7 123.1,126.4 122.9,127.1 122.9,127.8 123.1,128.5 123.4,129.2 123.9,129.9 124.5,130.6 125.4,131.3 126.3,131.9 127.5,132.6 128.8,133.2" fill="#3be60f"/><polygon points="130.7,132.5 132.3,133.0 134.0,133.5 135.9,134.0 137.8,134.4 139.9,134.7 142.1,135.0 144.3,135.3 146.6,135.5 149.0,135.6 151.4,135.7 153.8,135.7 156.3,135.7 158.7,135.6 161.1,135.5 163.4,135.3 165.7,135.0 167.9,134.7 170.1,134.3 172.1,133.9 174.0,133.5 175.8,133.0 177.5,132.5 179.1,131.9 180.4,131.3 181.7,130.7 182.8,130.1 183.7,129.4 184.5,128.7 185.1,128.1 185.5,127.4 185.8,126.7 185.9,126.0 185.9,125.3 185.8,124.7 185.4,124.0 185.0,123.4 184.4,122.7 183.6,122.1 182.8,121.6 181.8,121.0 180.7,120.5 179.5,120.0 178.3,119.5 176.9,119.0 175.4,118.6 173.9,118.2 172.3,117.9 170.6,117.6 168.8,117.3 167.1,117.1 165.2,116.9 163.4,116.7 161.5,116.6 159.5,116.5 157.6,116.4 155.6,116.4 153.7,116.4 151.7,116.5 149.8,116.6 147.9,116.7 146.0,116.9 144.1,117.1 142.3,117.3 140.5,117.6 138.7,117.9 137.1,118.3 135.4,118.6 133.9,119.1 132.4,119.5 131.1,120.0 129.8,120.5 128.6,121.0 127.5,121.6 126.5,122.2 125.7,122.8 125.0,123.4 124.4,124.0 124.0,124.7 123.7,125.4 123.5,126.0 123.5,126.7 123.7,127.4 124.0,128.1 124.5,128.8 125.1,129.4 125.9,130.1 126.9,130.7 128.0,131.3 129.3,131.9" fill="#50e70e"/><polygon points="131.2,131.2 132.8,131.7 134.5,132.2 136.3,132.6 138.2,133.0 140.2,133.4 142.4,133.7 144.6,133.9 146.8,134.1 149.1,134.2 151.5,134.3 153.9,134.3 156.2,134.3 158.6,134.2 161.0,134.1 163.3,133.9 165.5,133.6 167.7,133.3 169.8,133.0 171.8,132.6 173.7,132.2 175.4,131.7 177.1,131.2 178.6,130.6 180.0,130.1 181.2,129.5 182.2,128.8 183.2,128.2 183.9,127.6 184.5,126.9 185.0,126.2 185.2,125.6 185.4,124.9 185.4,124.3 185.2,123.6 184.9,123.0 184.4,122.4 183.8,121.8 183.1,121.2 182.3,120.6 181.3,120.1 180.3,119.5 179.1,119.1 177.9,118.6 176.5,118.2 175.1,117.8 173.6,117.4 172.0,117.0 170.3,116.7 168.6,116.5 166.9,116.2 165.1,116.0 163.2,115.9 161.4,115.7 159.5,115.7 157.6,115.6 155.6,115.6 153.7,115.6 151.8,115.7 149.9,115.8 148.0,115.9 146.1,116.0 144.3,116.2 142.5,116.5 140.7,116.8 139.0,117.1 137.4,117.4 135.8,117.8 134.3,118.2 132.8,118.6 131.5,119.1 130.2,119.6 129.1,120.1 128.0,120.6 127.1,121.2 126.2,121.8 125.5,122.4 125.0,123.0 124.6,123.7 124.3,124.3 124.1,125.0 124.1,125.6 124.3,126.3 124.6,126.9 125.1,127.6 125.7,128.2 126.5,128.9 127.5,129.5 128.6,130.1 129.8,130.7" fill="#65e70c"/><polygon points="131.7,129.9 133.3,130.4 134.9,130.9 136.7,131.3 138.6,131.7 140.6,132.0 142.6,132.3 144.8,132.5 147.0,132.7 149.3,132.8 151.6,132.9 153.9,132.9 156.2,132.9 158.5,132.8 160.8,132.7 163.1,132.5 165.3,132.3 167.4,132.0 169.5,131.6 171.4,131.3 173.3,130.8 175.0,130.4 176.6,129.9 178.1,129.4 179.4,128.8 180.6,128.2 181.7,127.6 182.6,127.0 183.3,126.4 183.9,125.8 184.4,125.1 184.6,124.5 184.8,123.8 184.8,123.2 184.6,122.6 184.3,122.0 183.9,121.4 183.3,120.8 182.6,120.2 181.8,119.7 180.9,119.1 179.8,118.6 178.7,118.2 177.4,117.7 176.1,117.3 174.7,116.9 173.2,116.5 171.7,116.2 170.1,115.9 168.4,115.6 166.7,115.4 164.9,115.2 163.1,115.1 161.2,114.9 159.4,114.8 157.5,114.8 155.6,114.8 153.7,114.8 151.9,114.9 150.0,114.9 148.1,115.1 146.3,115.2 144.5,115.4 142.7,115.7 141.0,115.9 139.3,116.2 137.7,116.5 136.1,116.9 134.7,117.3 133.2,117.7 131.9,118.2 130.7,118.7 129.6,119.2 128.5,119.7 127.6,120.2 126.8,120.8 126.1,121.4 125.6,122.0 125.1,122.6 124.9,123.2 124.7,123.9 124.7,124.5 124.9,125.2 125.2,125.8 125.7,126.4 126.3,127.0 127.1,127.7 128.0,128.3 129.1,128.8 130.4,129.4" fill="#7ae80a"/><polygon points="132.3,128.6 133.8,129.1 135.4,129.5 137.1,129.9 138.9,130.3 140.9,130.6 142.9,130.9 145.0,131.1 147.2,131.3 149.4,131.4 151.7,131.5 153.9,131.5 156.2,131.5 158.5,131.4 160.7,131.3 162.9,131.1 165.1,130.9 167.2,130.6 169.2,130.3 171.1,129.9 172.9,129.5 174.6,129.1 176.2,128.6 177.6,128.1 178.9,127.6 180.1,127.0 181.1,126.4 182.0,125.8 182.7,125.2 183.3,124.6 183.8,124.0 184.0,123.4 184.2,122.8 184.2,122.1 184.0,121.5 183.7,120.9 183.3,120.4 182.8,119.8 182.1,119.2 181.3,118.7 180.4,118.2 179.4,117.7 178.2,117.2 177.0,116.8 175.7,116.4 174.3,116.0 172.9,115.7 171.4,115.4 169.8,115.1 168.1,114.8 166.4,114.6 164.7,114.4 162.9,114.2 161.1,114.1 159.3,114.0 157.5,114.0 155.6,114.0 153.8,114.0 151.9,114.0 150.1,114.1 148.3,114.3 146.5,114.4 144.7,114.6 143.0,114.8 141.3,115.1 139.6,115.4 138.0,115.7 136.5,116.0 135.0,116.4 133.7,116.8 132.4,117.3 131.2,117.7 130.1,118.2 129.0,118.7 128.1,119.3 127.4,119.8 126.7,120.4 126.2,121.0 125.8,121.6 125.5,122.2 125.4,122.8 125.4,123.4 125.5,124.0 125.9,124.6 126.3,125.3 126.9,125.9 127.7,126.4 128.6,127.0 129.7,127.6 130.9,128.1" fill="#8ee809"/><polygon points="132.8,127.3 134.3,127.8 135.8,128.2 137.5,128.6 139.3,128.9 141.2,129.3 143.2,129.5 145.3,129.7 147.4,129.9 149.5,130.0 151.7,130.1 154.0,130.1 156.2,130.1 158.4,130.0 160.6,129.9 162.7,129.7 164.8,129.5 166.9,129.2 168.8,128.9 170.7,128.6 172.5,128.2 174.1,127.8 175.7,127.3 177.1,126.8 178.4,126.3 179.5,125.8 180.6,125.2 181.4,124.6 182.1,124.0 182.7,123.5 183.1,122.9 183.4,122.3 183.6,121.7 183.6,121.1 183.4,120.5 183.1,119.9 182.7,119.3 182.2,118.8 181.5,118.3 180.8,117.7 179.9,117.3 178.9,116.8 177.8,116.3 176.6,115.9 175.3,115.5 174.0,115.1 172.5,114.8 171.1,114.5 169.5,114.2 167.9,114.0 166.2,113.8 164.5,113.6 162.8,113.4 161.0,113.3 159.2,113.2 157.4,113.2 155.6,113.2 153.8,113.2 152.0,113.2 150.2,113.3 148.4,113.4 146.6,113.6 144.9,113.8 143.2,114.0 141.5,114.2 139.9,114.5 138.4,114.8 136.9,115.2 135.5,115.5 134.1,115.9 132.8,116.4 131.7,116.8 130.6,117.3 129.6,117.8 128.7,118.3 127.9,118.8 127.3,119.4 126.8,119.9 126.4,120.5 126.1,121.1 126.0,121.7 126.0,122.3 126.2,122.9 126.5,123.5 127.0,124.1 127.6,124.7 128.3,125.2 129.2,125.8 130.3,126.3 131.5,126.8" fill="#a3e907"/><polygon points="133.3,126.0 134.8,126.5 136.3,126.9 138.0,127.2 139.7,127.6 141.6,127.9 143.5,128.1 145.5,128.3 147.6,128.5 149.7,128.6 151.8,128.7 154.0,128.7 156.2,128.7 158.3,128.6 160.5,128.5 162.6,128.3 164.6,128.1 166.6,127.9 168.5,127.6 170.3,127.2 172.1,126.9 173.7,126.4 175.2,126.0 176.6,125.5 177.8,125.0 179.0,124.5 180.0,124.0 180.8,123.4 181.5,122.9 182.1,122.3 182.5,121.7 182.8,121.2 182.9,120.6 182.9,120.0 182.8,119.4 182.5,118.9 182.1,118.3 181.6,117.8 181.0,117.3 180.2,116.8 179.3,116.3 178.4,115.9 177.3,115.4 176.2,115.0 174.9,114.6 173.6,114.3 172.2,113.9 170.7,113.6 169.2,113.4 167.6,113.1 166.0,112.9 164.3,112.8 162.6,112.6 160.9,112.5 159.2,112.4 157.4,112.4 155.6,112.3 153.8,112.4 152.1,112.4 150.3,112.5 148.5,112.6 146.8,112.8 145.1,112.9 143.4,113.2 141.8,113.4 140.2,113.7 138.7,114.0 137.3,114.3 135.9,114.7 134.5,115.0 133.3,115.4 132.2,115.9 131.1,116.3 130.1,116.8 129.3,117.3 128.5,117.8 127.9,118.4 127.4,118.9 127.0,119.5 126.8,120.0 126.7,120.6 126.7,121.2 126.9,121.8 127.2,122.3 127.6,122.9 128.2,123.5 129.0,124.0 129.9,124.5 130.9,125.1 132.0,125.6" fill="#b7ea06"/><polygon points="133.9,124.7 135.3,125.1 136.8,125.5 138.4,125.9 140.1,126.2 141.9,126.5 143.8,126.7 145.8,127.0 147.8,127.1 149.8,127.2 151.9,127.3 154.0,127.3 156.1,127.3 158.2,127.2 160.3,127.1 162.4,126.9 164.4,126.7 166.3,126.5 168.2,126.2 169.9,125.9 171.6,125.5 173.2,125.1 174.7,124.7 176.0,124.2 177.3,123.8 178.4,123.3 179.4,122.8 180.2,122.2 180.9,121.7 181.4,121.1 181.9,120.6 182.1,120.0 182.3,119.5 182.3,118.9 182.1,118.4 181.9,117.8 181.5,117.3 181.0,116.8 180.4,116.3 179.6,115.8 178.8,115.4 177.9,114.9 176.8,114.5 175.7,114.1 174.5,113.7 173.2,113.4 171.8,113.1 170.4,112.8 168.9,112.5 167.4,112.3 165.8,112.1 164.1,111.9 162.5,111.8 160.8,111.7 159.1,111.6 157.3,111.6 155.6,111.5 153.9,111.6 152.1,111.6 150.4,111.7 148.7,111.8 147.0,111.9 145.3,112.1 143.7,112.3 142.1,112.5 140.6,112.8 139.1,113.1 137.7,113.4 136.3,113.8 135.0,114.1 133.8,114.5 132.7,115.0 131.6,115.4 130.7,115.9 129.9,116.3 129.2,116.8 128.5,117.3 128.1,117.9 127.7,118.4 127.5,119.0 127.3,119.5 127.4,120.1 127.5,120.6 127.9,121.2 128.3,121.7 128.9,122.3 129.6,122.8 130.5,123.3 131.5,123.8 132.6,124.3" fill="#ccea04"/><polygon points="134.5,123.4 135.8,123.8 137.3,124.2 138.9,124.5 140.5,124.8 142.3,125.1 144.1,125.4 146.0,125.6 148.0,125.7 150.0,125.8 152.0,125.9 154.1,125.9 156.1,125.9 158.2,125.8 160.2,125.7 162.2,125.5 164.1,125.3 166.0,125.1 167.8,124.8 169.6,124.5 171.2,124.2 172.7,123.8 174.2,123.4 175.5,123.0 176.7,122.5 177.8,122.0 178.7,121.5 179.5,121.0 180.2,120.5 180.8,120.0 181.2,119.5 181.5,118.9 181.6,118.4 181.6,117.9 181.5,117.3 181.2,116.8 180.9,116.3 180.4,115.8 179.8,115.3 179.1,114.9 178.2,114.4 177.3,114.0 176.3,113.6 175.2,113.2 174.0,112.9 172.8,112.5 171.4,112.2 170.0,111.9 168.6,111.7 167.1,111.5 165.5,111.3 163.9,111.1 162.3,111.0 160.7,110.9 159.0,110.8 157.3,110.7 155.6,110.7 153.9,110.7 152.2,110.8 150.5,110.9 148.8,111.0 147.2,111.1 145.6,111.3 144.0,111.5 142.4,111.7 140.9,112.0 139.5,112.2 138.1,112.5 136.7,112.9 135.5,113.2 134.3,113.6 133.2,114.0 132.2,114.4 131.3,114.9 130.5,115.4 129.8,115.8 129.2,116.3 128.7,116.8 128.4,117.4 128.2,117.9 128.1,118.4 128.1,118.9 128.3,119.5 128.6,120.0 129.0,120.5 129.6,121.1 130.3,121.6 131.1,122.1 132.1,122.5 133.2,123.0" fill="#e0eb02"/><polygon points="135.1,122.1 136.4,122.5 137.8,122.8 139.3,123.2 141.0,123.5 142.7,123.7 144.5,124.0 146.3,124.1 148.2,124.3 150.1,124.4 152.1,124.5 154.1,124.5 156.1,124.5 158.1,124.4 160.0,124.3 162.0,124.1 163.9,124.0 165.7,123.7 167.5,123.5 169.1,123.2 170.7,122.8 172.2,122.5 173.6,122.1 174.9,121.7 176.1,121.2 177.1,120.8 178.1,120.3 178.9,119.8 179.5,119.3 180.1,118.8 180.5,118.3 180.7,117.8 180.9,117.3 180.9,116.8 180.8,116.3 180.6,115.8 180.2,115.3 179.7,114.8 179.1,114.3 178.4,113.9 177.7,113.5 176.8,113.1 175.8,112.7 174.7,112.3 173.6,112.0 172.3,111.6 171.0,111.4 169.7,111.1 168.3,110.8 166.8,110.6 165.3,110.4 163.7,110.3 162.1,110.1 160.5,110.0 158.9,110.0 157.3,109.9 155.6,109.9 153.9,109.9 152.3,110.0 150.6,110.0 149.0,110.2 147.4,110.3 145.8,110.4 144.2,110.6 142.7,110.9 141.3,111.1 139.9,111.4 138.5,111.7 137.2,112.0 136.0,112.3 134.8,112.7 133.8,113.1 132.8,113.5 131.9,113.9 131.1,114.4 130.5,114.8 129.9,115.3 129.4,115.8 129.1,116.3 128.9,116.8 128.8,117.3 128.8,117.8 129.0,118.3 129.3,118.8 129.7,119.3 130.3,119.8 131.0,120.3 131.8,120.8 132.8,121.3 133.9,121.7" fill="#f5ec01"/><polygon points="135.7,120.8 137.0,121.2 138.3,121.5 139.8,121.8 141.4,122.1 143.1,122.3 144.8,122.6 146.6,122.7 148.4,122.9 150.3,123.0 152.2,123.0 154.1,123.1 156.1,123.0 158.0,123.0 159.9,122.9 161.8,122.7 163.6,122.6 165.4,122.3 167.1,122.1 168.7,121.8 170.3,121.5 171.7,121.1 173.1,120.8 174.3,120.4 175.5,120.0 176.5,119.5 177.4,119.1 178.2,118.6 178.8,118.1 179.3,117.6 179.7,117.2 180.0,116.7 180.2,116.2 180.2,115.7 180.1,115.2 179.8,114.7 179.5,114.3 179.0,113.8 178.5,113.4 177.8,112.9 177.0,112.5 176.2,112.1 175.2,111.8 174.2,111.4 173.1,111.1 171.9,110.8 170.6,110.5 169.3,110.2 167.9,110.0 166.5,109.8 165.0,109.6 163.5,109.5 162.0,109.3 160.4,109.2 158.8,109.2 157.2,109.1 155.6,109.1 154.0,109.1 152.4,109.2 150.8,109.2 149.2,109.3 147.6,109.5 146.1,109.6 144.5,109.8 143.1,110.0 141.6,110.2 140.3,110.5 139.0,110.8 137.7,111.1 136.5,111.4 135.4,111.8 134.4,112.2 133.4,112.5 132.6,113.0 131.8,113.4 131.2,113.8 130.6,114.3 130.2,114.8 129.8,115.2 129.6,115.7 129.5,116.2 129.6,116.7 129.8,117.2 130.1,117.7 130.5,118.2 131.0,118.6 131.7,119.1 132.5,119.5 133.5,120.0 134.5,120.4" fill="#ffe800"/><polygon points="136.3,119.5 137.6,119.8 138.9,120.1 140.3,120.4 141.9,120.7 143.5,120.9 145.1,121.2 146.9,121.3 148.7,121.5 150.5,121.5 152.3,121.6 154.2,121.6 156.0,121.6 157.9,121.5 159.7,121.4 161.6,121.3 163.3,121.1 165.0,120.9 166.7,120.7 168.3,120.4 169.8,120.1 171.2,119.8 172.5,119.4 173.7,119.1 174.8,118.7 175.8,118.3 176.7,117.8 177.4,117.4 178.1,116.9 178.6,116.5 179.0,116.0 179.2,115.5 179.4,115.1 179.4,114.6 179.3,114.1 179.1,113.7 178.8,113.2 178.3,112.8 177.8,112.4 177.1,112.0 176.4,111.6 175.6,111.2 174.6,110.8 173.6,110.5 172.6,110.2 171.4,109.9 170.2,109.6 168.9,109.4 167.6,109.1 166.2,108.9 164.7,108.8 163.3,108.6 161.8,108.5 160.3,108.4 158.7,108.3 157.1,108.3 155.6,108.3 154.0,108.3 152.4,108.3 150.9,108.4 149.3,108.5 147.8,108.6 146.3,108.8 144.8,109.0 143.4,109.2 142.0,109.4 140.7,109.6 139.4,109.9 138.2,110.2 137.1,110.5 136.0,110.9 135.0,111.2 134.1,111.6 133.2,112.0 132.5,112.4 131.9,112.8 131.3,113.3 130.9,113.7 130.6,114.2 130.4,114.6 130.3,115.1 130.4,115.6 130.6,116.0 130.8,116.5 131.3,117.0 131.8,117.4 132.5,117.9 133.3,118.3 134.2,118.7 135.2,119.1" fill="#ffdf00"/><polygon points="137.0,118.1 138.2,118.5 139.5,118.8 140.9,119.1 142.3,119.3 143.9,119.5 145.5,119.7 147.2,119.9 148.9,120.0 150.6,120.1 152.4,120.2 154.2,120.2 156.0,120.2 157.8,120.1 159.6,120.0 161.3,119.9 163.0,119.7 164.7,119.5 166.3,119.3 167.8,119.1 169.3,118.8 170.6,118.5 171.9,118.1 173.1,117.8 174.1,117.4 175.1,117.0 175.9,116.6 176.7,116.2 177.3,115.7 177.8,115.3 178.2,114.9 178.4,114.4 178.6,114.0 178.6,113.5 178.5,113.1 178.3,112.6 178.0,112.2 177.6,111.8 177.1,111.4 176.4,111.0 175.7,110.6 174.9,110.3 174.0,109.9 173.1,109.6 172.0,109.3 170.9,109.0 169.7,108.8 168.5,108.5 167.2,108.3 165.8,108.1 164.5,107.9 163.0,107.8 161.6,107.7 160.1,107.6 158.6,107.5 157.1,107.5 155.6,107.5 154.0,107.5 152.5,107.5 151.0,107.6 149.5,107.7 148.0,107.8 146.6,108.0 145.2,108.1 143.8,108.3 142.4,108.5 141.2,108.8 139.9,109.0 138.7,109.3 137.6,109.6 136.6,109.9 135.6,110.3 134.7,110.6 134.0,111.0 133.2,111.4 132.6,111.8 132.1,112.2 131.7,112.7 131.4,113.1 131.3,113.5 131.2,114.0 131.2,114.4 131.4,114.9 131.7,115.3 132.1,115.8 132.6,116.2 133.3,116.6 134.0,117.0 134.9,117.4 135.9,117.8" fill="#ffd600"/><polygon points="137.7,116.8 138.9,117.1 140.1,117.4 141.4,117.7 142.9,117.9 144.3,118.1 145.9,118.3 147.5,118.5 149.1,118.6 150.8,118.7 152.5,118.7 154.3,118.7 156.0,118.7 157.7,118.7 159.4,118.6 161.1,118.5 162.7,118.3 164.3,118.1 165.8,117.9 167.3,117.7 168.7,117.4 170.0,117.1 171.2,116.8 172.4,116.5 173.4,116.1 174.3,115.7 175.2,115.3 175.9,114.9 176.5,114.5 176.9,114.1 177.3,113.7 177.6,113.3 177.7,112.8 177.7,112.4 177.7,112.0 177.5,111.6 177.2,111.2 176.8,110.8 176.3,110.4 175.7,110.0 175.0,109.7 174.2,109.3 173.4,109.0 172.4,108.7 171.4,108.4 170.4,108.1 169.2,107.9 168.0,107.7 166.8,107.5 165.5,107.3 164.1,107.1 162.8,107.0 161.4,106.9 159.9,106.8 158.5,106.7 157.0,106.7 155.6,106.7 154.1,106.7 152.6,106.7 151.2,106.8 149.7,106.9 148.3,107.0 146.9,107.1 145.5,107.3 144.2,107.5 142.9,107.7 141.6,107.9 140.5,108.2 139.3,108.4 138.2,108.7 137.2,109.0 136.3,109.4 135.5,109.7 134.7,110.1 134.0,110.4 133.5,110.8 133.0,111.2 132.6,111.6 132.3,112.0 132.1,112.4 132.1,112.9 132.1,113.3 132.3,113.7 132.6,114.1 133.0,114.5 133.5,115.0 134.1,115.4 134.8,115.7 135.7,116.1 136.6,116.5" fill="#ffcd00"/><polygon points="138.4,115.5 139.6,115.8 140.8,116.0 142.0,116.3 143.4,116.5 144.8,116.7 146.3,116.9 147.8,117.0 149.4,117.1 151.0,117.2 152.7,117.3 154.3,117.3 156.0,117.3 157.6,117.2 159.2,117.1 160.8,117.0 162.4,116.9 163.9,116.7 165.4,116.5 166.8,116.3 168.1,116.0 169.4,115.7 170.6,115.4 171.6,115.1 172.6,114.8 173.5,114.4 174.3,114.1 175.0,113.7 175.6,113.3 176.1,112.9 176.4,112.5 176.7,112.1 176.8,111.7 176.8,111.3 176.8,110.9 176.6,110.5 176.3,110.2 175.9,109.8 175.4,109.4 174.9,109.1 174.2,108.7 173.5,108.4 172.7,108.1 171.8,107.8 170.8,107.5 169.8,107.3 168.7,107.0 167.5,106.8 166.3,106.6 165.1,106.4 163.8,106.3 162.5,106.2 161.1,106.1 159.8,106.0 158.4,105.9 157.0,105.9 155.5,105.9 154.1,105.9 152.7,105.9 151.3,106.0 149.9,106.1 148.5,106.2 147.2,106.3 145.9,106.5 144.6,106.6 143.4,106.8 142.2,107.0 141.0,107.3 139.9,107.5 138.9,107.8 137.9,108.1 137.1,108.4 136.2,108.7 135.5,109.1 134.9,109.4 134.3,109.8 133.9,110.2 133.5,110.6 133.2,111.0 133.1,111.3 133.0,111.7 133.1,112.1 133.2,112.5 133.5,112.9 133.9,113.3 134.4,113.7 135.0,114.1 135.7,114.5 136.5,114.8 137.4,115.1" fill="#ffc400"/><polygon points="139.2,114.1 140.3,114.4 141.5,114.6 142.7,114.9 144.0,115.1 145.3,115.3 146.7,115.4 148.2,115.6 149.7,115.7 151.2,115.7 152.8,115.8 154.4,115.8 155.9,115.8 157.5,115.7 159.0,115.7 160.6,115.6 162.0,115.4 163.5,115.3 164.9,115.1 166.2,114.9 167.5,114.6 168.7,114.4 169.8,114.1 170.9,113.8 171.8,113.5 172.7,113.2 173.4,112.8 174.1,112.5 174.6,112.1 175.1,111.7 175.4,111.4 175.7,111.0 175.8,110.6 175.9,110.2 175.8,109.9 175.6,109.5 175.4,109.1 175.0,108.8 174.6,108.4 174.0,108.1 173.4,107.8 172.7,107.5 171.9,107.2 171.1,106.9 170.1,106.6 169.1,106.4 168.1,106.2 167.0,106.0 165.9,105.8 164.7,105.6 163.4,105.5 162.2,105.4 160.9,105.3 159.6,105.2 158.2,105.1 156.9,105.1 155.5,105.1 154.2,105.1 152.8,105.1 151.5,105.2 150.1,105.3 148.8,105.4 147.5,105.5 146.3,105.6 145.1,105.8 143.9,106.0 142.7,106.2 141.6,106.4 140.6,106.7 139.6,106.9 138.7,107.2 137.8,107.5 137.1,107.8 136.4,108.1 135.8,108.4 135.2,108.8 134.8,109.1 134.5,109.5 134.2,109.9 134.1,110.2 134.0,110.6 134.1,111.0 134.2,111.4 134.5,111.7 134.9,112.1 135.4,112.5 135.9,112.8 136.6,113.2 137.4,113.5 138.3,113.8" fill="#ffbb00"/><polygon points="140.1,112.7 141.1,113.0 142.2,113.2 143.4,113.5 144.6,113.6 145.9,113.8 147.2,114.0 148.6,114.1 150.0,114.2 151.4,114.3 152.9,114.3 154.4,114.3 155.9,114.3 157.4,114.3 158.8,114.2 160.3,114.1 161.7,114.0 163.0,113.8 164.4,113.6 165.6,113.4 166.8,113.2 168.0,113.0 169.0,112.7 170.0,112.4 170.9,112.2 171.7,111.9 172.4,111.5 173.1,111.2 173.6,110.9 174.0,110.5 174.4,110.2 174.6,109.8 174.7,109.5 174.8,109.1 174.7,108.8 174.6,108.4 174.3,108.1 174.0,107.8 173.6,107.4 173.1,107.1 172.5,106.8 171.8,106.5 171.1,106.3 170.3,106.0 169.4,105.8 168.5,105.5 167.5,105.3 166.4,105.1 165.3,105.0 164.2,104.8 163.0,104.7 161.8,104.6 160.6,104.5 159.4,104.4 158.1,104.3 156.8,104.3 155.5,104.3 154.2,104.3 152.9,104.3 151.7,104.4 150.4,104.5 149.1,104.6 147.9,104.7 146.7,104.8 145.5,105.0 144.4,105.2 143.3,105.3 142.3,105.6 141.3,105.8 140.4,106.0 139.5,106.3 138.7,106.6 138.0,106.8 137.3,107.2 136.8,107.5 136.3,107.8 135.8,108.1 135.5,108.5 135.3,108.8 135.2,109.1 135.1,109.5 135.2,109.8 135.3,110.2 135.6,110.5 136.0,110.9 136.4,111.2 137.0,111.5 137.6,111.9 138.4,112.2 139.2,112.5" fill="#ffb200"/><polygon points="141.1,111.4 142.0,111.6 143.0,111.8 144.1,112.0 145.3,112.2 146.5,112.3 147.7,112.5 149.0,112.6 150.3,112.7 151.7,112.7 153.1,112.8 154.4,112.8 155.8,112.8 157.2,112.7 158.6,112.7 159.9,112.6 161.3,112.5 162.5,112.3 163.8,112.2 165.0,112.0 166.1,111.8 167.2,111.6 168.2,111.3 169.1,111.1 169.9,110.8 170.7,110.5 171.4,110.2 172.0,109.9 172.5,109.6 172.9,109.3 173.2,109.0 173.4,108.7 173.6,108.3 173.6,108.0 173.6,107.7 173.4,107.4 173.2,107.1 172.9,106.8 172.5,106.5 172.0,106.2 171.5,105.9 170.8,105.6 170.2,105.4 169.4,105.1 168.6,104.9 167.7,104.7 166.8,104.5 165.8,104.3 164.8,104.2 163.7,104.0 162.6,103.9 161.5,103.8 160.3,103.7 159.1,103.6 157.9,103.6 156.7,103.6 155.5,103.5 154.3,103.6 153.1,103.6 151.9,103.6 150.7,103.7 149.5,103.8 148.3,103.9 147.2,104.0 146.1,104.2 145.0,104.3 144.0,104.5 143.0,104.7 142.1,104.9 141.2,105.1 140.4,105.4 139.7,105.6 139.0,105.9 138.4,106.2 137.8,106.5 137.4,106.8 137.0,107.1 136.7,107.4 136.5,107.7 136.4,108.0 136.3,108.4 136.4,108.7 136.6,109.0 136.8,109.3 137.1,109.6 137.6,110.0 138.1,110.3 138.7,110.5 139.4,110.8 140.2,111.1" fill="#ffa900"/><polygon points="142.1,109.9 143.0,110.2 143.9,110.4 145.0,110.5 146.0,110.7 147.1,110.8 148.3,111.0 149.5,111.1 150.7,111.2 152.0,111.2 153.2,111.2 154.5,111.3 155.8,111.2 157.1,111.2 158.3,111.1 159.6,111.1 160.8,111.0 162.0,110.8 163.1,110.7 164.2,110.5 165.3,110.3 166.3,110.1 167.2,109.9 168.0,109.7 168.8,109.5 169.5,109.2 170.2,108.9 170.7,108.7 171.2,108.4 171.6,108.1 171.9,107.8 172.1,107.5 172.2,107.2 172.3,106.9 172.2,106.6 172.1,106.3 171.9,106.0 171.6,105.8 171.3,105.5 170.8,105.2 170.3,105.0 169.8,104.7 169.1,104.5 168.4,104.3 167.6,104.1 166.8,103.9 166.0,103.7 165.1,103.5 164.1,103.4 163.1,103.2 162.1,103.1 161.0,103.0 160.0,102.9 158.9,102.9 157.7,102.8 156.6,102.8 155.5,102.8 154.3,102.8 153.2,102.8 152.1,102.9 151.0,102.9 149.9,103.0 148.8,103.1 147.7,103.2 146.7,103.4 145.7,103.5 144.8,103.7 143.9,103.9 143.0,104.1 142.2,104.3 141.5,104.5 140.8,104.7 140.1,105.0 139.6,105.2 139.1,105.5 138.6,105.8 138.3,106.1 138.0,106.3 137.8,106.6 137.7,106.9 137.7,107.2 137.8,107.5 137.9,107.8 138.1,108.1 138.5,108.4 138.9,108.7 139.4,108.9 139.9,109.2 140.6,109.5 141.3,109.7" fill="#ffa000"/><polygon points="143.3,108.5 144.1,108.7 145.0,108.9 145.9,109.0 146.9,109.2 147.9,109.3 148.9,109.4 150.0,109.5 151.1,109.6 152.3,109.6 153.4,109.7 154.6,109.7 155.7,109.7 156.9,109.6 158.0,109.6 159.2,109.5 160.3,109.4 161.3,109.3 162.4,109.2 163.4,109.0 164.3,108.9 165.2,108.7 166.1,108.5 166.8,108.3 167.6,108.1 168.2,107.8 168.8,107.6 169.3,107.4 169.7,107.1 170.1,106.9 170.4,106.6 170.6,106.3 170.7,106.1 170.7,105.8 170.7,105.5 170.6,105.3 170.4,105.0 170.2,104.8 169.8,104.5 169.4,104.3 169.0,104.1 168.5,103.8 167.9,103.6 167.3,103.4 166.6,103.2 165.8,103.1 165.0,102.9 164.2,102.7 163.3,102.6 162.4,102.5 161.5,102.4 160.5,102.3 159.5,102.2 158.5,102.2 157.5,102.1 156.5,102.1 155.4,102.1 154.4,102.1 153.4,102.1 152.3,102.2 151.3,102.2 150.3,102.3 149.3,102.4 148.4,102.5 147.4,102.6 146.5,102.8 145.7,102.9 144.8,103.1 144.1,103.2 143.3,103.4 142.6,103.6 142.0,103.8 141.4,104.1 140.9,104.3 140.5,104.5 140.1,104.8 139.8,105.0 139.6,105.3 139.4,105.5 139.3,105.8 139.3,106.1 139.3,106.3 139.5,106.6 139.7,106.9 140.0,107.1 140.4,107.4 140.8,107.6 141.4,107.9 141.9,108.1 142.6,108.3" fill="#ff9700"/><polygon points="144.8,107.0 145.5,107.2 146.3,107.3 147.1,107.5 147.9,107.6 148.8,107.7 149.7,107.8 150.7,107.9 151.6,107.9 152.6,108.0 153.6,108.0 154.6,108.0 155.6,108.0 156.7,108.0 157.7,107.9 158.6,107.9 159.6,107.8 160.5,107.7 161.5,107.6 162.3,107.5 163.2,107.3 163.9,107.2 164.7,107.0 165.4,106.8 166.0,106.6 166.6,106.4 167.1,106.2 167.5,106.0 167.9,105.8 168.2,105.6 168.5,105.4 168.7,105.1 168.8,104.9 168.8,104.7 168.8,104.4 168.7,104.2 168.6,104.0 168.4,103.8 168.1,103.6 167.8,103.4 167.4,103.2 166.9,103.0 166.4,102.8 165.8,102.6 165.2,102.5 164.6,102.3 163.9,102.2 163.2,102.0 162.4,101.9 161.6,101.8 160.8,101.7 159.9,101.6 159.0,101.6 158.1,101.5 157.2,101.5 156.3,101.5 155.4,101.5 154.5,101.5 153.6,101.5 152.7,101.5 151.8,101.6 150.9,101.6 150.0,101.7 149.2,101.8 148.3,101.9 147.5,102.0 146.8,102.2 146.0,102.3 145.4,102.5 144.7,102.6 144.1,102.8 143.6,103.0 143.1,103.2 142.6,103.4 142.2,103.6 141.9,103.8 141.6,104.0 141.4,104.2 141.3,104.5 141.2,104.7 141.2,104.9 141.3,105.1 141.4,105.4 141.6,105.6 141.9,105.8 142.2,106.0 142.6,106.2 143.1,106.4 143.6,106.6 144.2,106.8" fill="#ff8f00"/><polygon points="146.8,105.4 147.3,105.5 147.9,105.7 148.6,105.8 149.3,105.9 150.0,106.0 150.7,106.0 151.5,106.1 152.3,106.1 153.1,106.2 153.9,106.2 154.7,106.2 155.5,106.2 156.4,106.2 157.2,106.1 158.0,106.1 158.8,106.0 159.5,105.9 160.3,105.9 161.0,105.8 161.6,105.7 162.3,105.5 162.9,105.4 163.4,105.3 164.0,105.1 164.4,105.0 164.9,104.8 165.2,104.6 165.5,104.5 165.8,104.3 166.0,104.1 166.2,103.9 166.3,103.7 166.3,103.6 166.3,103.4 166.3,103.2 166.1,103.0 166.0,102.8 165.7,102.7 165.5,102.5 165.2,102.3 164.8,102.2 164.4,102.0 163.9,101.9 163.4,101.8 162.9,101.6 162.3,101.5 161.7,101.4 161.1,101.3 160.4,101.2 159.8,101.1 159.1,101.1 158.3,101.0 157.6,101.0 156.9,101.0 156.1,100.9 155.4,100.9 154.6,100.9 153.8,101.0 153.1,101.0 152.4,101.0 151.6,101.1 150.9,101.2 150.2,101.2 149.5,101.3 148.9,101.4 148.3,101.5 147.7,101.6 147.1,101.8 146.6,101.9 146.1,102.0 145.6,102.2 145.2,102.3 144.9,102.5 144.6,102.7 144.3,102.8 144.1,103.0 143.9,103.2 143.8,103.4 143.8,103.6 143.8,103.7 143.8,103.9 143.9,104.1 144.1,104.3 144.3,104.5 144.6,104.6 144.9,104.8 145.3,105.0 145.7,105.1 146.2,105.3" fill="#ff8600"/><polygon points="150.1,103.5 150.4,103.6 150.8,103.6 151.2,103.7 151.6,103.8 152.0,103.8 152.5,103.9 152.9,103.9 153.4,103.9 153.9,103.9 154.4,104.0 154.9,104.0 155.4,104.0 155.8,103.9 156.3,103.9 156.8,103.9 157.3,103.9 157.7,103.8 158.2,103.8 158.6,103.7 159.0,103.6 159.4,103.6 159.8,103.5 160.1,103.4 160.4,103.3 160.7,103.2 161.0,103.1 161.2,103.0 161.4,102.9 161.6,102.8 161.7,102.7 161.8,102.6 161.9,102.5 161.9,102.4 161.9,102.3 161.9,102.2 161.8,102.1 161.7,102.0 161.6,101.9 161.4,101.8 161.2,101.7 161.0,101.6 160.8,101.5 160.5,101.4 160.2,101.3 159.9,101.2 159.5,101.2 159.2,101.1 158.8,101.1 158.4,101.0 158.0,101.0 157.5,100.9 157.1,100.9 156.6,100.9 156.2,100.8 155.7,100.8 155.3,100.8 154.8,100.8 154.3,100.8 153.9,100.9 153.4,100.9 153.0,100.9 152.5,101.0 152.1,101.0 151.7,101.1 151.3,101.1 150.9,101.2 150.5,101.2 150.2,101.3 149.9,101.4 149.6,101.5 149.3,101.6 149.1,101.7 148.8,101.8 148.7,101.9 148.5,102.0 148.4,102.1 148.3,102.2 148.2,102.3 148.2,102.4 148.2,102.5 148.3,102.6 148.3,102.7 148.4,102.8 148.6,102.9 148.8,103.1 149.0,103.1 149.2,103.2 149.5,103.3 149.8,103.4" fill="#ff7d00"/></g></svg>
<div style="position:absolute;left:181px;top:386px;width:638px;height:15px;background:#f3f3f3"></div>
<div class="t" style="left:182px;top:388px;font-size:10px;line-height:11px;color:#555;">数据曲线</div>
<svg style="position:absolute;left:786px;top:387px" width="32" height="14"><rect x="1.5" y="4.5" width="8" height="8" fill="#f3f3f3" stroke="#555"/><path d="M4.5 4.5 V1.5 H12.5 V9.5 H9.5" fill="none" stroke="#555"/><rect x="18" y="0" width="13" height="14" fill="#e8e8e8"/><path d="M21 3.5 L28 10.5 M28 3.5 L21 10.5" stroke="#111" stroke-width="1.6"/></svg>
<div style="position:absolute;left:181px;top:401px;width:638px;height:27px;background:#f0f0f0"></div>
<div style="position:absolute;left:181px;top:403px;width:46px;height:21px;background:#cce4f7;border:1px solid #7eb4ea;box-sizing:border-box"></div>
<div class="t" style="left:181px;top:407px;font-size:10.5px;line-height:13px;color:#333;width:46px;text-align:center;">播放</div>
<div style="position:absolute;left:230px;top:403px;width:46px;height:21px;background:#e1e1e1;border:1px solid #d6d6d6;box-sizing:border-box"></div>
<div class="t" style="left:230px;top:407px;font-size:10.5px;line-height:13px;color:#333;width:46px;text-align:center;">清除</div>
<div style="position:absolute;left:279px;top:403px;width:49px;height:21px;background:#e1e1e1;border:1px solid #d6d6d6;box-sizing:border-box"></div>
<div class="t" style="left:279px;top:407px;font-size:10.5px;line-height:13px;color:#333;width:49px;text-align:center;">导出</div>
<div style="position:absolute;left:330px;top:403px;width:48px;height:21px;background:#e1e1e1;border:1px solid #d6d6d6;box-sizing:border-box"></div>
<div class="t" style="left:330px;top:407px;font-size:10.5px;line-height:13px;color:#333;width:48px;text-align:center;">截图</div>
<div style="position:absolute;left:380px;top:403px;width:48px;height:21px;background:#e1e1e1;border:1px solid #d6d6d6;box-sizing:border-box"></div>
<div class="t" style="left:380px;top:407px;font-size:10.5px;line-height:13px;color:#333;width:48px;text-align:center;">自动缩放</div>
<div style="position:absolute;left:430px;top:403px;width:48px;height:21px;background:#e1e1e1;border:1px solid #d6d6d6;box-sizing:border-box"></div>
<div class="t" style="left:430px;top:407px;font-size:10.5px;line-height:13px;color:#333;width:48px;text-align:center;">切换均值</div>
<svg style="position:absolute;left:480px;top:409px" width="10" height="10"><rect x="0.5" y="0.5" width="9" height="9" fill="#fff" stroke="#333"/></svg>
<div class="t" style="left:492px;top:407px;font-size:10.5px;line-height:13px;color:#333;">横游标</div>
<svg style="position:absolute;left:527px;top:409px" width="10" height="10"><rect x="0.5" y="0.5" width="9" height="9" fill="#fff" stroke="#333"/></svg>
<div class="t" style="left:539px;top:407px;font-size:10.5px;line-height:13px;color:#333;">纵游标</div>
<svg style="position:absolute;left:575px;top:409px" width="10" height="10"><rect x="0.5" y="0.5" width="9" height="9" fill="#fff" stroke="#333"/><path d="M2 4.8 L4 7 L7.5 2.5" stroke="#333" fill="none" stroke-width="1"/></svg>
<div class="t" style="left:587px;top:407px;font-size:10.5px;line-height:13px;color:#333;">图例</div>
<div style="position:absolute;left:181px;top:428px;width:548px;height:237px;background:#fff"></div>
<svg style="position:absolute;left:181px;top:428px" width="548" height="237"><path d="M45.5,192.5 H537.5 M45.5,159.4 H537.5 M45.5,126.4 H537.5 M45.5,93.3 H537.5 M45.5,60.3 H537.5 M45.5,27.2 H537.5 M120.5,8.0 V204.0 M208.5,8.0 V204.0 M296.5,8.0 V204.0 M384.5,8.0 V204.0 M472.5,8.0 V204.0" stroke="#ececec" stroke-width="1" fill="none"/><path d="M45.5,204 V8 H537.5 V204 Z" stroke="#6a6a6a" stroke-width="1.3" fill="none"/><path d="M45.5,199.1 h4 M45.5,192.5 h7 M45.5,185.9 h4 M45.5,179.3 h4 M45.5,172.7 h4 M45.5,166.1 h4 M45.5,159.4 h7 M45.5,152.8 h4 M45.5,146.2 h4 M45.5,139.6 h4 M45.5,133.0 h4 M45.5,126.4 h7 M45.5,119.8 h4 M45.5,113.2 h4 M45.5,106.5 h4 M45.5,99.9 h4 M45.5,93.3 h7 M45.5,86.7 h4 M45.5,80.1 h4 M45.5,73.5 h4 M45.5,66.9 h4 M45.5,60.3 h7 M45.5,53.6 h4 M45.5,47.0 h4 M45.5,40.4 h4 M45.5,33.8 h4 M45.5,27.2 h7 M45.5,20.6 h4 M45.5,14.0 h4 M50.1,204.0 v-3.5 M67.7,204.0 v-3.5 M85.3,204.0 v-3.5 M102.9,204.0 v-3.5 M120.5,204.0 v-6 M138.1,204.0 v-3.5 M155.7,204.0 v-3.5 M173.3,204.0 v-3.5 M190.9,204.0 v-3.5 M208.5,204.0 v-6 M226.1,204.0 v-3.5 M243.7,204.0 v-3.5 M261.3,204.0 v-3.5 M278.9,204.0 v-3.5 M296.5,204.0 v-6 M314.1,204.0 v-3.5 M331.7,204.0 v-3.5 M349.3,204.0 v-3.5 M366.9,204.0 v-3.5 M384.5,204.0 v-6 M402.1,204.0 v-3.5 M419.7,204.0 v-3.5 M437.3,204.0 v-3.5 M454.9,204.0 v-3.5 M472.5,204.0 v-6 M490.1,204.0 v-3.5 M507.7,204.0 v-3.5 M525.3,204.0 v-3.5" stroke="#222" stroke-width="1" fill="none"/><text x="41.5" y="195.5" font-size="8.5" text-anchor="end" fill="#333" font-family="Liberation Sans, sans-serif">5500</text><text x="41.5" y="162.44000000000005" font-size="8.5" text-anchor="end" fill="#333" font-family="Liberation Sans, sans-serif">5525</text><text x="41.5" y="129.38" font-size="8.5" text-anchor="end" fill="#333" font-family="Liberation Sans, sans-serif">5550</text><text x="41.5" y="96.31999999999994" font-size="8.5" text-anchor="end" fill="#333" font-family="Liberation Sans, sans-serif">5575</text><text x="41.5" y="63.25999999999999" font-size="8.5" text-anchor="end" fill="#333" font-family="Liberation Sans, sans-serif">5600</text><text x="41.5" y="30.19999999999999" font-size="8.5" text-anchor="end" fill="#333" font-family="Liberation Sans, sans-serif">5625</text><g transform="translate(121.5,212) rotate(8)"><text font-size="8" fill="#444" font-family="Liberation Sans, sans-serif" y="3">11:25:<tspan dy="2">20</tspan></text></g><g transform="translate(209.5,212) rotate(8)"><text font-size="8" fill="#444" font-family="Liberation Sans, sans-serif" y="3">11:25:<tspan dy="2">25</tspan></text></g><g transform="translate(297.5,212) rotate(8)"><text font-size="8" fill="#444" font-family="Liberation Sans, sans-serif" y="3">11:25:<tspan dy="2">30</tspan></text></g><g transform="translate(385.5,212) rotate(8)"><text font-size="8" fill="#444" font-family="Liberation Sans, sans-serif" y="3">11:25:<tspan dy="2">35</tspan></text></g><g transform="translate(473.5,212) rotate(8)"><text font-size="8" fill="#444" font-family="Liberation Sans, sans-serif" y="3">11:25:<tspan dy="2">40</tspan></text></g><text x="281" y="235" font-size="9.5" fill="#333">时间</text><g transform="translate(12,105) rotate(-90)"><text font-size="9" fill="#333" text-anchor="middle" y="3">值</text></g><path d="M45.8,72.0 L46.2,57.4 L51.4,54.8 L54.5,130.8 L63.5,75.4 L69.9,116.7 L75.1,84.5 L81.0,187.5 L87.4,36.8 L93.1,112.8 L97.7,107.6 L101.4,53.5 L104.7,97.3 L107.3,71.1 L109.9,93.5 L113.2,92.2 L115.8,65.9 L122.0,129.5 L127.4,83.9 L130.5,127.7 L134.3,90.9 L143.4,52.2 L146.7,105.1 L149.8,84.5 L152.4,91.7 L155.5,59.2 L158.0,67.7 L162.2,67.7 L166.5,103.8 L169.9,97.3 L173.0,106.4 L175.6,99.4 L178.1,112.3 L181.2,94.2 L183.8,112.3 L187.7,99.4 L190.5,108.2 L193.6,92.7 L196.7,98.6 L199.3,99.4 L201.3,119.2 L204.4,77.2 L207.3,119.2 L210.3,71.1 L216.3,101.2 L218.9,96.0 L221.9,110.2 L229.7,76.7 L232.8,119.2 L236.1,90.9 L242.6,134.7 L245.1,81.4 L247.2,108.2 L250.3,79.8 L254.2,150.2 L257.5,92.2 L259.3,92.7 L261.9,121.8 L265.2,71.1 L268.3,103.8 L274.0,114.9 L277.3,24.7 L280.4,87.0 L285.8,48.4 L288.9,130.3 L292.8,96.0 L295.4,93.5 L298.8,92.7 L301.9,116.7 L305.0,99.9 L307.8,157.9 L310.9,102.5 L314.3,113.3 L317.3,113.3 L321.2,117.9 L324.3,93.5 L327.1,104.6 L330.2,53.5 L336.2,93.5 L339.5,66.9 L343.1,78.0 L348.3,51.5 L352.1,69.5 L356.0,76.7 L361.9,120.0 L365.3,70.3 L368.4,119.2 L372.0,51.0 L374.8,94.8 L377.9,66.4 L380.5,136.0 L383.8,56.1 L386.9,101.2 L389.5,47.9 L392.6,114.9 L397.2,85.7 L400.3,96.0 L407.0,82.4 L410.6,110.2 L414.0,88.3 L419.9,159.7 L423.0,70.3 L426.1,115.9 L429.4,75.4 L433.3,115.4 L447.5,107.1 L453.9,84.5 L458.5,40.1 L461.6,81.9 L465.5,98.6 L478.9,65.1 L481.7,132.1 L492.6,123.6 L495.1,79.8 L499.8,84.5 L502.9,150.2 L506.7,125.2 L509.3,127.7 L512.7,119.2 L515.7,88.3 L521.7,76.2 L524.8,119.2 L527.9,78.0 L533.8,111.5 L537.1,92.2" stroke="#a95ed6" stroke-width="1.3" fill="none" stroke-linejoin="round"/></svg>
<div style="position:absolute;left:729px;top:428px;width:89px;height:237px;background:#f7f7f7"></div>
<div style="position:absolute;left:731px;top:427.5px;width:85px;height:58.0px;background:#fff"></div>
<div class="t" style="left:736px;top:428.5px;font-size:10.5px;line-height:12px;color:#333;">ROI功率</div>
<svg style="position:absolute;left:736px;top:448.5px" width="10" height="10"><rect x="0.5" y="0.5" width="9" height="9" fill="#fff" stroke="#333"/></svg>
<div style="position:absolute;left:746px;top:449.0px;width:66px;height:9.0px;background:#ee1111"></div>
<div class="t" style="left:736px;top:463.5px;font-size:10.5px;line-height:12px;color:#333;letter-spacing:0.3px;">0.209</div>
<div style="position:absolute;left:731px;top:486px;width:85px;height:58px;background:#fff"></div>
<div class="t" style="left:736px;top:487px;font-size:10.5px;line-height:12px;color:#333;">D4σ</div>
<svg style="position:absolute;left:736px;top:507px" width="10" height="10"><rect x="0.5" y="0.5" width="9" height="9" fill="#fff" stroke="#333"/></svg>
<div style="position:absolute;left:746px;top:507.5px;width:66px;height:9.0px;background:#44bb11"></div>
<div class="t" style="left:736px;top:522px;font-size:10.5px;line-height:12px;color:#333;letter-spacing:0.3px;">5268.781</div>
<div style="position:absolute;left:731px;top:544px;width:85px;height:58px;background:#fff"></div>
<div class="t" style="left:736px;top:545px;font-size:10.5px;line-height:12px;color:#333;">D4σ椭圆率</div>
<svg style="position:absolute;left:736px;top:565px" width="10" height="10"><rect x="0.5" y="0.5" width="9" height="9" fill="#fff" stroke="#333"/></svg>
<div style="position:absolute;left:746px;top:565.5px;width:66px;height:9.0px;background:#1144cc"></div>
<div class="t" style="left:736px;top:580px;font-size:10.5px;line-height:12px;color:#333;letter-spacing:0.3px;">0.823</div>
<div style="position:absolute;left:731px;top:601.8px;width:85px;height:58.0px;background:#fff"></div>
<div class="t" style="left:736px;top:602.8px;font-size:10.5px;line-height:12px;color:#333;">Dpk</div>
<svg style="position:absolute;left:736px;top:622.8px" width="10" height="10"><rect x="0.5" y="0.5" width="9" height="9" fill="#fff" stroke="#333"/><path d="M2 4.8 L4 7 L7.5 2.5" stroke="#333" fill="none" stroke-width="1"/></svg>
<div style="position:absolute;left:746px;top:623.3px;width:66px;height:9.0px;background:#7011a0"></div>
<div class="t" style="left:736px;top:637.8px;font-size:10.5px;line-height:12px;color:#333;letter-spacing:0.3px;">5566.156</div>
<div style="position:absolute;left:818px;top:111px;width:4px;height:579px;background:#f0f0f0"></div>
<div style="position:absolute;left:821px;top:111px;width:1px;height:274px;background:#aaa"></div>
<div style="position:absolute;left:822px;top:111px;width:536px;height:13px;background:#f3f3f3"></div>
<div class="t" style="left:826px;top:112px;font-size:10px;line-height:11px;color:#777;">光斑计算</div>
<div style="position:absolute;left:822px;top:124px;width:536px;height:262px;background:#f0f0f0"></div>
<div class="t" style="left:828px;top:139px;font-size:10.5px;line-height:12px;color:#444;">光斑序号</div>
<div style="position:absolute;left:873px;top:134px;width:64px;height:20px;background:#e6e6e6;border:1px solid #dcdcdc;box-sizing:border-box"></div>
<div class="t" style="left:876px;top:139px;font-size:10.5px;line-height:12px;color:#333;">0</div>
<svg style="position:absolute;left:923px;top:141px" width="8" height="6"><path d="M1 1.5 L4 4.5 L7 1.5" stroke="#888" fill="none"/></svg>
<div style="position:absolute;left:941px;top:134px;width:52px;height:19px;background:#e1e1e1;border:1px solid #d0d0d0;box-sizing:border-box"></div>
<div class="t" style="left:941px;top:138px;font-size:10.5px;line-height:12px;color:#333;width:52px;text-align:center;">清除数据</div>
<div style="position:absolute;left:998px;top:134px;width:52px;height:19px;background:#cce4f7;border:1px solid #6fa8e0;box-sizing:border-box"></div>
<div class="t" style="left:998px;top:138px;font-size:10.5px;line-height:12px;color:#333;width:52px;text-align:center;">启用计算</div>
<div style="position:absolute;left:1055px;top:134px;width:51px;height:19px;background:#e1e1e1;border:1px solid #d0d0d0;box-sizing:border-box"></div>
<div class="t" style="left:1055px;top:138px;font-size:10.5px;line-height:12px;color:#333;width:51px;text-align:center;">断点采集</div>
<div class="t" style="left:828px;top:163px;font-size:10.5px;line-height:12px;color:#444;">统计方式</div>
<div style="position:absolute;left:873px;top:158px;width:92px;height:20px;background:#e6e6e6;border:1px solid #dcdcdc;box-sizing:border-box"></div>
<div class="t" style="left:876px;top:163px;font-size:10.5px;line-height:12px;color:#333;">统计数量</div>
<svg style="position:absolute;left:951px;top:165px" width="8" height="6"><path d="M1 1.5 L4 4.5 L7 1.5" stroke="#888" fill="none"/></svg>
<div style="position:absolute;left:969px;top:159px;width:81px;height:19px;background:#fff;border:1px solid #c8c8c8;box-sizing:border-box"></div>
<div class="t" style="left:972px;top:162px;font-size:11px;line-height:12px;color:#222;">10000</div>
<div style="position:absolute;left:1038px;top:160px;width:11px;height:17px;background:#e8e8e8"></div>
<svg style="position:absolute;left:1039px;top:161px" width="10" height="16"><path d="M3 5 L5 2.5 L7 5 Z M3 11 L5 13.5 L7 11 Z" fill="#555"/></svg>
<div style="position:absolute;left:828px;top:182px;width:529px;height:199px;background:#fff;border-top:1px solid #d8d8d8;border-left:1px solid #e0e0e0;box-sizing:border-box"></div>
<div class="t" style="left:831px;top:189px;font-size:10.5px;line-height:12px;color:#222;font-weight:bold;">名称</div>
<div class="t" style="left:929px;top:189px;font-size:10.5px;line-height:12px;color:#222;font-weight:bold;">单位</div>
<div class="t" style="left:968px;top:189px;font-size:10.5px;line-height:12px;color:#222;font-weight:bold;">值</div>
<div class="t" style="left:1033px;top:189px;font-size:10.5px;line-height:12px;color:#222;font-weight:bold;">均值</div>
<div class="t" style="left:1098.5px;top:189px;font-size:10.5px;line-height:12px;color:#222;font-weight:bold;">标准差</div>
<div class="t" style="left:1163px;top:189px;font-size:10.5px;line-height:12px;color:#222;font-weight:bold;">最大值</div>
<div class="t" style="left:1228px;top:189px;font-size:10.5px;line-height:12px;color:#222;font-weight:bold;">最小值</div>
<div class="t" style="left:1294.5px;top:189px;font-size:10.5px;line-height:12px;color:#222;font-weight:bold;">统计数量</div>
<svg style="position:absolute;left:831px;top:210.5px" width="8" height="6"><path d="M1 1 L4 4 L7 1" stroke="#555" fill="none"/></svg>
<div class="t" style="left:843px;top:208.5px;font-size:10.5px;line-height:12px;color:#333;">功率/能量</div>
<svg style="position:absolute;left:917px;top:215.5px" width="8" height="5"><path d="M1 0.5 H7 L4 4 Z" fill="#111"/></svg>
<div style="position:absolute;left:854px;top:224.6px;width:502px;height:16.0px;background:#d9d9d9"></div>
<div class="t" style="left:856px;top:226.6px;font-size:10.5px;line-height:12px;color:#222;">全图总幅值</div>
<div class="t" style="left:929px;top:226.6px;font-size:11px;line-height:12px;color:#222;"></div>
<div class="t" style="left:968px;top:226.6px;font-size:11px;line-height:12px;color:#222;letter-spacing:0.45px;">2.408e+08</div>
<div class="t" style="left:1033px;top:226.6px;font-size:11px;line-height:12px;color:#222;letter-spacing:0.45px;">2.407e+08</div>
<div class="t" style="left:1098.5px;top:226.6px;font-size:11px;line-height:12px;color:#222;letter-spacing:0.45px;">3.565e+05</div>
<div class="t" style="left:1163px;top:226.6px;font-size:11px;line-height:12px;color:#222;letter-spacing:0.45px;">2.417e+08</div>
<div class="t" style="left:1228px;top:226.6px;font-size:11px;line-height:12px;color:#222;letter-spacing:0.45px;">2.399e+08</div>
<div class="t" style="left:1294.5px;top:226.6px;font-size:11px;line-height:12px;color:#222;letter-spacing:0.45px;">151</div>
<div class="t" style="left:856px;top:244.7px;font-size:10.5px;line-height:12px;color:#222;">全图功率</div>
<div class="t" style="left:929px;top:244.7px;font-size:11px;line-height:12px;color:#222;">W</div>
<div class="t" style="left:968px;top:244.7px;font-size:11px;line-height:12px;color:#222;letter-spacing:0.45px;">1.000</div>
<div class="t" style="left:1033px;top:244.7px;font-size:11px;line-height:12px;color:#222;letter-spacing:0.45px;">1.000</div>
<div class="t" style="left:1098.5px;top:244.7px;font-size:11px;line-height:12px;color:#222;letter-spacing:0.45px;">0.001</div>
<div class="t" style="left:1163px;top:244.7px;font-size:11px;line-height:12px;color:#222;letter-spacing:0.45px;">1.004</div>
<div class="t" style="left:1228px;top:244.7px;font-size:11px;line-height:12px;color:#222;letter-spacing:0.45px;">0.996</div>
<div class="t" style="left:1294.5px;top:244.7px;font-size:11px;line-height:12px;color:#222;letter-spacing:0.45px;">151</div>
<div style="position:absolute;left:854px;top:260.8px;width:502px;height:16.0px;background:#d9d9d9"></div>
<div class="t" style="left:856px;top:262.8px;font-size:10.5px;line-height:12px;color:#222;">光斑功率</div>
<div class="t" style="left:929px;top:262.8px;font-size:11px;line-height:12px;color:#222;">W</div>
<div class="t" style="left:968px;top:262.8px;font-size:11px;line-height:12px;color:#222;letter-spacing:0.45px;">0.961</div>
<div class="t" style="left:1033px;top:262.8px;font-size:11px;line-height:12px;color:#222;letter-spacing:0.45px;">0.960</div>
<div class="t" style="left:1098.5px;top:262.8px;font-size:11px;line-height:12px;color:#222;letter-spacing:0.45px;">0.001</div>
<div class="t" style="left:1163px;top:262.8px;font-size:11px;line-height:12px;color:#222;letter-spacing:0.45px;">0.964</div>
<div class="t" style="left:1228px;top:262.8px;font-size:11px;line-height:12px;color:#222;letter-spacing:0.45px;">0.957</div>
<div class="t" style="left:1294.5px;top:262.8px;font-size:11px;line-height:12px;color:#222;letter-spacing:0.45px;">151</div>
<div class="t" style="left:856px;top:280.90000000000003px;font-size:10.5px;line-height:12px;color:#222;">ROI总幅值</div>
<div class="t" style="left:929px;top:280.90000000000003px;font-size:11px;line-height:12px;color:#222;"></div>
<div class="t" style="left:968px;top:280.90000000000003px;font-size:11px;line-height:12px;color:#222;letter-spacing:0.45px;">5.036e+07</div>
<div class="t" style="left:1033px;top:280.90000000000003px;font-size:11px;line-height:12px;color:#222;letter-spacing:0.45px;">5.035e+07</div>
<div class="t" style="left:1098.5px;top:280.90000000000003px;font-size:11px;line-height:12px;color:#222;letter-spacing:0.45px;">7.528e+04</div>
<div class="t" style="left:1163px;top:280.90000000000003px;font-size:11px;line-height:12px;color:#222;letter-spacing:0.45px;">5.054e+07</div>
<div class="t" style="left:1228px;top:280.90000000000003px;font-size:11px;line-height:12px;color:#222;letter-spacing:0.45px;">5.017e+07</div>
<div class="t" style="left:1294.5px;top:280.90000000000003px;font-size:11px;line-height:12px;color:#222;letter-spacing:0.45px;">151</div>
<div style="position:absolute;left:854px;top:297.00000000000006px;width:502px;height:16.0px;background:#99c8ff"></div>
<div class="t" style="left:856px;top:299.00000000000006px;font-size:10.5px;line-height:12px;color:#222;">ROI功率</div>
<div class="t" style="left:929px;top:299.00000000000006px;font-size:11px;line-height:12px;color:#222;">W</div>
<div class="t" style="left:968px;top:299.00000000000006px;font-size:11px;line-height:12px;color:#222;letter-spacing:0.45px;">0.209</div>
<div class="t" style="left:1033px;top:299.00000000000006px;font-size:11px;line-height:12px;color:#222;letter-spacing:0.45px;">0.209</div>
<div class="t" style="left:1098.5px;top:299.00000000000006px;font-size:11px;line-height:12px;color:#222;letter-spacing:0.45px;">0.000</div>
<div class="t" style="left:1163px;top:299.00000000000006px;font-size:11px;line-height:12px;color:#222;letter-spacing:0.45px;">0.210</div>
<div class="t" style="left:1228px;top:299.00000000000006px;font-size:11px;line-height:12px;color:#222;letter-spacing:0.45px;">0.208</div>
<div class="t" style="left:1294.5px;top:299.00000000000006px;font-size:11px;line-height:12px;color:#222;letter-spacing:0.45px;">151</div>
<svg style="position:absolute;left:831px;top:319.1000000000001px" width="8" height="6"><path d="M1 1 L4 4 L7 1" stroke="#555" fill="none"/></svg>
<div class="t" style="left:843px;top:317.1000000000001px;font-size:10.5px;line-height:12px;color:#333;">空间</div>
<svg style="position:absolute;left:917px;top:324.1000000000001px" width="8" height="5"><path d="M1 0.5 H7 L4 4 Z" fill="#111"/></svg>
<div style="position:absolute;left:854px;top:333.2000000000001px;width:502px;height:16.0px;background:#d9d9d9"></div>
<div class="t" style="left:856px;top:335.2000000000001px;font-size:10.5px;line-height:12px;color:#222;">质心X轴坐标</div>
<div class="t" style="left:929px;top:335.2000000000001px;font-size:11px;line-height:12px;color:#222;">µm</div>
<div class="t" style="left:968px;top:335.2000000000001px;font-size:11px;line-height:12px;color:#222;letter-spacing:0.45px;">3632.645</div>
<div class="t" style="left:1033px;top:335.2000000000001px;font-size:11px;line-height:12px;color:#222;letter-spacing:0.45px;">3632.494</div>
<div class="t" style="left:1098.5px;top:335.2000000000001px;font-size:11px;line-height:12px;color:#222;letter-spacing:0.45px;">0.163</div>
<div class="t" style="left:1163px;top:335.2000000000001px;font-size:11px;line-height:12px;color:#222;letter-spacing:0.45px;">3633.240</div>
<div class="t" style="left:1228px;top:335.2000000000001px;font-size:11px;line-height:12px;color:#222;letter-spacing:0.45px;">3632.228</div>
<div class="t" style="left:1294.5px;top:335.2000000000001px;font-size:11px;line-height:12px;color:#222;letter-spacing:0.45px;">151</div>
<div class="t" style="left:856px;top:353.3000000000001px;font-size:10.5px;line-height:12px;color:#222;">质心Y轴坐标</div>
<div class="t" style="left:929px;top:353.3000000000001px;font-size:11px;line-height:12px;color:#222;">µm</div>
<div class="t" style="left:968px;top:353.3000000000001px;font-size:11px;line-height:12px;color:#222;letter-spacing:0.45px;">3291.632</div>
<div class="t" style="left:1033px;top:353.3000000000001px;font-size:11px;line-height:12px;color:#222;letter-spacing:0.45px;">3291.283</div>
<div class="t" style="left:1098.5px;top:353.3000000000001px;font-size:11px;line-height:12px;color:#222;letter-spacing:0.45px;">0.347</div>
<div class="t" style="left:1163px;top:353.3000000000001px;font-size:11px;line-height:12px;color:#222;letter-spacing:0.45px;">3291.769</div>
<div class="t" style="left:1228px;top:353.3000000000001px;font-size:11px;line-height:12px;color:#222;letter-spacing:0.45px;">3289.444</div>
<div class="t" style="left:1294.5px;top:353.3000000000001px;font-size:11px;line-height:12px;color:#222;letter-spacing:0.45px;">151</div>
<div style="position:absolute;left:854px;top:369.40000000000015px;width:502px;height:10.599999999999852px;background:#d9d9d9"></div>
<div class="t" style="left:856px;top:371.40000000000015px;font-size:10.5px;line-height:12px;color:#222;">D4σX</div>
<div class="t" style="left:929px;top:371.40000000000015px;font-size:11px;line-height:12px;color:#222;">µm</div>
<div class="t" style="left:968px;top:371.40000000000015px;font-size:11px;line-height:12px;color:#222;letter-spacing:0.45px;">5754.711</div>
<div class="t" style="left:1033px;top:371.40000000000015px;font-size:11px;line-height:12px;color:#222;letter-spacing:0.45px;">5754.176</div>
<div class="t" style="left:1098.5px;top:371.40000000000015px;font-size:11px;line-height:12px;color:#222;letter-spacing:0.45px;">0.401</div>
<div class="t" style="left:1163px;top:371.40000000000015px;font-size:11px;line-height:12px;color:#222;letter-spacing:0.45px;">5755.107</div>
<div class="t" style="left:1228px;top:371.40000000000015px;font-size:11px;line-height:12px;color:#222;letter-spacing:0.45px;">5753.310</div>
<div class="t" style="left:1294.5px;top:371.40000000000015px;font-size:11px;line-height:12px;color:#222;letter-spacing:0.45px;">151</div>
<div style="position:absolute;left:822px;top:379px;width:536px;height:7px;background:#f0f0f0"></div>
<div style="position:absolute;left:828px;top:380px;width:529px;height:1px;background:#d0d0d0"></div>
<div style="position:absolute;left:822px;top:385.5px;width:536px;height:1.5px;background:#8a8a8a"></div>
<div style="position:absolute;left:822px;top:388px;width:536px;height:1px;background:#8a8a8a"></div>
<div style="position:absolute;left:822px;top:389px;width:536px;height:283px;background:#f0f0f0"></div>
<div class="t" style="left:826px;top:392px;font-size:10px;line-height:11px;color:#555;">增强显示</div>
<svg style="position:absolute;left:834px;top:423px" width="10" height="10"><rect x="0.5" y="0.5" width="9" height="9" fill="#fff" stroke="#333"/></svg>
<div class="t" style="left:846px;top:421px;font-size:10px;line-height:12px;color:#333;">当前值</div>
<svg style="position:absolute;left:882px;top:423px" width="10" height="10"><rect x="0.5" y="0.5" width="9" height="9" fill="#fff" stroke="#333"/><path d="M2 4.8 L4 7 L7.5 2.5" stroke="#333" fill="none" stroke-width="1"/></svg>
<div class="t" style="left:894px;top:421px;font-size:10px;line-height:12px;color:#333;">平均值</div>
<svg style="position:absolute;left:930px;top:423px" width="10" height="10"><rect x="0.5" y="0.5" width="9" height="9" fill="#fff" stroke="#333"/><path d="M2 4.8 L4 7 L7.5 2.5" stroke="#333" fill="none" stroke-width="1"/></svg>
<div class="t" style="left:942px;top:421px;font-size:10px;line-height:12px;color:#333;">标准差</div>
<div style="position:absolute;left:980px;top:425px;width:220px;height:3px;background:#e3e3e3;border-radius:1px"></div>
<div style="position:absolute;left:1100px;top:419px;width:8px;height:15px;background:#1874d6"></div>
<div style="position:absolute;left:834px;top:441px;width:523px;height:220px;background:#fff;border:1px solid #c4c4c4;box-sizing:border-box"></div>
<div class="t" style="left:950px;top:459px;font-size:18px;line-height:20px;color:#222;">ROI功率 :</div>
<div class="t" style="left:1039.5px;top:451px;font-size:30px;line-height:30px;color:#2f62f0;word-spacing:5px;letter-spacing:0.32px;">/ 0.209 / 0.000 W</div>
<div class="t" style="left:927.5px;top:504px;font-size:18px;line-height:20px;color:#222;">D4σ :</div>
<div class="t" style="left:987.7px;top:496px;font-size:30px;line-height:30px;color:#2f62f0;word-spacing:5px;letter-spacing:0.74px;">/ 5268.818 / 0.261 µm</div>
<div class="t" style="left:954px;top:549px;font-size:18px;line-height:20px;color:#222;">D4σ椭圆率 :</div>
<div class="t" style="left:1069.3px;top:541px;font-size:30px;line-height:30px;color:#2f62f0;word-spacing:5px;letter-spacing:0.83px;">/ 0.823 / 0.000</div>
<div class="t" style="left:924.5px;top:594.5px;font-size:18px;line-height:20px;color:#222;">Dpk :</div>
<div class="t" style="left:981.8px;top:586.5px;font-size:30px;line-height:30px;color:#2f62f0;word-spacing:5px;letter-spacing:0.83px;">/ 5573.575 / 19.456 µm</div>
<div style="position:absolute;left:178px;top:672px;width:1181px;height:1px;background:#8a8a8a"></div>
<div style="position:absolute;left:178px;top:673px;width:1181px;height:17px;background:linear-gradient(#fafafa,#f0f0f0 55%,#d6d6d6 90%,#bdbdbd)"></div>
<div class="t" style="left:180px;top:677px;font-size:10.5px;line-height:12px;color:#333;">2048x2048 &nbsp;&nbsp; X:0.00um,Y:0.00um I:4; 1.57%</div>
<div class="t" style="left:1305px;top:677px;font-size:10.5px;line-height:12px;color:#333;">fps:6.2</div>
<svg style="position:absolute;left:1345px;top:676px" width="13" height="13"><path d="M3 12 H12 V3" stroke="#ccc" stroke-width="3" fill="none"/></svg>
<div style="position:absolute;left:172px;top:0px;width:1194px;height:3px;background:#ed7d31"></div>
<div style="position:absolute;left:172px;top:113px;width:1194px;height:3px;background:#ed7d31"></div>
<div style="position:absolute;left:172px;top:0px;width:3px;height:116px;background:#ed7d31"></div>
<div style="position:absolute;left:1363px;top:0px;width:3px;height:116px;background:#ed7d31"></div>
<div style="position:absolute;left:172px;top:123px;width:635px;height:3px;background:#25c52a"></div>
<div style="position:absolute;left:172px;top:665px;width:635px;height:3px;background:#25c52a"></div>
<div style="position:absolute;left:172px;top:123px;width:3px;height:545px;background:#25c52a"></div>
<div style="position:absolute;left:804px;top:123px;width:3px;height:545px;background:#25c52a"></div>
<div style="position:absolute;left:823px;top:123px;width:542px;height:3px;background:#ff0000"></div>
<div style="position:absolute;left:823px;top:673px;width:542px;height:3px;background:#ff0000"></div>
<div style="position:absolute;left:823px;top:123px;width:3px;height:553px;background:#ff0000"></div>
<div style="position:absolute;left:1362px;top:123px;width:3px;height:553px;background:#ff0000"></div>
<svg style="position:absolute;left:0;top:0" width="1545" height="815"><path d="M1366,46.5 H1406.5 V73" stroke="#5b9bd5" stroke-width="1.3" fill="none"/><polygon points="1400.3,72 1413,72 1406.6,85" fill="#5b9bd5"/><path d="M181,243 H102.5 V289" stroke="#5b9bd5" stroke-width="1.3" fill="none"/><polygon points="96.5,288 108.8,288 102.6,300.5" fill="#5b9bd5"/><path d="M1366,434.5 H1406.5 V470" stroke="#5b9bd5" stroke-width="1.3" fill="none"/><polygon points="1400.2,469.5 1413,469.5 1406.6,482.5" fill="#5b9bd5"/></svg>
<div class="t" style="left:1379px;top:93.5px;font-size:20.7px;line-height:25px;color:#222;">主菜单功能设<br>置区：用于显<br>示、调整参数、<br>管理员权限等<br>功能</div>
<div class="t" style="left:36px;top:330px;font-size:20.7px;line-height:25px;color:#222;">测试光斑图像<br>显示区</div>
<div class="t" style="left:1386px;top:493.5px;font-size:20.7px;line-height:24.8px;color:#222;">测试数据显示<br>区：光斑功率、<br>光斑测试数据<br>（坐标，直径，<br>椭圆度等）光<br>斑平顶均匀性<br>发散角等.</div>
<div class="t" style="left:170px;top:741px;font-size:24.7px;line-height:30px;color:#111;"><b>窗口特点</b>：所有的显示窗口可自由组合并保存配置文件，方便调用，也可使用系统默认的配置管理功能，根据<br>需求一键布置窗口。灵活多变，满足个性化习惯。</div></body></html>
